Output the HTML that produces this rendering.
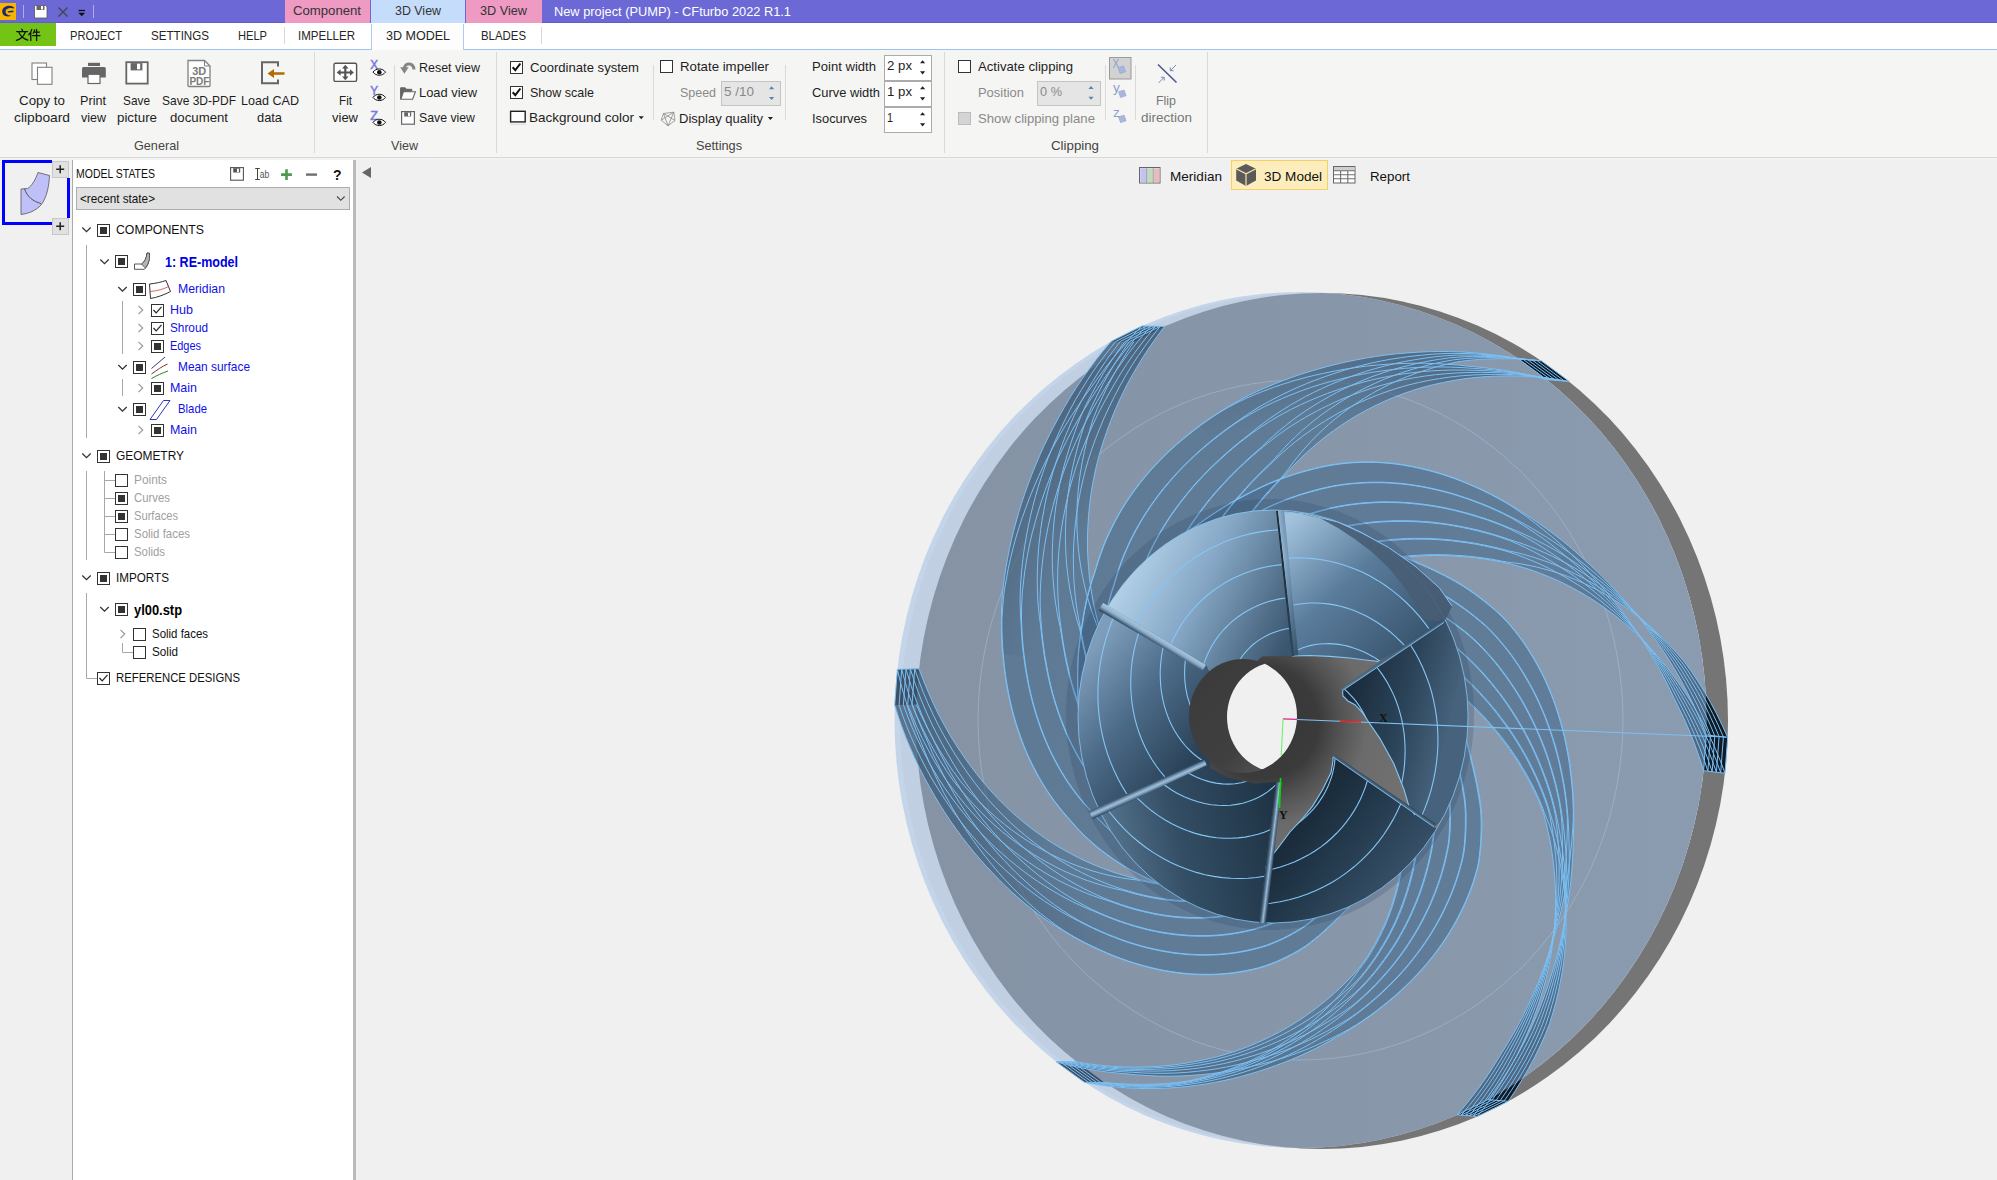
<!DOCTYPE html>
<html><head><meta charset="utf-8"><title>CFturbo</title><style>
*{box-sizing:border-box}
html,body{margin:0;padding:0}
body{width:1997px;height:1180px;overflow:hidden;background:#f0f0f0;font-family:"Liberation Sans",sans-serif;position:relative}
.a{position:absolute}
.t{position:absolute;white-space:nowrap;transform-origin:0 50%;line-height:20px;height:20px}
svg{position:absolute;overflow:visible}
.cb{position:absolute;width:13px;height:13px;border:1px solid #333;background:#fff}
.cbm::after{content:"";position:absolute;left:2px;top:2px;width:7px;height:7px;background:#333}
.sp{position:absolute;background:#fff;border:1px solid #ababab}
.spd{background:#e5e5e5;border-color:#c4c4c4}
.vs{position:absolute;width:1px;background:#dadada}
</style></head><body>
<svg width="1997" height="1180" viewBox="0 0 1997 1180" style="left:0;top:0">
<defs>
<clipPath id="cHub"><ellipse cx="1322" cy="721" rx="406" ry="428"/></clipPath>
<clipPath id="cSh"><ellipse cx="1300.5" cy="720" rx="406" ry="428"/></clipPath>
<clipPath id="cNotSh"><path clip-rule="evenodd" d="M800,200H1800V1200H800Z M894.5,720 a406,428 0 1,0 812,0 a406,428 0 1,0 -812,0Z"/></clipPath>
<linearGradient id="gFace" x1="0" x2="1" y1="0" y2="0"><stop offset="0" stop-color="#8593a5"/><stop offset="0.5" stop-color="#8796a9"/><stop offset="1" stop-color="#8c9cb0"/></linearGradient>
</defs>
<ellipse cx="1322" cy="721" rx="406" ry="428" fill="#757575"/>
<ellipse cx="1300.5" cy="720" rx="406" ry="428" fill="#c5d5e9"/>
<ellipse cx="1304" cy="720" rx="404" ry="426.5" fill="#c0cfe1" clip-path="url(#cSh)"/>
<g clip-path="url(#cSh)"><ellipse cx="1322" cy="721" rx="406" ry="428" fill="url(#gFace)"/></g>
<ellipse cx="1300.5" cy="720" rx="322.5" ry="340" fill="none" stroke="#a9c4dd" stroke-width="0.7" opacity="0.7"/>
<defs><path id="bf0" d="M1706.3,734.9 L1701.9,723.8 L1697.2,712.9 L1716.6,713.8 L1722.3,725.5 L1727.7,737.4Z M1697.2,712.9 L1692.3,702.3 L1687.1,691.9 L1704.3,691.5 L1710.6,702.5 L1716.6,713.8Z M1687.1,691.9 L1681.8,681.7 L1676.2,671.7 L1690.8,670.6 L1697.7,680.9 L1704.3,691.5Z M1676.2,671.7 L1670.4,662.1 L1664.4,652.6 L1676.6,652.8 L1683.7,661.0 L1690.8,670.6Z M1664.4,652.6 L1658.2,643.4 L1651.9,634.5 L1662.0,637.6 L1669.4,645.0 L1676.6,652.8Z M1651.9,634.5 L1645.4,625.8 L1638.8,617.3 L1647.0,623.8 L1654.5,630.5 L1662.0,637.6Z M1647.0,623.8 L1639.4,617.5 L1631.5,611.5 L1625.3,601.2 L1632.0,609.2 L1638.8,617.3Z M1631.5,611.5 L1623.6,605.9 L1615.7,600.6 L1611.4,586.0 L1618.4,593.5 L1625.3,601.2Z M1615.7,600.6 L1607.6,595.7 L1599.6,591.2 L1597.3,571.8 L1604.4,578.8 L1611.4,586.0Z M1599.6,591.2 L1591.6,587.0 L1583.6,583.2 L1583.0,558.5 L1590.1,565.0 L1597.3,571.8Z M1583.6,583.2 L1575.6,579.7 L1567.7,576.5 L1568.7,546.0 L1575.9,552.1 L1583.0,558.5Z M1567.7,576.5 L1559.7,573.7 L1551.9,571.2 L1554.2,534.4 L1561.5,540.1 L1568.7,546.0Z M1551.9,571.2 L1544.2,569.0 L1536.5,567.0 L1539.5,523.8 L1546.9,529.0 L1554.2,534.4Z M1536.5,567.0 L1529.0,565.4 L1521.6,564.0 L1525.0,514.0 L1532.2,518.7 L1539.5,523.8Z M1521.6,564.0 L1514.3,562.9 L1507.2,562.1 L1510.7,505.1 L1517.9,509.4 L1525.0,514.0Z M1507.2,562.1 L1499.1,560.6 L1490.6,559.0 L1496.4,496.9 L1503.6,500.9 L1510.7,505.1Z M1490.6,559.0 L1482.0,557.8 L1473.6,556.7 L1482.0,489.7 L1489.2,493.2 L1496.4,496.9Z M1473.6,556.7 L1465.3,555.9 L1457.0,555.4 L1467.5,483.3 L1474.7,486.4 L1482.0,489.7Z M1457.0,555.4 L1449.1,554.9 L1441.1,554.7 L1453.1,477.6 L1460.3,480.4 L1467.5,483.3Z M1441.1,554.7 L1433.4,554.7 L1425.8,554.8 L1438.6,472.9 L1445.8,475.2 L1453.1,477.6Z M1425.8,554.8 L1418.2,555.3 L1411.0,555.7 L1424.2,468.9 L1431.4,470.8 L1438.6,472.9Z M1411.0,555.7 L1403.8,556.4 L1396.8,557.3 L1409.8,465.9 L1417.0,467.3 L1424.2,468.9Z M1396.8,557.3 L1390.0,558.1 L1383.4,559.2 L1395.4,463.6 L1402.6,464.6 L1409.8,465.9Z M1383.4,559.2 L1377.0,560.3 L1370.7,561.5 L1381.2,462.3 L1388.3,462.9 L1395.4,463.6Z M1370.7,561.5 L1364.6,562.9 L1358.7,564.2 L1367.1,461.9 L1374.1,462.0 L1381.2,462.3Z M1358.7,564.2 L1353.0,565.7 L1347.4,567.2 L1353.2,462.3 L1360.1,462.0 L1367.1,461.9Z M1347.4,567.2 L1342.0,568.7 L1336.8,570.4 L1339.6,463.6 L1346.4,462.8 L1353.2,462.3Z M1336.8,570.4 L1331.7,572.1 L1326.7,573.8 L1326.3,465.7 L1332.9,464.5 L1339.6,463.6Z M1326.7,573.8 L1322.0,575.6 L1317.4,577.4 L1313.3,468.7 L1319.7,467.1 L1326.3,465.7Z M1317.4,577.4 L1312.9,579.2 L1308.6,581.0 L1299.9,472.3 L1306.7,470.4 L1313.3,468.7Z M1308.6,581.0 L1304.4,583.0 L1300.3,584.9 L1286.6,476.6 L1293.2,474.3 L1299.9,472.3Z M1300.3,584.9 L1296.3,586.7 L1292.5,588.7 L1273.8,481.4 L1280.1,478.9 L1286.6,476.6Z M1292.5,588.7 L1288.8,590.7 L1285.1,592.7 L1261.5,486.8 L1267.6,484.0 L1273.8,481.4Z M1285.1,592.7 L1281.6,594.8 L1278.2,596.9 L1249.3,492.8 L1255.4,489.8 L1261.5,486.8Z M1278.2,596.9 L1274.9,599.1 L1271.7,601.2 L1237.3,499.1 L1243.2,495.9 L1249.3,492.8Z M1271.7,601.2 L1268.6,603.4 L1265.6,605.6 L1226.0,505.6 L1231.6,502.3 L1237.3,499.1Z M1265.6,605.6 L1262.7,607.9 L1259.9,610.2 L1215.3,512.4 L1220.5,509.0 L1226.0,505.6Z M1259.9,610.2 L1257.2,612.5 L1254.5,614.8 L1205.1,519.3 L1210.1,515.8 L1215.3,512.4Z M1254.5,614.8 L1252.0,617.2 L1249.6,619.6 L1195.5,526.1 L1200.3,522.7 L1205.1,519.3Z M1249.6,619.6 L1247.2,622.0 L1245.0,624.4 L1186.4,532.6 L1190.9,529.3 L1195.5,526.1Z M1245.0,624.4 L1242.8,626.9 L1240.8,629.4 L1177.7,538.9 L1182.0,535.8 L1186.4,532.6Z M1240.8,629.4 L1238.8,631.9 L1236.9,634.4 L1169.2,544.8 L1173.4,541.9 L1177.7,538.9Z M1236.9,634.4 L1235.1,636.9 L1233.4,639.4 L1161.0,550.6 L1165.1,547.7 L1169.2,544.8Z M1233.4,639.4 L1231.8,641.9 L1230.2,644.3 L1153.1,556.8 L1157.0,553.6 L1161.0,550.6Z M1230.2,644.3 L1228.7,646.8 L1227.3,649.2 L1145.4,563.3 L1149.2,560.0 L1153.1,556.8Z M1227.3,649.2 L1225.9,651.6 L1224.7,654.0 L1138.1,570.3 L1141.7,566.8 L1145.4,563.3Z M1224.7,654.0 L1223.4,656.3 L1222.2,658.6 L1131.2,577.7 L1134.6,574.0 L1138.1,570.3Z M1222.2,658.6 L1221.1,660.8 L1219.9,662.9 L1124.6,585.4 L1127.8,581.5 L1131.2,577.7Z M1219.9,662.9 L1218.8,665.1 L1217.6,667.1 L1118.4,593.5 L1121.4,589.4 L1124.6,585.4Z M1217.6,667.1 L1216.4,669.0 L1215.3,670.9 L1112.6,601.9 L1115.4,597.7 L1118.4,593.5Z M1703.6,770.7 L1700.1,759.6 L1696.3,748.8 L1715.7,749.7 L1720.5,761.3 L1725.0,773.2Z M1696.3,748.8 L1692.3,738.1 L1688.0,727.7 L1705.3,727.3 L1710.6,738.3 L1715.7,749.7Z M1688.0,727.7 L1683.5,717.5 L1678.7,707.5 L1693.7,706.3 L1699.6,716.7 L1705.3,727.3Z M1678.7,707.5 L1673.8,697.4 L1668.5,686.4 L1681.0,686.6 L1687.5,696.3 L1693.7,706.3Z M1668.5,686.4 L1663.0,675.6 L1657.3,665.1 L1667.5,668.2 L1674.3,677.2 L1681.0,686.6Z M1657.3,665.1 L1651.3,654.8 L1645.1,644.7 L1653.3,651.2 L1660.5,659.5 L1667.5,668.2Z M1645.1,644.7 L1638.7,634.9 L1632.2,625.4 L1638.3,635.7 L1645.9,643.3 L1653.3,651.2Z M1638.3,635.7 L1630.6,628.5 L1622.7,621.7 L1618.6,607.0 L1625.4,616.1 L1632.2,625.4Z M1622.7,621.7 L1614.6,615.2 L1606.5,609.2 L1604.5,589.6 L1611.6,598.2 L1618.6,607.0Z M1606.5,609.2 L1598.4,603.4 L1590.2,598.1 L1589.9,573.2 L1597.2,581.3 L1604.5,589.6Z M1590.2,598.1 L1581.9,593.1 L1573.6,588.5 L1575.0,557.8 L1582.5,565.3 L1589.9,573.2Z M1573.6,588.5 L1565.3,584.2 L1557.0,580.2 L1559.6,543.3 L1567.4,550.4 L1575.0,557.8Z M1557.0,580.2 L1548.8,576.7 L1540.5,573.4 L1543.7,530.0 L1551.7,536.5 L1559.6,543.3Z M1540.5,573.4 L1532.4,570.4 L1524.2,567.8 L1527.8,517.6 L1535.7,523.6 L1543.7,530.0Z M1524.2,567.8 L1516.2,565.5 L1508.2,563.4 L1511.8,506.4 L1519.8,511.9 L1527.8,517.6Z M1508.2,563.4 L1500.0,561.7 L1491.5,560.1 L1497.4,498.0 L1504.5,501.9 L1511.8,506.4Z M1491.5,560.1 L1483.0,558.8 L1474.6,557.7 L1483.0,490.7 L1490.2,494.2 L1497.4,498.0Z M1474.6,557.7 L1466.3,556.9 L1458.0,556.3 L1468.6,484.2 L1475.8,487.3 L1483.0,490.7Z M1458.0,556.3 L1450.1,555.8 L1442.2,555.6 L1454.2,478.5 L1461.4,481.2 L1468.6,484.2Z M1442.2,555.6 L1434.5,555.5 L1426.9,555.7 L1439.8,473.7 L1447.0,476.0 L1454.2,478.5Z M1426.9,555.7 L1419.4,556.1 L1412.1,556.5 L1425.3,469.7 L1432.5,471.6 L1439.8,473.7Z M1412.1,556.5 L1404.9,557.2 L1398.0,558.0 L1411.0,466.5 L1418.1,468.0 L1425.3,469.7Z M1398.0,558.0 L1391.2,558.8 L1384.6,559.8 L1396.7,464.2 L1403.8,465.3 L1411.0,466.5Z M1384.6,559.8 L1378.2,560.9 L1372.0,562.1 L1382.5,462.8 L1389.6,463.4 L1396.7,464.2Z M1372.0,562.1 L1365.9,563.4 L1360.0,564.7 L1368.4,462.4 L1375.4,462.5 L1382.5,462.8Z M1360.0,564.7 L1354.3,566.2 L1348.7,567.6 L1354.6,462.7 L1361.5,462.4 L1368.4,462.4Z M1348.7,567.6 L1343.3,569.1 L1338.1,570.8 L1341.0,463.9 L1347.7,463.2 L1354.6,462.7Z M1338.1,570.8 L1333.0,572.4 L1328.1,574.1 L1327.6,466.0 L1334.3,464.8 L1341.0,463.9Z M1328.1,574.1 L1323.3,575.8 L1318.7,577.6 L1314.6,468.8 L1321.1,467.3 L1327.6,466.0Z M1318.7,577.6 L1314.2,579.4 L1309.8,581.2 L1301.2,472.4 L1308.0,470.5 L1314.6,468.8Z M1309.8,581.2 L1305.6,583.0 L1301.5,584.9 L1287.9,476.6 L1294.5,474.4 L1301.2,472.4Z M1301.5,584.9 L1297.5,586.7 L1293.7,588.7 L1275.1,481.4 L1281.5,478.9 L1287.9,476.6Z M1293.7,588.7 L1289.9,590.6 L1286.3,592.6 L1262.8,486.7 L1268.9,483.9 L1275.1,481.4Z M1286.3,592.6 L1282.7,594.7 L1279.3,596.8 L1250.6,492.6 L1256.8,489.6 L1262.8,486.7Z M1279.3,596.8 L1276.0,598.9 L1272.8,601.0 L1238.7,498.8 L1244.6,495.7 L1250.6,492.6Z M1272.8,601.0 L1269.6,603.2 L1266.6,605.4 L1227.3,505.3 L1232.9,502.0 L1238.7,498.8Z M1266.6,605.4 L1263.7,607.6 L1260.9,609.9 L1216.6,512.0 L1221.9,508.6 L1227.3,505.3Z M1260.9,609.9 L1258.1,612.2 L1255.5,614.5 L1206.4,518.8 L1211.4,515.4 L1216.6,512.0Z M1255.5,614.5 L1252.9,616.8 L1250.5,619.2 L1196.8,525.5 L1201.5,522.1 L1206.4,518.8Z M1250.5,619.2 L1248.1,621.6 L1245.8,624.0 L1187.6,532.0 L1192.2,528.7 L1196.8,525.5Z M1245.8,624.0 L1243.7,626.4 L1241.6,628.9 L1178.9,538.2 L1183.2,535.1 L1187.6,532.0Z M1241.6,628.9 L1239.6,631.4 L1237.7,633.9 L1170.4,544.0 L1174.6,541.2 L1178.9,538.2Z M1237.7,633.9 L1235.9,636.4 L1234.1,638.9 L1162.1,549.8 L1166.2,546.9 L1170.4,544.0Z M1234.1,638.9 L1232.5,641.3 L1230.9,643.8 L1154.1,555.9 L1158.1,552.8 L1162.1,549.8Z M1230.9,643.8 L1229.4,646.2 L1227.9,648.6 L1146.5,562.4 L1150.3,559.1 L1154.1,555.9Z M1227.9,648.6 L1226.6,651.0 L1225.3,653.4 L1139.1,569.3 L1142.7,565.8 L1146.5,562.4Z M1225.3,653.4 L1224.0,655.7 L1222.8,657.9 L1132.1,576.7 L1135.6,573.0 L1139.1,569.3Z M1222.8,657.9 L1221.6,660.2 L1220.4,662.3 L1125.5,584.4 L1128.7,580.5 L1132.1,576.7Z M1220.4,662.3 L1219.3,664.4 L1218.1,666.4 L1119.2,592.4 L1122.3,588.3 L1125.5,584.4Z M1218.1,666.4 L1216.9,668.3 L1215.7,670.3 L1113.4,600.8 L1116.2,596.5 L1119.2,592.4Z M1725.0,773.2 L1703.6,770.7 L1706.3,734.9 L1727.7,737.4Z"/><path id="bf1" d="M1541.3,360.8 L1528.8,359.7 L1516.4,358.9 L1495.7,355.2 L1507.2,356.9 L1518.6,359.0Z M1516.4,358.9 L1504.1,358.7 L1491.9,358.8 L1473.0,352.7 L1484.3,353.8 L1495.7,355.2Z M1491.9,358.8 L1479.9,359.4 L1468.0,360.4 L1450.6,351.6 L1461.8,352.0 L1473.0,352.7Z M1468.0,360.4 L1456.5,361.9 L1446.3,364.3 L1428.7,351.7 L1439.6,351.5 L1450.6,351.6Z M1446.3,364.3 L1436.2,366.9 L1426.4,369.9 L1407.1,352.9 L1417.9,352.2 L1428.7,351.7Z M1426.4,369.9 L1416.8,373.0 L1407.5,376.5 L1386.0,355.0 L1396.5,353.8 L1407.1,352.9Z M1407.5,376.5 L1398.4,380.2 L1389.6,384.3 L1365.6,358.1 L1375.7,356.5 L1386.0,355.0Z M1389.6,384.3 L1381.0,388.6 L1372.7,393.2 L1345.7,362.0 L1355.6,360.0 L1365.6,358.1Z M1372.7,393.2 L1364.6,398.0 L1356.8,403.0 L1326.5,366.7 L1336.0,364.3 L1345.7,362.0Z M1356.8,403.0 L1349.3,408.1 L1342.1,413.4 L1308.0,372.0 L1317.2,369.3 L1326.5,366.7Z M1342.1,413.4 L1335.2,418.9 L1328.6,424.5 L1290.3,377.9 L1299.1,374.8 L1308.0,372.0Z M1328.6,424.5 L1322.3,430.3 L1316.2,436.1 L1273.1,384.5 L1281.6,381.1 L1290.3,377.9Z M1316.2,436.1 L1310.5,442.0 L1305.0,448.0 L1256.7,391.6 L1264.8,388.0 L1273.1,384.5Z M1305.0,448.0 L1299.9,454.0 L1295.0,460.1 L1241.1,399.4 L1248.7,395.4 L1256.7,391.6Z M1295.0,460.1 L1290.4,466.1 L1286.1,472.1 L1226.5,407.7 L1233.7,403.5 L1241.1,399.4Z M1286.1,472.1 L1280.6,478.4 L1274.6,484.6 L1212.6,416.5 L1219.5,412.1 L1226.5,407.7Z M1274.6,484.6 L1268.9,490.9 L1263.4,497.1 L1199.3,425.8 L1205.9,421.1 L1212.6,416.5Z M1263.4,497.1 L1258.1,503.4 L1253.0,509.7 L1186.7,435.6 L1192.9,430.7 L1199.3,425.8Z M1253.0,509.7 L1248.2,515.9 L1243.6,522.0 L1174.7,445.8 L1180.6,440.6 L1186.7,435.6Z M1243.6,522.0 L1239.2,528.2 L1235.0,534.2 L1163.4,456.4 L1169.0,451.0 L1174.7,445.8Z M1235.0,534.2 L1231.1,540.4 L1227.4,546.3 L1152.9,467.4 L1158.1,461.9 L1163.4,456.4Z M1227.4,546.3 L1223.9,552.3 L1220.6,558.2 L1143.0,478.9 L1147.8,473.1 L1152.9,467.4Z M1220.6,558.2 L1217.5,563.9 L1214.6,569.6 L1133.9,490.7 L1138.3,484.7 L1143.0,478.9Z M1214.6,569.6 L1211.9,575.2 L1209.3,580.7 L1125.5,502.8 L1129.6,496.7 L1133.9,490.7Z M1209.3,580.7 L1206.9,586.1 L1204.7,591.4 L1118.0,515.3 L1121.7,509.1 L1125.5,502.8Z M1204.7,591.4 L1202.6,596.6 L1200.7,601.7 L1111.3,528.1 L1114.5,521.7 L1118.0,515.3Z M1200.7,601.7 L1198.9,606.6 L1197.3,611.6 L1105.3,541.0 L1108.2,534.5 L1111.3,528.1Z M1197.3,611.6 L1195.7,616.3 L1194.4,621.1 L1100.3,554.1 L1102.7,547.5 L1105.3,541.0Z M1194.4,621.1 L1193.1,625.7 L1191.9,630.1 L1096.1,567.3 L1098.1,560.7 L1100.3,554.1Z M1191.9,630.1 L1190.9,634.6 L1189.9,638.8 L1091.8,580.4 L1094.0,573.9 L1096.1,567.3Z M1189.9,638.8 L1189.1,643.1 L1188.3,647.2 L1088.1,593.5 L1089.9,587.0 L1091.8,580.4Z M1188.3,647.2 L1187.6,651.3 L1187.0,655.2 L1085.1,606.4 L1086.5,600.0 L1088.1,593.5Z M1187.0,655.2 L1186.5,659.1 L1186.1,663.0 L1082.8,619.2 L1083.9,612.8 L1085.1,606.4Z M1186.1,663.0 L1185.8,666.8 L1185.6,670.5 L1080.9,631.7 L1081.9,625.5 L1082.8,619.2Z M1185.6,670.5 L1185.5,674.1 L1185.4,677.7 L1079.2,644.0 L1080.0,637.9 L1080.9,631.7Z M1185.4,677.7 L1185.4,681.2 L1185.5,684.6 L1078.1,655.9 L1078.6,650.0 L1079.2,644.0Z M1185.5,684.6 L1185.7,688.0 L1185.9,691.3 L1077.6,667.5 L1077.8,661.7 L1078.1,655.9Z M1185.9,691.3 L1186.3,694.5 L1186.6,697.7 L1077.5,678.8 L1077.5,673.2 L1077.6,667.5Z M1186.6,697.7 L1187.1,700.8 L1187.6,703.9 L1077.7,689.8 L1077.5,684.3 L1077.5,678.8Z M1187.6,703.9 L1188.3,706.8 L1188.9,709.7 L1078.0,700.4 L1077.8,695.1 L1077.7,689.8Z M1188.9,709.7 L1189.7,712.6 L1190.5,715.3 L1078.5,710.9 L1078.2,705.7 L1078.0,700.4Z M1190.5,715.3 L1191.4,718.0 L1192.3,720.6 L1078.9,721.3 L1078.7,716.1 L1078.5,710.9Z M1192.3,720.6 L1193.3,723.2 L1194.3,725.7 L1079.4,731.7 L1079.1,726.5 L1078.9,721.3Z M1194.3,725.7 L1195.3,728.1 L1196.4,730.4 L1080.4,742.0 L1079.9,736.9 L1079.4,731.7Z M1196.4,730.4 L1197.5,732.7 L1198.6,734.9 L1081.9,752.3 L1081.1,747.2 L1080.4,742.0Z M1198.6,734.9 L1199.7,737.0 L1200.9,739.1 L1083.9,762.5 L1082.9,757.4 L1081.9,752.3Z M1200.9,739.1 L1202.0,741.2 L1203.2,743.2 L1086.4,772.6 L1085.1,767.5 L1083.9,762.5Z M1203.2,743.2 L1204.3,745.2 L1205.4,747.1 L1089.4,782.5 L1087.9,777.5 L1086.4,772.6Z M1205.4,747.1 L1206.5,749.1 L1207.5,751.1 L1092.9,792.2 L1091.1,787.4 L1089.4,782.5Z M1207.5,751.1 L1208.4,753.1 L1209.4,755.1 L1096.8,801.7 L1094.8,797.0 L1092.9,792.2Z M1546.5,379.5 L1535.5,376.7 L1524.5,374.2 L1545.2,377.9 L1557.2,379.5 L1569.2,381.4Z M1545.2,377.9 L1533.4,376.8 L1521.7,376.1 L1502.7,370.2 L1513.6,372.0 L1524.5,374.2Z M1521.7,376.1 L1510.1,375.8 L1498.6,376.0 L1481.1,367.4 L1491.9,368.6 L1502.7,370.2Z M1498.6,376.0 L1487.3,376.5 L1476.1,377.4 L1458.4,365.1 L1470.2,366.4 L1481.1,367.4Z M1476.1,377.4 L1465.0,378.7 L1454.2,380.4 L1434.8,363.6 L1446.6,364.2 L1458.4,365.1Z M1454.2,380.4 L1443.5,382.4 L1433.1,384.7 L1411.6,363.2 L1423.2,363.2 L1434.8,363.6Z M1433.1,384.7 L1422.9,387.3 L1412.8,390.4 L1388.8,364.1 L1400.1,363.6 L1411.6,363.2Z M1412.8,390.4 L1403.0,393.8 L1393.4,397.5 L1366.5,366.1 L1377.6,365.0 L1388.8,364.1Z M1393.4,397.5 L1384.1,401.5 L1375.0,405.8 L1344.8,369.2 L1355.6,367.6 L1366.5,366.1Z M1375.0,405.8 L1366.2,410.3 L1357.6,415.0 L1323.6,373.3 L1334.1,371.2 L1344.8,369.2Z M1357.6,415.0 L1349.4,420.0 L1341.4,425.2 L1303.1,378.1 L1313.2,375.6 L1323.6,373.3Z M1341.4,425.2 L1333.7,430.6 L1326.2,436.1 L1283.1,384.1 L1293.0,381.0 L1303.1,378.1Z M1326.2,436.1 L1319.1,441.8 L1312.3,447.6 L1263.9,391.0 L1273.4,387.4 L1283.1,384.1Z M1312.3,447.6 L1305.7,453.5 L1299.4,459.6 L1245.5,398.7 L1254.5,394.7 L1263.9,391.0Z M1299.4,459.6 L1293.4,465.7 L1287.7,471.9 L1228.2,407.4 L1236.7,402.9 L1245.5,398.7Z M1287.7,471.9 L1281.9,478.1 L1276.0,484.3 L1213.9,416.1 L1220.8,411.7 L1228.2,407.4Z M1276.0,484.3 L1270.2,490.6 L1264.7,496.8 L1200.6,425.4 L1207.2,420.7 L1213.9,416.1Z M1264.7,496.8 L1259.4,503.0 L1254.3,509.3 L1188.0,435.1 L1194.2,430.2 L1200.6,425.4Z M1254.3,509.3 L1249.5,515.4 L1244.8,521.5 L1176.0,445.2 L1181.9,440.1 L1188.0,435.1Z M1244.8,521.5 L1240.5,527.6 L1236.3,533.7 L1164.7,455.8 L1170.2,450.4 L1176.0,445.2Z M1236.3,533.7 L1232.4,539.8 L1228.6,545.7 L1154.0,466.7 L1159.3,461.2 L1164.7,455.8Z M1228.6,545.7 L1225.1,551.6 L1221.8,557.5 L1144.1,478.1 L1149.0,472.4 L1154.0,466.7Z M1221.8,557.5 L1218.7,563.2 L1215.7,568.8 L1135.0,489.9 L1139.5,483.9 L1144.1,478.1Z M1215.7,568.8 L1213.0,574.4 L1210.4,579.8 L1126.6,502.0 L1130.7,495.9 L1135.0,489.9Z M1210.4,579.8 L1208.0,585.2 L1205.8,590.5 L1119.0,514.4 L1122.7,508.1 L1126.6,502.0Z M1205.8,590.5 L1203.7,595.7 L1201.7,600.7 L1112.3,527.1 L1115.6,520.7 L1119.0,514.4Z M1201.7,600.7 L1199.9,605.7 L1198.2,610.6 L1106.3,539.9 L1109.2,533.5 L1112.3,527.1Z M1198.2,610.6 L1196.7,615.3 L1195.3,620.0 L1101.2,553.0 L1103.6,546.4 L1106.3,539.9Z M1195.3,620.0 L1193.9,624.6 L1192.7,629.1 L1096.9,566.1 L1098.9,559.6 L1101.2,553.0Z M1192.7,629.1 L1191.7,633.5 L1190.6,637.8 L1092.6,579.2 L1094.8,572.7 L1096.9,566.1Z M1190.6,637.8 L1189.8,642.0 L1189.0,646.1 L1088.8,592.3 L1090.6,585.8 L1092.6,579.2Z M1189.0,646.1 L1188.2,650.2 L1187.6,654.2 L1085.8,605.2 L1087.2,598.7 L1088.8,592.3Z M1187.6,654.2 L1187.1,658.1 L1186.6,661.9 L1083.4,617.9 L1084.5,611.5 L1085.8,605.2Z M1186.6,661.9 L1186.3,665.7 L1186.0,669.4 L1081.4,630.4 L1082.5,624.2 L1083.4,617.9Z M1186.0,669.4 L1185.9,673.0 L1185.8,676.6 L1079.7,642.6 L1080.5,636.5 L1081.4,630.4Z M1185.8,676.6 L1185.8,680.1 L1185.8,683.6 L1078.5,654.5 L1079.0,648.6 L1079.7,642.6Z M1185.8,683.6 L1186.0,686.9 L1186.2,690.3 L1077.9,666.1 L1078.1,660.4 L1078.5,654.5Z M1186.2,690.3 L1186.5,693.5 L1186.8,696.7 L1077.8,677.4 L1077.8,671.8 L1077.9,666.1Z M1186.8,696.7 L1187.3,699.8 L1187.8,702.8 L1077.9,688.3 L1077.8,682.9 L1077.8,677.4Z M1187.8,702.8 L1188.4,705.8 L1189.0,708.7 L1078.1,699.0 L1078.0,693.7 L1077.9,688.3Z M1189.0,708.7 L1189.7,711.6 L1190.5,714.4 L1078.5,709.5 L1078.3,704.3 L1078.1,699.0Z M1190.5,714.4 L1191.4,717.1 L1192.3,719.7 L1078.8,719.9 L1078.7,714.7 L1078.5,709.5Z M1192.3,719.7 L1193.2,722.3 L1194.2,724.8 L1079.3,730.3 L1079.1,725.1 L1078.8,719.9Z M1194.2,724.8 L1195.2,727.2 L1196.3,729.5 L1080.3,740.6 L1079.7,735.4 L1079.3,730.3Z M1196.3,729.5 L1197.3,731.8 L1198.5,734.0 L1081.7,750.9 L1080.9,745.8 L1080.3,740.6Z M1198.5,734.0 L1199.6,736.2 L1200.7,738.3 L1083.6,761.1 L1082.6,756.0 L1081.7,750.9Z M1200.7,738.3 L1201.8,740.4 L1202.9,742.4 L1086.1,771.2 L1084.8,766.1 L1083.6,761.1Z M1202.9,742.4 L1204.1,744.4 L1205.1,746.4 L1089.0,781.1 L1087.5,776.2 L1086.1,771.2Z M1205.1,746.4 L1206.2,748.3 L1207.2,750.3 L1092.4,790.9 L1090.6,786.0 L1089.0,781.1Z M1207.2,750.3 L1208.1,752.3 L1209.1,754.3 L1096.3,800.4 L1094.3,795.7 L1092.4,790.9Z M1569.2,381.4 L1546.5,379.5 L1518.6,359.0 L1541.3,360.8Z"/><path id="bf2" d="M1133.9,341.7 L1126.7,352.6 L1120.0,363.6 L1096.2,359.6 L1103.5,350.4 L1111.1,341.4Z M1120.0,363.6 L1113.7,374.7 L1107.7,385.9 L1082.6,378.3 L1089.3,368.9 L1096.2,359.6Z M1107.7,385.9 L1102.3,397.3 L1097.2,408.7 L1070.2,397.3 L1076.3,387.7 L1082.6,378.3Z M1097.2,408.7 L1092.8,419.9 L1089.6,430.5 L1059.1,416.6 L1064.5,406.9 L1070.2,397.3Z M1089.6,430.5 L1086.8,441.0 L1084.4,451.4 L1048.9,435.9 L1053.9,426.3 L1059.1,416.6Z M1084.4,451.4 L1082.3,461.7 L1080.5,472.0 L1039.8,455.2 L1044.2,445.6 L1048.9,435.9Z M1080.5,472.0 L1079.1,482.1 L1078.0,492.3 L1031.8,474.5 L1035.7,464.9 L1039.8,455.2Z M1078.0,492.3 L1077.3,502.3 L1077.0,512.2 L1024.8,493.6 L1028.2,484.1 L1031.8,474.5Z M1077.0,512.2 L1076.9,522.0 L1077.2,531.6 L1018.7,512.5 L1021.6,503.1 L1024.8,493.6Z M1077.2,531.6 L1077.7,541.0 L1078.5,550.2 L1013.6,531.2 L1016.1,521.9 L1018.7,512.5Z M1078.5,550.2 L1079.6,559.2 L1081.0,568.1 L1009.3,549.6 L1011.3,540.4 L1013.6,531.2Z M1081.0,568.1 L1082.6,576.7 L1084.4,585.1 L1005.9,567.8 L1007.5,558.7 L1009.3,549.6Z M1084.4,585.1 L1086.4,593.3 L1088.6,601.3 L1003.4,585.7 L1004.5,576.7 L1005.9,567.8Z M1088.6,601.3 L1091.0,608.9 L1093.6,616.4 L1001.8,603.3 L1002.4,594.5 L1003.4,585.7Z M1093.6,616.4 L1096.3,623.6 L1099.1,630.6 L1001.4,620.6 L1001.5,612.0 L1001.8,603.3Z M1099.1,630.6 L1101.4,638.3 L1103.2,646.1 L1001.7,637.7 L1001.5,629.2 L1001.4,620.6Z M1103.2,646.1 L1105.2,653.7 L1107.2,661.0 L1002.8,654.3 L1002.1,646.0 L1001.7,637.7Z M1107.2,661.0 L1109.3,668.1 L1111.6,674.9 L1004.5,670.6 L1003.6,662.5 L1002.8,654.3Z M1111.6,674.9 L1113.8,681.5 L1116.1,687.8 L1006.9,686.6 L1005.6,678.6 L1004.5,670.6Z M1116.1,687.8 L1118.6,694.0 L1121.1,699.9 L1010.1,702.1 L1008.4,694.4 L1006.9,686.6Z M1121.1,699.9 L1123.8,705.6 L1126.4,711.0 L1013.9,717.1 L1011.9,709.7 L1010.1,702.1Z M1126.4,711.0 L1129.2,716.3 L1132.0,721.3 L1018.4,731.7 L1016.0,724.5 L1013.9,717.1Z M1132.0,721.3 L1134.7,726.1 L1137.6,730.7 L1023.6,745.9 L1020.9,738.9 L1018.4,731.7Z M1137.6,730.7 L1140.4,735.2 L1143.3,739.4 L1029.4,759.4 L1026.4,752.7 L1023.6,745.9Z M1143.3,739.4 L1146.2,743.5 L1149.1,747.4 L1035.9,772.4 L1032.6,766.0 L1029.4,759.4Z M1149.1,747.4 L1152.0,751.1 L1154.8,754.6 L1043.1,784.8 L1039.4,778.7 L1035.9,772.4Z M1154.8,754.6 L1157.7,758.0 L1160.6,761.2 L1050.7,796.5 L1046.8,790.7 L1043.1,784.8Z M1160.6,761.2 L1163.5,764.3 L1166.4,767.3 L1059.0,807.6 L1054.8,802.1 L1050.7,796.5Z M1166.4,767.3 L1169.2,770.1 L1172.0,772.8 L1067.7,817.9 L1063.3,812.8 L1059.0,807.6Z M1172.0,772.8 L1174.9,775.3 L1177.7,777.7 L1076.1,827.4 L1072.0,822.7 L1067.7,817.9Z M1177.7,777.7 L1180.5,780.0 L1183.3,782.3 L1084.5,836.0 L1080.2,831.8 L1076.1,827.4Z M1183.3,782.3 L1186.0,784.4 L1188.7,786.4 L1093.2,844.0 L1088.8,840.1 L1084.5,836.0Z M1188.7,786.4 L1191.5,788.3 L1194.2,790.1 L1102.1,851.3 L1097.6,847.8 L1093.2,844.0Z M1194.2,790.1 L1197.0,791.7 L1199.7,793.3 L1110.8,857.7 L1106.6,854.6 L1102.1,851.3Z M1199.7,793.3 L1202.4,794.8 L1205.1,796.2 L1119.3,863.5 L1115.0,860.7 L1110.8,857.7Z M1205.1,796.2 L1207.8,797.5 L1210.5,798.7 L1127.9,868.7 L1123.6,866.1 L1119.3,863.5Z M1210.5,798.7 L1213.1,799.8 L1215.8,800.7 L1136.5,873.3 L1132.2,871.1 L1127.9,868.7Z M1215.8,800.7 L1218.4,801.7 L1221.0,802.5 L1145.2,877.6 L1140.9,875.5 L1136.5,873.3Z M1221.0,802.5 L1223.7,803.2 L1226.2,803.8 L1153.8,881.6 L1149.5,879.7 L1145.2,877.6Z M1226.2,803.8 L1228.8,804.3 L1231.4,804.8 L1162.4,885.7 L1158.1,883.7 L1153.8,881.6Z M1231.4,804.8 L1233.9,805.1 L1236.4,805.4 L1171.0,889.8 L1166.7,887.8 L1162.4,885.7Z M1236.4,805.4 L1238.9,805.6 L1241.3,805.6 L1179.6,894.3 L1175.3,892.0 L1171.0,889.8Z M1241.3,805.6 L1243.7,805.6 L1246.1,805.6 L1188.5,898.9 L1184.0,896.6 L1179.6,894.3Z M1246.1,805.6 L1248.4,805.5 L1250.7,805.3 L1197.5,903.1 L1192.9,901.1 L1188.5,898.9Z M1250.7,805.3 L1253.0,805.1 L1255.2,804.9 L1206.7,906.8 L1202.1,905.0 L1197.5,903.1Z M1255.2,804.9 L1257.4,804.6 L1259.6,804.3 L1216.1,910.0 L1211.4,908.5 L1206.7,906.8Z M1259.6,804.3 L1261.7,804.0 L1263.8,803.8 L1225.6,912.7 L1220.8,911.5 L1216.1,910.0Z M1263.8,803.8 L1265.9,803.4 L1268.0,803.3 L1235.3,914.9 L1230.4,913.9 L1225.6,912.7Z M1268.0,803.3 L1270.0,803.1 L1272.1,803.0 L1245.0,916.6 L1240.1,915.8 L1235.3,914.9Z M1272.1,803.0 L1274.2,803.1 L1276.3,803.2 L1254.8,917.7 L1249.9,917.2 L1245.0,916.6Z M1164.7,326.4 L1157.1,336.4 L1149.9,346.6 L1126.2,342.6 L1133.9,334.2 L1141.9,326.0Z M1149.9,346.6 L1143.1,356.9 L1136.8,367.3 L1111.7,359.7 L1118.8,351.1 L1126.2,342.6Z M1136.8,367.3 L1130.8,377.7 L1125.2,388.3 L1098.4,377.2 L1104.9,368.4 L1111.7,359.7Z M1125.2,388.3 L1120.0,399.0 L1115.2,409.7 L1084.8,396.0 L1091.9,386.3 L1098.4,377.2Z M1115.2,409.7 L1110.8,420.5 L1106.9,431.2 L1071.5,415.8 L1078.1,405.9 L1084.8,396.0Z M1106.9,431.2 L1103.2,441.9 L1099.9,452.6 L1059.2,435.9 L1065.2,425.8 L1071.5,415.8Z M1099.9,452.6 L1097.0,463.3 L1094.6,474.0 L1048.3,456.2 L1053.6,446.0 L1059.2,435.9Z M1094.6,474.0 L1092.5,484.7 L1090.8,495.3 L1038.5,476.6 L1043.2,466.4 L1048.3,456.2Z M1090.8,495.3 L1089.5,505.9 L1088.5,516.3 L1029.8,497.1 L1034.0,486.9 L1038.5,476.6Z M1088.5,516.3 L1087.9,526.6 L1087.5,536.8 L1022.3,517.6 L1026.0,507.4 L1029.8,497.1Z M1087.5,536.8 L1087.5,546.8 L1087.8,556.7 L1015.8,538.0 L1018.9,527.8 L1022.3,517.6Z M1087.8,556.7 L1088.5,566.4 L1089.3,575.9 L1010.5,558.4 L1013.0,548.2 L1015.8,538.0Z M1089.3,575.9 L1090.5,585.3 L1091.9,594.5 L1006.4,578.7 L1008.3,568.6 L1010.5,558.4Z M1091.9,594.5 L1093.5,603.4 L1095.4,612.1 L1003.4,598.9 L1004.6,588.8 L1006.4,578.7Z M1095.4,612.1 L1097.5,620.6 L1099.7,628.9 L1001.9,619.0 L1002.6,609.0 L1003.4,598.9Z M1099.7,628.9 L1101.8,637.0 L1103.6,644.8 L1002.1,636.3 L1001.9,627.8 L1001.9,619.0Z M1103.6,644.8 L1105.6,652.3 L1107.5,659.6 L1003.1,652.9 L1002.5,644.6 L1002.1,636.3Z M1107.5,659.6 L1109.6,666.7 L1111.9,673.5 L1004.7,669.2 L1003.8,661.1 L1003.1,652.9Z M1111.9,673.5 L1114.0,680.1 L1116.4,686.4 L1007.1,685.1 L1005.8,677.2 L1004.7,669.2Z M1116.4,686.4 L1118.8,692.5 L1121.3,698.4 L1010.1,700.6 L1008.5,692.9 L1007.1,685.1Z M1121.3,698.4 L1123.9,704.1 L1126.5,709.6 L1013.9,715.7 L1011.9,708.2 L1010.1,700.6Z M1126.5,709.6 L1129.2,714.8 L1132.0,719.9 L1018.3,730.3 L1016.0,723.1 L1013.9,715.7Z M1132.0,719.9 L1134.7,724.7 L1137.5,729.3 L1023.4,744.4 L1020.8,737.4 L1018.3,730.3Z M1137.5,729.3 L1140.3,733.7 L1143.1,738.0 L1029.2,758.0 L1026.2,751.3 L1023.4,744.4Z M1143.1,738.0 L1146.0,742.0 L1148.8,745.9 L1035.7,771.0 L1032.4,764.6 L1029.2,758.0Z M1148.8,745.9 L1151.7,749.6 L1154.6,753.2 L1042.7,783.4 L1039.1,777.3 L1035.7,771.0Z M1154.6,753.2 L1157.4,756.6 L1160.3,759.9 L1050.3,795.2 L1046.4,789.4 L1042.7,783.4Z M1160.3,759.9 L1163.1,763.0 L1166.0,765.9 L1058.5,806.2 L1054.3,800.8 L1050.3,795.2Z M1166.0,765.9 L1168.8,768.8 L1171.6,771.5 L1067.2,816.6 L1062.8,811.5 L1058.5,806.2Z M1171.6,771.5 L1174.4,774.0 L1177.2,776.5 L1075.5,826.1 L1071.4,821.4 L1067.2,816.6Z M1177.2,776.5 L1179.9,778.9 L1182.7,781.1 L1083.8,834.8 L1079.6,830.5 L1075.5,826.1Z M1182.7,781.1 L1185.4,783.3 L1188.1,785.3 L1092.5,842.8 L1088.1,838.9 L1083.8,834.8Z M1188.1,785.3 L1190.9,787.2 L1193.6,789.1 L1101.3,850.1 L1096.9,846.6 L1092.5,842.8Z M1193.6,789.1 L1196.3,790.8 L1199.0,792.4 L1110.0,856.6 L1105.8,853.5 L1101.3,850.1Z M1199.0,792.4 L1201.7,793.9 L1204.4,795.3 L1118.4,862.4 L1114.2,859.6 L1110.0,856.6Z M1204.4,795.3 L1207.1,796.6 L1209.8,797.8 L1127.0,867.6 L1122.7,865.1 L1118.4,862.4Z M1209.8,797.8 L1212.4,799.0 L1215.1,800.0 L1135.5,872.3 L1131.2,870.1 L1127.0,867.6Z M1215.1,800.0 L1217.7,800.9 L1220.3,801.8 L1144.2,876.6 L1139.9,874.6 L1135.5,872.3Z M1220.3,801.8 L1222.9,802.5 L1225.5,803.2 L1152.7,880.8 L1148.5,878.8 L1144.2,876.6Z M1225.5,803.2 L1228.0,803.7 L1230.6,804.2 L1161.3,884.9 L1157.0,882.9 L1152.7,880.8Z M1230.6,804.2 L1233.1,804.6 L1235.6,804.9 L1169.8,889.1 L1165.6,887.0 L1161.3,884.9Z M1235.6,804.9 L1238.1,805.1 L1240.5,805.2 L1178.5,893.7 L1174.1,891.3 L1169.8,889.1Z M1240.5,805.2 L1242.9,805.2 L1245.3,805.2 L1187.2,898.3 L1182.8,896.0 L1178.5,893.7Z M1245.3,805.2 L1247.6,805.1 L1249.9,805.0 L1196.2,902.6 L1191.7,900.5 L1187.2,898.3Z M1249.9,805.0 L1252.2,804.8 L1254.4,804.6 L1205.4,906.4 L1200.8,904.5 L1196.2,902.6Z M1254.4,804.6 L1256.6,804.4 L1258.8,804.1 L1214.8,909.6 L1210.1,908.1 L1205.4,906.4Z M1258.8,804.1 L1260.9,803.8 L1263.0,803.6 L1224.3,912.4 L1219.5,911.1 L1214.8,909.6Z M1263.0,803.6 L1265.1,803.3 L1267.2,803.1 L1233.9,914.6 L1229.1,913.6 L1224.3,912.4Z M1267.2,803.1 L1269.3,803.0 L1271.3,802.9 L1243.6,916.4 L1238.8,915.6 L1233.9,914.6Z M1271.3,802.9 L1273.4,803.1 L1275.6,803.1 L1253.4,917.6 L1248.5,917.0 L1243.6,916.4Z M1133.9,341.7 L1111.1,341.4 L1141.9,326.0 L1164.7,326.4Z"/><path id="bf3" d="M916.3,704.6 L921.7,716.5 L927.4,728.2 L901.9,726.8 L898.2,716.1 L894.7,705.1Z M927.4,728.2 L933.4,739.5 L939.7,750.5 L910.2,747.7 L905.9,737.4 L901.9,726.8Z M939.7,750.5 L946.3,761.1 L953.2,771.4 L919.3,767.6 L914.6,757.8 L910.2,747.7Z M953.2,771.4 L960.3,781.0 L967.4,789.2 L929.3,786.5 L924.2,777.2 L919.3,767.6Z M967.4,789.2 L974.6,797.0 L982.0,804.4 L939.7,804.4 L934.5,795.6 L929.3,786.5Z M982.0,804.4 L989.5,811.5 L997.0,818.2 L950.7,821.3 L945.1,812.9 L939.7,804.4Z M997.0,818.2 L1004.6,824.5 L1012.5,830.5 L962.1,837.2 L956.4,829.3 L950.7,821.3Z M1012.5,830.5 L1020.4,836.1 L1028.3,841.4 L973.9,852.1 L968.0,844.7 L962.1,837.2Z M1028.3,841.4 L1036.4,846.3 L1044.4,850.8 L986.1,866.1 L980.0,859.2 L973.9,852.1Z M1044.4,850.8 L1052.4,855.0 L1060.4,858.8 L998.6,879.2 L992.4,872.7 L986.1,866.1Z M1060.4,858.8 L1068.4,862.3 L1076.3,865.5 L1011.2,891.5 L1004.9,885.4 L998.6,879.2Z M1076.3,865.5 L1084.3,868.3 L1092.1,870.8 L1024.2,902.8 L1017.7,897.3 L1011.2,891.5Z M1092.1,870.8 L1099.8,873.0 L1107.5,875.0 L1037.4,913.3 L1030.8,908.2 L1024.2,902.8Z M1107.5,875.0 L1115.0,876.6 L1122.4,878.0 L1050.9,923.0 L1044.0,918.3 L1037.4,913.3Z M1122.4,878.0 L1129.7,879.1 L1136.8,879.9 L1065.0,931.9 L1057.9,927.5 L1050.9,923.0Z M1136.8,879.9 L1144.1,881.4 L1151.1,882.8 L1079.1,940.0 L1072.0,936.0 L1065.0,931.9Z M1151.1,882.8 L1157.9,884.0 L1164.5,884.9 L1093.3,947.2 L1086.2,943.7 L1079.1,940.0Z M1164.5,884.9 L1171.0,885.6 L1177.3,886.0 L1107.5,953.6 L1100.4,950.5 L1093.3,947.2Z M1177.3,886.0 L1183.4,886.4 L1189.4,886.4 L1121.8,959.2 L1114.7,956.5 L1107.5,953.6Z M1189.4,886.4 L1195.2,886.3 L1200.9,886.0 L1136.1,963.9 L1129.0,961.7 L1121.8,959.2Z M1200.9,886.0 L1206.4,885.5 L1211.8,884.9 L1150.4,967.9 L1143.2,966.0 L1136.1,963.9Z M1211.8,884.9 L1217.1,884.1 L1222.2,883.1 L1164.6,970.9 L1157.5,969.5 L1150.4,967.9Z M1222.2,883.1 L1227.1,882.1 L1231.9,881.0 L1178.7,973.1 L1171.7,972.1 L1164.6,970.9Z M1231.9,881.0 L1236.6,879.8 L1241.1,878.4 L1192.8,974.4 L1185.8,973.9 L1178.7,973.1Z M1241.1,878.4 L1245.5,876.9 L1249.8,875.5 L1206.7,974.8 L1199.8,974.7 L1192.8,974.4Z M1249.8,875.5 L1253.9,873.9 L1257.9,872.3 L1220.4,974.3 L1213.6,974.7 L1206.7,974.8Z M1257.9,872.3 L1261.8,870.6 L1265.6,868.9 L1233.8,973.1 L1227.1,973.8 L1220.4,974.3Z M1265.6,868.9 L1269.2,867.1 L1272.8,865.3 L1247.0,970.9 L1240.4,972.1 L1233.8,973.1Z M1272.8,865.3 L1276.2,863.4 L1279.5,861.6 L1259.8,968.0 L1253.4,969.5 L1247.0,970.9Z M1279.5,861.6 L1282.7,859.6 L1285.8,857.7 L1271.3,964.1 L1265.7,966.2 L1259.8,968.0Z M1285.8,857.7 L1288.9,855.7 L1291.8,853.8 L1282.2,959.5 L1276.8,961.9 L1271.3,964.1Z M1291.8,853.8 L1294.7,851.8 L1297.4,849.8 L1292.6,954.4 L1287.4,957.0 L1282.2,959.5Z M1297.4,849.8 L1300.1,847.7 L1302.7,845.6 L1302.5,948.7 L1297.6,951.6 L1292.6,954.4Z M1302.7,845.6 L1305.3,843.5 L1307.7,841.3 L1311.5,942.3 L1307.2,945.6 L1302.5,948.7Z M1307.7,841.3 L1310.0,839.1 L1312.3,836.9 L1319.7,935.6 L1315.6,939.0 L1311.5,942.3Z M1312.3,836.9 L1314.5,834.6 L1316.6,832.3 L1327.5,928.6 L1323.7,932.1 L1319.7,935.6Z M1316.6,832.3 L1318.6,830.0 L1320.6,827.7 L1335.0,921.4 L1331.3,925.0 L1327.5,928.6Z M1320.6,827.7 L1322.5,825.3 L1324.2,822.9 L1342.2,914.2 L1338.7,917.8 L1335.0,921.4Z M1324.2,822.9 L1325.9,820.5 L1327.6,818.1 L1349.4,907.1 L1345.8,910.7 L1342.2,914.2Z M1327.6,818.1 L1329.1,815.6 L1330.5,813.1 L1356.6,900.4 L1353.0,903.8 L1349.4,907.1Z M1330.5,813.1 L1331.9,810.6 L1333.2,808.0 L1364.0,893.9 L1360.2,897.1 L1356.6,900.4Z M1333.2,808.0 L1334.4,805.5 L1335.5,802.9 L1371.9,888.0 L1367.8,890.8 L1364.0,893.9Z M1335.5,802.9 L1336.5,800.4 L1337.5,797.9 L1380.0,882.1 L1375.9,885.1 L1371.9,888.0Z M1337.5,797.9 L1338.4,795.3 L1339.2,792.8 L1387.9,876.0 L1384.0,879.1 L1380.0,882.1Z M1339.2,792.8 L1340.1,790.3 L1340.8,787.8 L1395.6,869.4 L1391.8,872.7 L1387.9,876.0Z M1340.8,787.8 L1341.6,785.4 L1342.2,783.0 L1402.9,862.4 L1399.3,865.9 L1395.6,869.4Z M1342.2,783.0 L1342.9,780.7 L1343.6,778.4 L1409.8,855.0 L1406.4,858.8 L1402.9,862.4Z M1343.6,778.4 L1344.3,776.1 L1345.1,773.9 L1416.4,847.3 L1413.2,851.2 L1409.8,855.0Z M1345.1,773.9 L1345.9,771.8 L1346.9,769.8 L1422.6,839.2 L1419.6,843.3 L1416.4,847.3Z M1346.9,769.8 L1348.0,767.8 L1349.0,765.9 L1428.4,830.8 L1425.6,835.0 L1422.6,839.2Z M919.0,668.8 L923.5,680.7 L928.3,692.3 L902.8,691.0 L900.0,680.3 L897.4,669.3Z M928.3,692.3 L933.4,703.7 L938.7,714.7 L909.3,711.9 L906.0,701.5 L902.8,691.0Z M938.7,714.7 L944.4,725.3 L950.3,735.7 L916.8,731.8 L912.9,722.0 L909.3,711.9Z M950.3,735.7 L956.5,745.7 L963.0,755.4 L925.2,752.7 L920.8,741.8 L916.8,731.8Z M963.0,755.4 L969.7,764.8 L976.5,773.8 L934.4,773.8 L929.7,763.4 L925.2,752.7Z M976.5,773.8 L983.5,782.5 L990.7,790.8 L944.4,793.9 L939.3,783.9 L934.4,773.8Z M990.7,790.8 L998.1,798.7 L1005.7,806.3 L955.2,813.0 L949.8,803.5 L944.4,793.9Z M1005.7,806.3 L1013.4,813.5 L1021.3,820.3 L966.8,831.1 L960.9,822.2 L955.2,813.0Z M1021.3,820.3 L1029.4,826.8 L1037.5,832.8 L979.0,848.2 L972.8,839.8 L966.8,831.1Z M1037.5,832.8 L1045.6,838.6 L1053.8,843.9 L991.7,864.4 L985.3,856.4 L979.0,848.2Z M1053.8,843.9 L1062.1,848.9 L1070.4,853.5 L1005.0,879.7 L998.3,872.2 L991.7,864.4Z M1070.4,853.5 L1078.7,857.8 L1087.0,861.8 L1018.8,893.9 L1011.8,886.9 L1005.0,879.7Z M1087.0,861.8 L1095.2,865.3 L1103.5,868.6 L1033.2,907.1 L1025.9,900.7 L1018.8,893.9Z M1103.5,868.6 L1111.6,871.6 L1119.8,874.2 L1048.2,919.3 L1040.5,913.4 L1033.2,907.1Z M1119.8,874.2 L1127.8,876.5 L1135.8,878.6 L1063.9,930.6 L1056.0,925.1 L1048.2,919.3Z M1135.8,878.6 L1143.2,880.3 L1150.2,881.8 L1078.1,939.0 L1071.1,935.0 L1063.9,930.6Z M1150.2,881.8 L1157.0,882.9 L1163.6,883.9 L1092.3,946.2 L1085.2,942.7 L1078.1,939.0Z M1163.6,883.9 L1170.0,884.6 L1176.3,885.0 L1106.5,952.7 L1099.4,949.5 L1092.3,946.2Z M1176.3,885.0 L1182.3,885.4 L1188.3,885.5 L1120.7,958.4 L1113.6,955.6 L1106.5,952.7Z M1188.3,885.5 L1194.1,885.5 L1199.8,885.2 L1135.0,963.2 L1127.8,960.9 L1120.7,958.4Z M1199.8,885.2 L1205.3,884.7 L1210.7,884.1 L1149.2,967.1 L1142.1,965.2 L1135.0,963.2Z M1210.7,884.1 L1215.9,883.3 L1221.0,882.4 L1163.4,970.3 L1156.3,968.8 L1149.2,967.1Z M1221.0,882.4 L1225.9,881.5 L1230.7,880.3 L1177.5,972.5 L1170.5,971.5 L1163.4,970.3Z M1230.7,880.3 L1235.4,879.1 L1239.9,877.8 L1191.5,973.9 L1184.5,973.3 L1177.5,972.5Z M1239.9,877.8 L1244.3,876.4 L1248.5,875.0 L1205.4,974.3 L1198.5,974.2 L1191.5,973.9Z M1248.5,875.0 L1252.6,873.4 L1256.6,871.9 L1219.1,974.0 L1212.3,974.3 L1205.4,974.3Z M1256.6,871.9 L1260.5,870.2 L1264.3,868.5 L1232.5,972.8 L1225.8,973.5 L1219.1,974.0Z M1264.3,868.5 L1267.9,866.8 L1271.4,865.0 L1245.6,970.7 L1239.1,971.8 L1232.5,972.8Z M1271.4,865.0 L1274.9,863.2 L1278.2,861.4 L1258.4,967.8 L1252.1,969.3 L1245.6,970.7Z M1278.2,861.4 L1281.4,859.5 L1284.6,857.6 L1270.0,964.0 L1264.4,966.0 L1258.4,967.8Z M1284.6,857.6 L1287.6,855.6 L1290.6,853.7 L1280.8,959.5 L1275.4,961.9 L1270.0,964.0Z M1290.6,853.7 L1293.5,851.8 L1296.3,849.8 L1291.2,954.4 L1286.1,957.0 L1280.8,959.5Z M1296.3,849.8 L1299.0,847.8 L1301.6,845.7 L1301.1,948.8 L1296.2,951.7 L1291.2,954.4Z M1301.6,845.7 L1304.1,843.6 L1306.6,841.5 L1310.1,942.5 L1305.8,945.7 L1301.1,948.8Z M1306.6,841.5 L1308.9,839.3 L1311.2,837.1 L1318.4,935.9 L1314.3,939.2 L1310.1,942.5Z M1311.2,837.1 L1313.5,834.9 L1315.6,832.6 L1326.2,928.9 L1322.3,932.4 L1318.4,935.9Z M1315.6,832.6 L1317.6,830.3 L1319.6,828.0 L1333.7,921.8 L1330.0,925.4 L1326.2,928.9Z M1319.6,828.0 L1321.5,825.6 L1323.3,823.3 L1340.9,914.7 L1337.4,918.3 L1333.7,921.8Z M1323.3,823.3 L1325.0,820.9 L1326.7,818.5 L1348.1,907.7 L1344.6,911.2 L1340.9,914.7Z M1326.7,818.5 L1328.2,816.0 L1329.7,813.5 L1355.3,901.0 L1351.7,904.4 L1348.1,907.7Z M1329.7,813.5 L1331.1,811.0 L1332.3,808.5 L1362.8,894.6 L1359.0,897.8 L1355.3,901.0Z M1332.3,808.5 L1333.6,806.0 L1334.7,803.4 L1370.7,888.7 L1366.6,891.6 L1362.8,894.6Z M1334.7,803.4 L1335.8,800.9 L1336.8,798.4 L1378.9,883.0 L1374.8,885.8 L1370.7,888.7Z M1336.8,798.4 L1337.7,795.8 L1338.6,793.4 L1386.9,876.8 L1382.9,880.0 L1378.9,883.0Z M1338.6,793.4 L1339.4,790.9 L1340.2,788.4 L1394.5,870.3 L1390.7,873.6 L1386.9,876.8Z M1340.2,788.4 L1340.9,786.0 L1341.6,783.6 L1401.9,863.4 L1398.3,866.9 L1394.5,870.3Z M1341.6,783.6 L1342.4,781.3 L1343.1,779.0 L1408.9,856.1 L1405.4,859.8 L1401.9,863.4Z M1343.1,779.0 L1343.8,776.7 L1344.6,774.6 L1415.5,848.4 L1412.3,852.3 L1408.9,856.1Z M1344.6,774.6 L1345.4,772.4 L1346.4,770.4 L1421.8,840.3 L1418.7,844.4 L1415.5,848.4Z M1346.4,770.4 L1347.5,768.5 L1348.6,766.5 L1427.6,832.0 L1424.8,836.2 L1421.8,840.3Z M916.3,704.6 L894.7,705.1 L897.4,669.3 L919.0,668.8Z"/><path id="bf4" d="M1104.5,1082.4 L1117.0,1083.5 L1129.4,1084.1 L1105.3,1085.7 L1094.7,1084.1 L1084.2,1082.2Z M1129.4,1084.1 L1141.7,1084.3 L1153.9,1084.1 L1126.1,1087.8 L1115.7,1086.9 L1105.3,1085.7Z M1153.9,1084.1 L1165.9,1083.5 L1177.8,1082.4 L1146.7,1088.6 L1136.4,1088.3 L1126.1,1087.8Z M1177.8,1082.4 L1189.3,1080.8 L1199.5,1078.4 L1166.8,1088.1 L1156.8,1088.5 L1146.7,1088.6Z M1199.5,1078.4 L1209.5,1075.7 L1219.3,1072.7 L1186.3,1086.6 L1176.7,1087.5 L1166.8,1088.1Z M1219.3,1072.7 L1228.9,1069.5 L1238.2,1066.0 L1205.2,1084.1 L1195.9,1085.4 L1186.3,1086.6Z M1238.2,1066.0 L1247.2,1062.2 L1256.1,1058.1 L1223.6,1080.6 L1214.5,1082.4 L1205.2,1084.1Z M1256.1,1058.1 L1264.7,1053.7 L1273.0,1049.1 L1241.4,1076.4 L1232.6,1078.6 L1223.6,1080.6Z M1273.0,1049.1 L1281.0,1044.2 L1288.8,1039.2 L1258.6,1071.4 L1250.1,1073.9 L1241.4,1076.4Z M1288.8,1039.2 L1296.2,1034.0 L1303.4,1028.7 L1275.3,1065.7 L1267.0,1068.6 L1258.6,1071.4Z M1303.4,1028.7 L1310.3,1023.2 L1316.9,1017.5 L1291.4,1059.6 L1283.4,1062.7 L1275.3,1065.7Z M1316.9,1017.5 L1323.2,1011.7 L1329.2,1005.9 L1306.9,1052.7 L1299.2,1056.2 L1291.4,1059.6Z M1329.2,1005.9 L1334.9,999.9 L1340.3,993.9 L1321.8,1045.3 L1314.5,1049.1 L1306.9,1052.7Z M1340.3,993.9 L1345.4,987.9 L1350.3,981.8 L1336.4,1037.3 L1329.1,1041.3 L1321.8,1045.3Z M1350.3,981.8 L1354.8,975.8 L1359.1,969.7 L1350.7,1028.9 L1343.6,1033.2 L1336.4,1037.3Z M1359.1,969.7 L1363.8,963.4 L1368.2,957.0 L1364.4,1020.0 L1357.6,1024.5 L1350.7,1028.9Z M1368.2,957.0 L1372.2,950.6 L1375.9,944.2 L1377.4,1010.6 L1371.0,1015.3 L1364.4,1020.0Z M1375.9,944.2 L1379.2,937.7 L1382.3,931.3 L1389.8,1000.7 L1383.7,1005.7 L1377.4,1010.6Z M1382.3,931.3 L1385.3,925.0 L1387.9,918.7 L1401.5,990.4 L1395.7,995.6 L1389.8,1000.7Z M1387.9,918.7 L1390.3,912.4 L1392.5,906.2 L1412.6,979.7 L1407.1,985.1 L1401.5,990.4Z M1392.5,906.2 L1394.4,899.9 L1396.2,893.8 L1422.9,968.6 L1417.8,974.2 L1412.6,979.7Z M1396.2,893.8 L1397.8,887.7 L1399.1,881.7 L1432.5,957.1 L1427.8,962.9 L1422.9,968.6Z M1399.1,881.7 L1400.4,875.8 L1401.5,870.0 L1441.4,945.2 L1437.1,951.2 L1432.5,957.1Z M1401.5,870.0 L1402.4,864.3 L1403.2,858.7 L1449.5,933.0 L1445.6,939.1 L1441.4,945.2Z M1403.2,858.7 L1403.8,853.1 L1404.5,847.8 L1456.8,920.4 L1453.3,926.7 L1449.5,933.0Z M1404.5,847.8 L1404.9,842.4 L1405.2,837.3 L1463.3,907.6 L1460.1,914.1 L1456.8,920.4Z M1405.2,837.3 L1405.5,832.2 L1405.6,827.1 L1469.0,894.7 L1466.2,901.2 L1463.3,907.6Z M1405.6,827.1 L1405.7,822.3 L1405.6,817.4 L1473.8,881.5 L1471.5,888.1 L1469.0,894.7Z M1405.6,817.4 L1405.5,812.8 L1405.4,808.2 L1477.7,868.3 L1475.8,874.9 L1473.8,881.5Z M1405.4,808.2 L1405.1,803.7 L1404.9,799.3 L1480.0,854.9 L1479.1,861.6 L1477.7,868.3Z M1404.9,799.3 L1404.5,795.0 L1404.1,790.8 L1481.3,841.5 L1480.7,848.2 L1480.0,854.9Z M1404.1,790.8 L1403.7,786.7 L1403.2,782.6 L1481.8,828.3 L1481.6,834.9 L1481.3,841.5Z M1403.2,782.6 L1402.7,778.7 L1402.0,774.8 L1481.6,815.2 L1481.8,821.7 L1481.8,828.3Z M1402.0,774.8 L1401.3,770.9 L1400.6,767.1 L1480.3,802.3 L1481.2,808.7 L1481.6,815.2Z M1400.6,767.1 L1399.7,763.4 L1398.8,759.8 L1478.2,789.6 L1479.3,795.9 L1480.3,802.3Z M1398.8,759.8 L1397.9,756.3 L1396.9,752.8 L1475.7,777.2 L1477.0,783.4 L1478.2,789.6Z M1396.9,752.8 L1395.8,749.3 L1394.7,746.0 L1472.9,765.2 L1474.3,771.2 L1475.7,777.2Z M1394.7,746.0 L1393.5,742.7 L1392.2,739.5 L1470.0,753.6 L1471.5,759.4 L1472.9,765.2Z M1392.2,739.5 L1390.9,736.3 L1389.6,733.2 L1467.4,742.4 L1468.7,748.0 L1470.0,753.6Z M1389.6,733.2 L1388.1,730.2 L1386.6,727.2 L1465.0,731.5 L1466.2,736.9 L1467.4,742.4Z M1386.6,727.2 L1385.1,724.4 L1383.4,721.6 L1463.2,720.8 L1464.1,726.1 L1465.0,731.5Z M1383.4,721.6 L1381.8,718.8 L1380.1,716.2 L1462.2,710.4 L1462.5,715.6 L1463.2,720.8Z M1380.1,716.2 L1378.3,713.6 L1376.6,711.1 L1461.5,700.0 L1461.8,705.2 L1462.2,710.4Z M1376.6,711.1 L1374.8,708.6 L1373.0,706.2 L1460.4,689.6 L1461.0,694.8 L1461.5,700.0Z M1373.0,706.2 L1371.2,703.9 L1369.4,701.7 L1458.9,679.4 L1459.7,684.5 L1460.4,689.6Z M1369.4,701.7 L1367.7,699.5 L1365.9,697.4 L1456.8,669.2 L1457.9,674.3 L1458.9,679.4Z M1365.9,697.4 L1364.2,695.3 L1362.6,693.3 L1454.3,659.2 L1455.6,664.2 L1456.8,669.2Z M1362.6,693.3 L1360.9,691.3 L1359.5,689.3 L1451.2,649.3 L1452.8,654.2 L1454.3,659.2Z M1359.5,689.3 L1358.1,687.3 L1356.9,685.4 L1447.7,639.6 L1449.5,644.4 L1451.2,649.3Z M1356.9,685.4 L1355.8,683.3 L1354.7,681.3 L1443.7,630.0 L1445.8,634.8 L1447.7,639.6Z M1076.5,1061.9 L1088.5,1063.8 L1100.5,1065.3 L1076.3,1066.8 L1066.3,1064.5 L1056.2,1061.8Z M1100.5,1065.3 L1112.3,1066.4 L1124.0,1067.0 L1096.3,1070.5 L1086.4,1068.8 L1076.3,1066.8Z M1124.0,1067.0 L1135.6,1067.2 L1147.1,1067.0 L1116.1,1072.9 L1106.2,1071.9 L1096.3,1070.5Z M1147.1,1067.0 L1158.5,1066.4 L1169.6,1065.4 L1137.1,1074.9 L1126.1,1073.8 L1116.1,1072.9Z M1169.6,1065.4 L1180.7,1064.0 L1191.5,1062.3 L1158.6,1076.1 L1147.9,1075.6 L1137.1,1074.9Z M1191.5,1062.3 L1202.1,1060.3 L1212.6,1057.9 L1179.6,1076.0 L1169.1,1076.2 L1158.6,1076.1Z M1212.6,1057.9 L1222.8,1055.2 L1232.8,1052.1 L1200.3,1074.7 L1190.0,1075.5 L1179.6,1076.0Z M1232.8,1052.1 L1242.6,1048.7 L1252.2,1044.9 L1220.6,1072.4 L1210.5,1073.7 L1200.3,1074.7Z M1252.2,1044.9 L1261.5,1040.8 L1270.6,1036.5 L1240.4,1068.9 L1230.6,1070.8 L1220.6,1072.4Z M1270.6,1036.5 L1279.4,1032.0 L1287.9,1027.2 L1259.7,1064.5 L1250.1,1066.8 L1240.4,1068.9Z M1287.9,1027.2 L1296.1,1022.2 L1304.1,1016.9 L1278.6,1059.4 L1269.2,1062.1 L1259.7,1064.5Z M1304.1,1016.9 L1311.8,1011.5 L1319.2,1005.9 L1296.9,1053.1 L1287.8,1056.4 L1278.6,1059.4Z M1319.2,1005.9 L1326.3,1000.2 L1333.1,994.3 L1314.7,1046.0 L1305.9,1049.7 L1296.9,1053.1Z M1333.1,994.3 L1339.6,988.4 L1345.9,982.3 L1332.0,1038.0 L1323.3,1042.1 L1314.7,1046.0Z M1345.9,982.3 L1351.8,976.2 L1357.5,969.9 L1349.1,1029.2 L1340.6,1033.7 L1332.0,1038.0Z M1357.5,969.9 L1362.5,963.6 L1366.9,957.3 L1363.1,1020.4 L1356.3,1024.8 L1349.1,1029.2Z M1366.9,957.3 L1370.8,950.9 L1374.5,944.5 L1376.1,1011.0 L1369.7,1015.8 L1363.1,1020.4Z M1374.5,944.5 L1377.9,938.1 L1381.0,931.7 L1388.5,1001.2 L1382.4,1006.1 L1376.1,1011.0Z M1381.0,931.7 L1384.0,925.5 L1386.6,919.2 L1400.3,991.0 L1394.5,996.2 L1388.5,1001.2Z M1386.6,919.2 L1389.1,913.0 L1391.3,906.8 L1411.4,980.4 L1405.9,985.7 L1400.3,991.0Z M1391.3,906.8 L1393.2,900.5 L1395.0,894.5 L1421.7,969.3 L1416.6,974.9 L1411.4,980.4Z M1395.0,894.5 L1396.6,888.4 L1398.0,882.4 L1431.4,957.9 L1426.7,963.6 L1421.7,969.3Z M1398.0,882.4 L1399.3,876.6 L1400.3,870.8 L1440.3,946.0 L1436.0,952.0 L1431.4,957.9Z M1400.3,870.8 L1401.3,865.1 L1402.1,859.5 L1448.5,933.9 L1444.5,940.0 L1440.3,946.0Z M1402.1,859.5 L1402.8,854.0 L1403.4,848.7 L1455.8,921.4 L1452.2,927.7 L1448.5,933.9Z M1403.4,848.7 L1403.8,843.4 L1404.2,838.2 L1462.3,908.6 L1459.1,915.0 L1455.8,921.4Z M1404.2,838.2 L1404.5,833.2 L1404.6,828.1 L1468.0,895.7 L1465.3,902.2 L1462.3,908.6Z M1404.6,828.1 L1404.8,823.3 L1404.7,818.5 L1472.9,882.6 L1470.6,889.2 L1468.0,895.7Z M1404.7,818.5 L1404.7,813.8 L1404.6,809.3 L1476.9,869.4 L1475.0,876.0 L1472.9,882.6Z M1404.6,809.3 L1404.4,804.8 L1404.2,800.4 L1479.3,856.1 L1478.4,862.8 L1476.9,869.4Z M1404.2,800.4 L1403.8,796.1 L1403.5,791.9 L1480.6,842.8 L1480.0,849.4 L1479.3,856.1Z M1403.5,791.9 L1403.1,787.8 L1402.7,783.7 L1481.1,829.6 L1480.9,836.1 L1480.6,842.8Z M1402.7,783.7 L1402.1,779.8 L1401.5,775.8 L1481.0,816.5 L1481.2,823.0 L1481.1,829.6Z M1401.5,775.8 L1400.8,772.0 L1400.1,768.2 L1479.8,803.6 L1480.6,810.1 L1481.0,816.5Z M1400.1,768.2 L1399.3,764.5 L1398.5,760.9 L1477.7,791.0 L1478.8,797.2 L1479.8,803.6Z M1398.5,760.9 L1397.5,757.3 L1396.5,753.8 L1475.3,778.6 L1476.6,784.8 L1477.7,791.0Z M1396.5,753.8 L1395.5,750.4 L1394.4,747.0 L1472.6,766.6 L1474.0,772.6 L1475.3,778.6Z M1394.4,747.0 L1393.3,743.7 L1392.1,740.5 L1469.8,755.0 L1471.2,760.8 L1472.6,766.6Z M1392.1,740.5 L1390.8,737.3 L1389.4,734.2 L1467.2,743.8 L1468.5,749.4 L1469.8,755.0Z M1389.4,734.2 L1388.0,731.2 L1386.5,728.2 L1464.9,732.9 L1466.1,738.3 L1467.2,743.8Z M1386.5,728.2 L1385.0,725.4 L1383.4,722.5 L1463.2,722.3 L1464.0,727.6 L1464.9,732.9Z M1383.4,722.5 L1381.8,719.8 L1380.1,717.1 L1462.3,711.8 L1462.5,717.0 L1463.2,722.3Z M1380.1,717.1 L1378.4,714.5 L1376.6,712.0 L1461.6,701.4 L1461.9,706.6 L1462.3,711.8Z M1376.6,712.0 L1374.9,709.5 L1373.1,707.1 L1460.6,691.1 L1461.2,696.2 L1461.6,701.4Z M1373.1,707.1 L1371.4,704.8 L1369.6,702.5 L1459.1,680.8 L1459.9,685.9 L1460.6,691.1Z M1369.6,702.5 L1367.9,700.3 L1366.1,698.2 L1457.1,670.6 L1458.2,675.7 L1459.1,680.8Z M1366.1,698.2 L1364.4,696.1 L1362.8,694.1 L1454.7,660.5 L1456.0,665.6 L1457.1,670.6Z M1362.8,694.1 L1361.2,692.1 L1359.8,690.1 L1451.7,650.6 L1453.2,655.6 L1454.7,660.5Z M1359.8,690.1 L1358.3,688.1 L1357.2,686.1 L1448.2,640.9 L1450.0,645.7 L1451.7,650.6Z M1357.2,686.1 L1356.1,684.1 L1355.1,682.1 L1444.3,631.3 L1446.3,636.1 L1448.2,640.9Z M1104.5,1082.4 L1084.2,1082.2 L1056.2,1061.8 L1076.5,1061.9Z"/><path id="bf5" d="M1488.0,1099.6 L1494.7,1090.5 L1501.1,1081.3 L1522.2,1079.5 L1515.4,1090.5 L1508.2,1101.3Z M1501.1,1081.3 L1507.2,1071.9 L1513.0,1062.5 L1534.6,1057.2 L1528.6,1068.4 L1522.2,1079.5Z M1513.0,1062.5 L1518.5,1052.9 L1523.7,1043.3 L1545.3,1034.6 L1540.1,1046.0 L1534.6,1057.2Z M1523.7,1043.3 L1528.5,1033.6 L1533.1,1023.8 L1552.9,1012.8 L1549.7,1023.3 L1545.3,1034.6Z M1533.1,1023.8 L1537.3,1014.1 L1541.3,1004.3 L1558.3,991.9 L1555.8,1002.3 L1552.9,1012.8Z M1541.3,1004.3 L1544.9,994.5 L1548.3,984.8 L1562.3,971.4 L1560.4,981.6 L1558.3,991.9Z M1548.3,984.8 L1551.4,975.0 L1554.4,965.3 L1564.8,951.1 L1563.8,961.2 L1562.3,971.4Z M1554.4,965.3 L1557.0,955.6 L1559.5,946.0 L1566.0,931.2 L1565.6,941.1 L1564.8,951.1Z M1559.5,946.0 L1561.7,936.4 L1563.7,926.8 L1565.8,911.8 L1566.1,921.4 L1566.0,931.2Z M1565.8,911.8 L1565.4,902.4 L1564.6,893.2 L1567.1,908.0 L1565.5,917.4 L1563.7,926.8Z M1564.6,893.2 L1563.6,884.1 L1562.3,875.2 L1569.9,889.4 L1568.6,898.7 L1567.1,908.0Z M1562.3,875.2 L1560.7,866.6 L1558.9,858.2 L1571.8,871.1 L1570.9,880.2 L1569.9,889.4Z M1558.9,858.2 L1556.9,850.0 L1554.8,842.0 L1572.9,853.0 L1572.4,862.0 L1571.8,871.1Z M1554.8,842.0 L1552.4,834.3 L1549.9,826.8 L1573.5,835.2 L1573.2,844.1 L1572.9,853.0Z M1549.9,826.8 L1547.2,819.6 L1544.4,812.7 L1573.8,817.9 L1573.7,826.5 L1573.5,835.2Z M1544.4,812.7 L1541.4,804.8 L1538.1,796.9 L1573.4,800.8 L1573.7,809.3 L1573.8,817.9Z M1538.1,796.9 L1534.4,789.2 L1530.6,781.8 L1572.2,784.1 L1572.9,792.4 L1573.4,800.8Z M1530.6,781.8 L1526.7,774.6 L1522.5,767.6 L1570.3,767.8 L1571.3,775.9 L1572.2,784.1Z M1522.5,767.6 L1518.5,760.9 L1514.2,754.4 L1567.8,751.8 L1569.2,759.8 L1570.3,767.8Z M1514.2,754.4 L1509.8,748.1 L1505.4,742.1 L1564.6,736.3 L1566.3,744.0 L1567.8,751.8Z M1505.4,742.1 L1500.8,736.2 L1496.3,730.6 L1560.6,721.2 L1562.7,728.7 L1564.6,736.3Z M1496.3,730.6 L1491.6,725.2 L1487.0,720.1 L1556.0,706.5 L1558.4,713.8 L1560.6,721.2Z M1487.0,720.1 L1482.5,715.1 L1477.8,710.3 L1550.7,692.3 L1553.5,699.4 L1556.0,706.5Z M1477.8,710.3 L1473.3,705.8 L1468.6,701.4 L1544.8,678.7 L1547.8,685.5 L1550.7,692.3Z M1468.6,701.4 L1464.0,697.2 L1459.6,693.2 L1538.1,665.7 L1541.5,672.1 L1544.8,678.7Z M1459.6,693.2 L1455.0,689.4 L1450.7,685.7 L1530.9,653.2 L1534.6,659.4 L1538.1,665.7Z M1450.7,685.7 L1446.3,682.2 L1441.9,678.8 L1523.1,641.4 L1527.1,647.2 L1530.9,653.2Z M1441.9,678.8 L1437.6,675.6 L1433.3,672.6 L1514.7,630.3 L1519.0,635.8 L1523.1,641.4Z M1433.3,672.6 L1429.2,669.7 L1425.1,666.9 L1505.8,619.9 L1510.3,625.0 L1514.7,630.3Z M1425.1,666.9 L1421.0,664.2 L1417.0,661.7 L1495.7,610.2 L1501.0,615.0 L1505.8,619.9Z M1417.0,661.7 L1413.0,659.3 L1409.1,657.0 L1484.8,601.1 L1490.3,605.6 L1495.7,610.2Z M1409.1,657.0 L1405.3,654.8 L1401.5,652.7 L1473.8,592.8 L1479.3,596.9 L1484.8,601.1Z M1401.5,652.7 L1397.8,650.7 L1394.0,648.8 L1462.5,585.2 L1468.2,588.9 L1473.8,592.8Z M1394.0,648.8 L1390.3,647.1 L1386.6,645.4 L1450.6,578.3 L1456.7,581.7 L1462.5,585.2Z M1386.6,645.4 L1382.9,643.9 L1379.3,642.4 L1438.4,572.1 L1444.5,575.1 L1450.6,578.3Z M1379.3,642.4 L1375.7,641.0 L1372.1,639.8 L1426.4,566.4 L1432.4,569.2 L1438.4,572.1Z M1372.1,639.8 L1368.6,638.6 L1365.1,637.5 L1414.5,561.3 L1420.4,563.8 L1426.4,566.4Z M1365.1,637.5 L1361.6,636.5 L1358.1,635.6 L1402.9,556.7 L1408.7,558.9 L1414.5,561.3Z M1358.1,635.6 L1354.7,634.9 L1351.3,634.2 L1391.9,552.2 L1397.4,554.4 L1402.9,556.7Z M1351.3,634.2 L1347.9,633.6 L1344.6,633.1 L1381.4,547.9 L1386.6,550.0 L1391.9,552.2Z M1344.6,633.1 L1341.3,632.7 L1338.0,632.3 L1371.5,543.5 L1376.4,545.7 L1381.4,547.9Z M1338.0,632.3 L1334.7,632.1 L1331.5,631.9 L1362.3,538.9 L1366.8,541.3 L1371.5,543.5Z M1331.5,631.9 L1328.3,631.9 L1325.2,631.8 L1353.4,534.3 L1357.9,536.6 L1362.3,538.9Z M1325.2,631.8 L1322.2,631.9 L1319.2,632.0 L1344.4,530.0 L1349.0,532.1 L1353.4,534.3Z M1319.2,632.0 L1316.2,632.1 L1313.3,632.3 L1335.3,526.2 L1339.9,528.1 L1344.4,530.0Z M1313.3,632.3 L1310.5,632.5 L1307.8,632.8 L1325.9,523.0 L1330.6,524.6 L1335.3,526.2Z M1307.8,632.8 L1305.1,633.0 L1302.5,633.2 L1316.4,520.2 L1321.1,521.5 L1325.9,523.0Z M1302.5,633.2 L1299.9,633.5 L1297.5,633.6 L1306.7,518.0 L1311.6,519.1 L1316.4,520.2Z M1297.5,633.6 L1295.1,633.8 L1292.8,633.8 L1297.0,516.3 L1301.9,517.1 L1306.7,518.0Z M1292.8,633.8 L1290.6,633.7 L1288.4,633.7 L1287.2,515.1 L1292.1,515.7 L1297.0,516.3Z M1457.2,1114.8 L1464.3,1106.6 L1471.1,1098.1 L1492.2,1096.4 L1485.0,1106.5 L1477.4,1116.4Z M1471.1,1098.1 L1477.6,1089.6 L1483.8,1080.9 L1505.5,1075.8 L1499.0,1086.1 L1492.2,1096.4Z M1483.8,1080.9 L1489.8,1072.1 L1495.4,1063.2 L1517.2,1054.8 L1511.5,1065.3 L1505.5,1075.8Z M1495.4,1063.2 L1501.0,1054.1 L1507.2,1044.2 L1527.2,1033.4 L1522.4,1044.1 L1517.2,1054.8Z M1507.2,1044.2 L1513.1,1034.3 L1518.7,1024.3 L1535.7,1012.0 L1531.7,1022.7 L1527.2,1033.4Z M1518.7,1024.3 L1523.9,1014.2 L1528.8,1004.0 L1542.7,990.6 L1539.4,1001.3 L1535.7,1012.0Z M1528.8,1004.0 L1533.4,993.8 L1537.8,983.5 L1548.2,969.2 L1545.7,979.9 L1542.7,990.6Z M1537.8,983.5 L1541.9,973.2 L1545.7,962.9 L1552.1,947.9 L1550.3,958.6 L1548.2,969.2Z M1545.7,962.9 L1549.2,952.6 L1552.5,942.2 L1554.4,927.0 L1553.4,937.4 L1552.1,947.9Z M1554.4,927.0 L1555.2,916.7 L1555.6,906.5 L1558.3,921.5 L1555.5,931.9 L1552.5,942.2Z M1555.6,906.5 L1555.6,896.5 L1555.3,886.6 L1563.2,901.0 L1560.9,911.3 L1558.3,921.5Z M1555.3,886.6 L1554.8,876.9 L1553.9,867.3 L1567.0,880.4 L1565.3,890.7 L1563.2,901.0Z M1553.9,867.3 L1552.8,858.0 L1551.5,848.8 L1569.8,859.9 L1568.6,870.1 L1567.0,880.4Z M1551.5,848.8 L1549.9,839.9 L1548.0,831.1 L1571.9,839.6 L1570.9,849.7 L1569.8,859.9Z M1548.0,831.1 L1546.0,822.6 L1543.8,814.3 L1573.3,819.5 L1572.7,829.5 L1571.9,839.6Z M1543.8,814.3 L1541.0,806.2 L1537.7,798.3 L1573.0,802.2 L1573.3,810.7 L1573.3,819.5Z M1537.7,798.3 L1534.0,790.6 L1530.3,783.2 L1571.9,785.5 L1572.6,793.8 L1573.0,802.2Z M1530.3,783.2 L1526.3,776.0 L1522.2,769.0 L1570.1,769.2 L1571.1,777.3 L1571.9,785.5Z M1522.2,769.0 L1518.2,762.3 L1514.0,755.8 L1567.6,753.3 L1569.0,761.2 L1570.1,769.2Z M1514.0,755.8 L1509.7,749.5 L1505.3,743.5 L1564.5,737.7 L1566.1,745.4 L1567.6,753.3Z M1505.3,743.5 L1500.7,737.7 L1496.2,732.1 L1560.6,722.6 L1562.6,730.1 L1564.5,737.7Z M1496.2,732.1 L1491.6,726.7 L1487.0,721.5 L1556.1,707.9 L1558.4,715.2 L1560.6,722.6Z M1487.0,721.5 L1482.5,716.5 L1477.9,711.8 L1550.9,693.8 L1553.6,700.8 L1556.1,707.9Z M1477.9,711.8 L1473.4,707.2 L1468.8,702.8 L1545.0,680.1 L1548.0,686.9 L1550.9,693.8Z M1468.8,702.8 L1464.2,698.6 L1459.8,694.6 L1538.4,667.1 L1541.8,673.5 L1545.0,680.1Z M1459.8,694.6 L1455.3,690.8 L1450.9,687.1 L1531.2,654.6 L1534.9,660.8 L1538.4,667.1Z M1450.9,687.1 L1446.6,683.6 L1442.2,680.2 L1523.5,642.8 L1527.4,648.6 L1531.2,654.6Z M1442.2,680.2 L1438.0,677.0 L1433.8,673.9 L1515.2,631.7 L1519.4,637.1 L1523.5,642.8Z M1433.8,673.9 L1429.6,671.0 L1425.6,668.2 L1506.4,621.3 L1510.8,626.4 L1515.2,631.7Z M1425.6,668.2 L1421.5,665.5 L1417.5,662.9 L1496.3,611.5 L1501.5,616.3 L1506.4,621.3Z M1417.5,662.9 L1413.6,660.5 L1409.7,658.1 L1485.5,602.4 L1490.9,606.8 L1496.3,611.5Z M1409.7,658.1 L1405.9,655.9 L1402.1,653.8 L1474.5,594.0 L1480.0,598.1 L1485.5,602.4Z M1402.1,653.8 L1398.4,651.7 L1394.6,649.8 L1463.3,586.4 L1468.9,590.1 L1474.5,594.0Z M1394.6,649.8 L1390.9,648.0 L1387.3,646.3 L1451.5,579.5 L1457.5,582.9 L1463.3,586.4Z M1387.3,646.3 L1383.6,644.8 L1380.0,643.3 L1439.3,573.2 L1445.4,576.2 L1451.5,579.5Z M1380.0,643.3 L1376.4,641.9 L1372.8,640.6 L1427.3,567.5 L1433.3,570.2 L1439.3,573.2Z M1372.8,640.6 L1369.3,639.4 L1365.8,638.3 L1415.5,562.3 L1421.4,564.8 L1427.3,567.5Z M1365.8,638.3 L1362.3,637.3 L1358.9,636.3 L1403.9,557.6 L1409.7,559.9 L1415.5,562.3Z M1358.9,636.3 L1355.5,635.5 L1352.1,634.8 L1393.0,553.1 L1398.5,555.3 L1403.9,557.6Z M1352.1,634.8 L1348.7,634.2 L1345.4,633.6 L1382.5,548.7 L1387.7,550.8 L1393.0,553.1Z M1345.4,633.6 L1342.0,633.2 L1338.7,632.9 L1372.7,544.3 L1377.5,546.5 L1382.5,548.7Z M1338.7,632.9 L1335.5,632.6 L1332.3,632.4 L1363.5,539.6 L1368.0,542.0 L1372.7,544.3Z M1332.3,632.4 L1329.1,632.3 L1326.0,632.2 L1354.7,534.9 L1359.1,537.2 L1363.5,539.6Z M1326.0,632.2 L1322.9,632.3 L1320.0,632.3 L1345.7,530.6 L1350.2,532.7 L1354.7,534.9Z M1320.0,632.3 L1317.0,632.5 L1314.1,632.6 L1336.5,526.7 L1341.1,528.6 L1345.7,530.6Z M1314.1,632.6 L1311.3,632.8 L1308.5,633.0 L1327.2,523.4 L1331.9,525.0 L1336.5,526.7Z M1308.5,633.0 L1305.9,633.2 L1303.3,633.5 L1317.7,520.6 L1322.5,521.9 L1327.2,523.4Z M1303.3,633.5 L1300.7,633.7 L1298.3,633.8 L1308.1,518.3 L1312.9,519.4 L1317.7,520.6Z M1298.3,633.8 L1295.9,633.9 L1293.6,633.9 L1298.3,516.5 L1303.2,517.3 L1308.1,518.3Z M1293.6,633.9 L1291.4,633.8 L1289.2,633.7 L1288.6,515.3 L1293.5,515.8 L1298.3,516.5Z M1477.4,1116.4 L1457.2,1114.8 L1488.0,1099.6 L1508.2,1101.3Z"/></defs>
<g clip-path="url(#cSh)" fill="#476a8b" fill-opacity="0.62"><use href="#bf0"/><use href="#bf1"/><use href="#bf2"/><use href="#bf3"/><use href="#bf4"/><use href="#bf5"/></g>
<defs><radialGradient id="gDark" gradientUnits="userSpaceOnUse" cx="1311" cy="721" r="428" gradientTransform="translate(1311 0) scale(0.9486 1) translate(-1311 0)"><stop offset="0.70" stop-color="#2c3e52" stop-opacity="0"/><stop offset="0.86" stop-color="#2c3e52" stop-opacity="0.22"/><stop offset="1" stop-color="#2c3e52" stop-opacity="0.36"/></radialGradient></defs>
<path d="M1706.3,734.9 L1701.9,723.8 L1697.2,712.9 L1716.6,713.8 L1722.3,725.5 L1727.7,737.4Z M1697.2,712.9 L1692.3,702.3 L1687.1,691.9 L1704.3,691.5 L1710.6,702.5 L1716.6,713.8Z M1687.1,691.9 L1681.8,681.7 L1676.2,671.7 L1690.8,670.6 L1697.7,680.9 L1704.3,691.5Z M1676.2,671.7 L1670.4,662.1 L1664.4,652.6 L1676.6,652.8 L1683.7,661.0 L1690.8,670.6Z M1664.4,652.6 L1658.2,643.4 L1651.9,634.5 L1662.0,637.6 L1669.4,645.0 L1676.6,652.8Z M1651.9,634.5 L1645.4,625.8 L1638.8,617.3 L1647.0,623.8 L1654.5,630.5 L1662.0,637.6Z M1647.0,623.8 L1639.4,617.5 L1631.5,611.5 L1625.3,601.2 L1632.0,609.2 L1638.8,617.3Z M1631.5,611.5 L1623.6,605.9 L1615.7,600.6 L1611.4,586.0 L1618.4,593.5 L1625.3,601.2Z M1615.7,600.6 L1607.6,595.7 L1599.6,591.2 L1597.3,571.8 L1604.4,578.8 L1611.4,586.0Z M1599.6,591.2 L1591.6,587.0 L1583.6,583.2 L1583.0,558.5 L1590.1,565.0 L1597.3,571.8Z M1583.6,583.2 L1575.6,579.7 L1567.7,576.5 L1568.7,546.0 L1575.9,552.1 L1583.0,558.5Z M1567.7,576.5 L1559.7,573.7 L1551.9,571.2 L1554.2,534.4 L1561.5,540.1 L1568.7,546.0Z M1551.9,571.2 L1544.2,569.0 L1536.5,567.0 L1539.5,523.8 L1546.9,529.0 L1554.2,534.4Z M1536.5,567.0 L1529.0,565.4 L1521.6,564.0 L1525.0,514.0 L1532.2,518.7 L1539.5,523.8Z M1521.6,564.0 L1514.3,562.9 L1507.2,562.1 L1510.7,505.1 L1517.9,509.4 L1525.0,514.0Z M1507.2,562.1 L1499.1,560.6 L1490.6,559.0 L1496.4,496.9 L1503.6,500.9 L1510.7,505.1Z M1490.6,559.0 L1482.0,557.8 L1473.6,556.7 L1482.0,489.7 L1489.2,493.2 L1496.4,496.9Z M1703.6,770.7 L1700.1,759.6 L1696.3,748.8 L1715.7,749.7 L1720.5,761.3 L1725.0,773.2Z M1696.3,748.8 L1692.3,738.1 L1688.0,727.7 L1705.3,727.3 L1710.6,738.3 L1715.7,749.7Z M1688.0,727.7 L1683.5,717.5 L1678.7,707.5 L1693.7,706.3 L1699.6,716.7 L1705.3,727.3Z M1678.7,707.5 L1673.8,697.4 L1668.5,686.4 L1681.0,686.6 L1687.5,696.3 L1693.7,706.3Z M1668.5,686.4 L1663.0,675.6 L1657.3,665.1 L1667.5,668.2 L1674.3,677.2 L1681.0,686.6Z M1657.3,665.1 L1651.3,654.8 L1645.1,644.7 L1653.3,651.2 L1660.5,659.5 L1667.5,668.2Z M1645.1,644.7 L1638.7,634.9 L1632.2,625.4 L1638.3,635.7 L1645.9,643.3 L1653.3,651.2Z M1638.3,635.7 L1630.6,628.5 L1622.7,621.7 L1618.6,607.0 L1625.4,616.1 L1632.2,625.4Z M1622.7,621.7 L1614.6,615.2 L1606.5,609.2 L1604.5,589.6 L1611.6,598.2 L1618.6,607.0Z M1606.5,609.2 L1598.4,603.4 L1590.2,598.1 L1589.9,573.2 L1597.2,581.3 L1604.5,589.6Z M1590.2,598.1 L1581.9,593.1 L1573.6,588.5 L1575.0,557.8 L1582.5,565.3 L1589.9,573.2Z M1573.6,588.5 L1565.3,584.2 L1557.0,580.2 L1559.6,543.3 L1567.4,550.4 L1575.0,557.8Z M1557.0,580.2 L1548.8,576.7 L1540.5,573.4 L1543.7,530.0 L1551.7,536.5 L1559.6,543.3Z M1540.5,573.4 L1532.4,570.4 L1524.2,567.8 L1527.8,517.6 L1535.7,523.6 L1543.7,530.0Z M1524.2,567.8 L1516.2,565.5 L1508.2,563.4 L1511.8,506.4 L1519.8,511.9 L1527.8,517.6Z M1508.2,563.4 L1500.0,561.7 L1491.5,560.1 L1497.4,498.0 L1504.5,501.9 L1511.8,506.4Z M1491.5,560.1 L1483.0,558.8 L1474.6,557.7 L1483.0,490.7 L1490.2,494.2 L1497.4,498.0Z M1725.0,773.2 L1703.6,770.7 L1706.3,734.9 L1727.7,737.4Z M1541.3,360.8 L1528.8,359.7 L1516.4,358.9 L1495.7,355.2 L1507.2,356.9 L1518.6,359.0Z M1516.4,358.9 L1504.1,358.7 L1491.9,358.8 L1473.0,352.7 L1484.3,353.8 L1495.7,355.2Z M1491.9,358.8 L1479.9,359.4 L1468.0,360.4 L1450.6,351.6 L1461.8,352.0 L1473.0,352.7Z M1468.0,360.4 L1456.5,361.9 L1446.3,364.3 L1428.7,351.7 L1439.6,351.5 L1450.6,351.6Z M1446.3,364.3 L1436.2,366.9 L1426.4,369.9 L1407.1,352.9 L1417.9,352.2 L1428.7,351.7Z M1426.4,369.9 L1416.8,373.0 L1407.5,376.5 L1386.0,355.0 L1396.5,353.8 L1407.1,352.9Z M1407.5,376.5 L1398.4,380.2 L1389.6,384.3 L1365.6,358.1 L1375.7,356.5 L1386.0,355.0Z M1389.6,384.3 L1381.0,388.6 L1372.7,393.2 L1345.7,362.0 L1355.6,360.0 L1365.6,358.1Z M1372.7,393.2 L1364.6,398.0 L1356.8,403.0 L1326.5,366.7 L1336.0,364.3 L1345.7,362.0Z M1356.8,403.0 L1349.3,408.1 L1342.1,413.4 L1308.0,372.0 L1317.2,369.3 L1326.5,366.7Z M1342.1,413.4 L1335.2,418.9 L1328.6,424.5 L1290.3,377.9 L1299.1,374.8 L1308.0,372.0Z M1328.6,424.5 L1322.3,430.3 L1316.2,436.1 L1273.1,384.5 L1281.6,381.1 L1290.3,377.9Z M1316.2,436.1 L1310.5,442.0 L1305.0,448.0 L1256.7,391.6 L1264.8,388.0 L1273.1,384.5Z M1305.0,448.0 L1299.9,454.0 L1295.0,460.1 L1241.1,399.4 L1248.7,395.4 L1256.7,391.6Z M1295.0,460.1 L1290.4,466.1 L1286.1,472.1 L1226.5,407.7 L1233.7,403.5 L1241.1,399.4Z M1286.1,472.1 L1280.6,478.4 L1274.6,484.6 L1212.6,416.5 L1219.5,412.1 L1226.5,407.7Z M1274.6,484.6 L1268.9,490.9 L1263.4,497.1 L1199.3,425.8 L1205.9,421.1 L1212.6,416.5Z M1546.5,379.5 L1535.5,376.7 L1524.5,374.2 L1545.2,377.9 L1557.2,379.5 L1569.2,381.4Z M1545.2,377.9 L1533.4,376.8 L1521.7,376.1 L1502.7,370.2 L1513.6,372.0 L1524.5,374.2Z M1521.7,376.1 L1510.1,375.8 L1498.6,376.0 L1481.1,367.4 L1491.9,368.6 L1502.7,370.2Z M1498.6,376.0 L1487.3,376.5 L1476.1,377.4 L1458.4,365.1 L1470.2,366.4 L1481.1,367.4Z M1476.1,377.4 L1465.0,378.7 L1454.2,380.4 L1434.8,363.6 L1446.6,364.2 L1458.4,365.1Z M1454.2,380.4 L1443.5,382.4 L1433.1,384.7 L1411.6,363.2 L1423.2,363.2 L1434.8,363.6Z M1433.1,384.7 L1422.9,387.3 L1412.8,390.4 L1388.8,364.1 L1400.1,363.6 L1411.6,363.2Z M1412.8,390.4 L1403.0,393.8 L1393.4,397.5 L1366.5,366.1 L1377.6,365.0 L1388.8,364.1Z M1393.4,397.5 L1384.1,401.5 L1375.0,405.8 L1344.8,369.2 L1355.6,367.6 L1366.5,366.1Z M1375.0,405.8 L1366.2,410.3 L1357.6,415.0 L1323.6,373.3 L1334.1,371.2 L1344.8,369.2Z M1357.6,415.0 L1349.4,420.0 L1341.4,425.2 L1303.1,378.1 L1313.2,375.6 L1323.6,373.3Z M1341.4,425.2 L1333.7,430.6 L1326.2,436.1 L1283.1,384.1 L1293.0,381.0 L1303.1,378.1Z M1326.2,436.1 L1319.1,441.8 L1312.3,447.6 L1263.9,391.0 L1273.4,387.4 L1283.1,384.1Z M1312.3,447.6 L1305.7,453.5 L1299.4,459.6 L1245.5,398.7 L1254.5,394.7 L1263.9,391.0Z M1299.4,459.6 L1293.4,465.7 L1287.7,471.9 L1228.2,407.4 L1236.7,402.9 L1245.5,398.7Z M1287.7,471.9 L1281.9,478.1 L1276.0,484.3 L1213.9,416.1 L1220.8,411.7 L1228.2,407.4Z M1276.0,484.3 L1270.2,490.6 L1264.7,496.8 L1200.6,425.4 L1207.2,420.7 L1213.9,416.1Z M1569.2,381.4 L1546.5,379.5 L1518.6,359.0 L1541.3,360.8Z M1133.9,341.7 L1126.7,352.6 L1120.0,363.6 L1096.2,359.6 L1103.5,350.4 L1111.1,341.4Z M1120.0,363.6 L1113.7,374.7 L1107.7,385.9 L1082.6,378.3 L1089.3,368.9 L1096.2,359.6Z M1107.7,385.9 L1102.3,397.3 L1097.2,408.7 L1070.2,397.3 L1076.3,387.7 L1082.6,378.3Z M1097.2,408.7 L1092.8,419.9 L1089.6,430.5 L1059.1,416.6 L1064.5,406.9 L1070.2,397.3Z M1089.6,430.5 L1086.8,441.0 L1084.4,451.4 L1048.9,435.9 L1053.9,426.3 L1059.1,416.6Z M1084.4,451.4 L1082.3,461.7 L1080.5,472.0 L1039.8,455.2 L1044.2,445.6 L1048.9,435.9Z M1080.5,472.0 L1079.1,482.1 L1078.0,492.3 L1031.8,474.5 L1035.7,464.9 L1039.8,455.2Z M1078.0,492.3 L1077.3,502.3 L1077.0,512.2 L1024.8,493.6 L1028.2,484.1 L1031.8,474.5Z M1077.0,512.2 L1076.9,522.0 L1077.2,531.6 L1018.7,512.5 L1021.6,503.1 L1024.8,493.6Z M1077.2,531.6 L1077.7,541.0 L1078.5,550.2 L1013.6,531.2 L1016.1,521.9 L1018.7,512.5Z M1078.5,550.2 L1079.6,559.2 L1081.0,568.1 L1009.3,549.6 L1011.3,540.4 L1013.6,531.2Z M1081.0,568.1 L1082.6,576.7 L1084.4,585.1 L1005.9,567.8 L1007.5,558.7 L1009.3,549.6Z M1084.4,585.1 L1086.4,593.3 L1088.6,601.3 L1003.4,585.7 L1004.5,576.7 L1005.9,567.8Z M1088.6,601.3 L1091.0,608.9 L1093.6,616.4 L1001.8,603.3 L1002.4,594.5 L1003.4,585.7Z M1093.6,616.4 L1096.3,623.6 L1099.1,630.6 L1001.4,620.6 L1001.5,612.0 L1001.8,603.3Z M1099.1,630.6 L1101.4,638.3 L1103.2,646.1 L1001.7,637.7 L1001.5,629.2 L1001.4,620.6Z M1103.2,646.1 L1105.2,653.7 L1107.2,661.0 L1002.8,654.3 L1002.1,646.0 L1001.7,637.7Z M1164.7,326.4 L1157.1,336.4 L1149.9,346.6 L1126.2,342.6 L1133.9,334.2 L1141.9,326.0Z M1149.9,346.6 L1143.1,356.9 L1136.8,367.3 L1111.7,359.7 L1118.8,351.1 L1126.2,342.6Z M1136.8,367.3 L1130.8,377.7 L1125.2,388.3 L1098.4,377.2 L1104.9,368.4 L1111.7,359.7Z M1125.2,388.3 L1120.0,399.0 L1115.2,409.7 L1084.8,396.0 L1091.9,386.3 L1098.4,377.2Z M1115.2,409.7 L1110.8,420.5 L1106.9,431.2 L1071.5,415.8 L1078.1,405.9 L1084.8,396.0Z M1106.9,431.2 L1103.2,441.9 L1099.9,452.6 L1059.2,435.9 L1065.2,425.8 L1071.5,415.8Z M1099.9,452.6 L1097.0,463.3 L1094.6,474.0 L1048.3,456.2 L1053.6,446.0 L1059.2,435.9Z M1094.6,474.0 L1092.5,484.7 L1090.8,495.3 L1038.5,476.6 L1043.2,466.4 L1048.3,456.2Z M1090.8,495.3 L1089.5,505.9 L1088.5,516.3 L1029.8,497.1 L1034.0,486.9 L1038.5,476.6Z M1088.5,516.3 L1087.9,526.6 L1087.5,536.8 L1022.3,517.6 L1026.0,507.4 L1029.8,497.1Z M1087.5,536.8 L1087.5,546.8 L1087.8,556.7 L1015.8,538.0 L1018.9,527.8 L1022.3,517.6Z M1087.8,556.7 L1088.5,566.4 L1089.3,575.9 L1010.5,558.4 L1013.0,548.2 L1015.8,538.0Z M1089.3,575.9 L1090.5,585.3 L1091.9,594.5 L1006.4,578.7 L1008.3,568.6 L1010.5,558.4Z M1091.9,594.5 L1093.5,603.4 L1095.4,612.1 L1003.4,598.9 L1004.6,588.8 L1006.4,578.7Z M1095.4,612.1 L1097.5,620.6 L1099.7,628.9 L1001.9,619.0 L1002.6,609.0 L1003.4,598.9Z M1099.7,628.9 L1101.8,637.0 L1103.6,644.8 L1002.1,636.3 L1001.9,627.8 L1001.9,619.0Z M1103.6,644.8 L1105.6,652.3 L1107.5,659.6 L1003.1,652.9 L1002.5,644.6 L1002.1,636.3Z M1133.9,341.7 L1111.1,341.4 L1141.9,326.0 L1164.7,326.4Z M916.3,704.6 L921.7,716.5 L927.4,728.2 L901.9,726.8 L898.2,716.1 L894.7,705.1Z M927.4,728.2 L933.4,739.5 L939.7,750.5 L910.2,747.7 L905.9,737.4 L901.9,726.8Z M939.7,750.5 L946.3,761.1 L953.2,771.4 L919.3,767.6 L914.6,757.8 L910.2,747.7Z M953.2,771.4 L960.3,781.0 L967.4,789.2 L929.3,786.5 L924.2,777.2 L919.3,767.6Z M967.4,789.2 L974.6,797.0 L982.0,804.4 L939.7,804.4 L934.5,795.6 L929.3,786.5Z M982.0,804.4 L989.5,811.5 L997.0,818.2 L950.7,821.3 L945.1,812.9 L939.7,804.4Z M997.0,818.2 L1004.6,824.5 L1012.5,830.5 L962.1,837.2 L956.4,829.3 L950.7,821.3Z M1012.5,830.5 L1020.4,836.1 L1028.3,841.4 L973.9,852.1 L968.0,844.7 L962.1,837.2Z M1028.3,841.4 L1036.4,846.3 L1044.4,850.8 L986.1,866.1 L980.0,859.2 L973.9,852.1Z M1044.4,850.8 L1052.4,855.0 L1060.4,858.8 L998.6,879.2 L992.4,872.7 L986.1,866.1Z M1060.4,858.8 L1068.4,862.3 L1076.3,865.5 L1011.2,891.5 L1004.9,885.4 L998.6,879.2Z M1076.3,865.5 L1084.3,868.3 L1092.1,870.8 L1024.2,902.8 L1017.7,897.3 L1011.2,891.5Z M1092.1,870.8 L1099.8,873.0 L1107.5,875.0 L1037.4,913.3 L1030.8,908.2 L1024.2,902.8Z M1107.5,875.0 L1115.0,876.6 L1122.4,878.0 L1050.9,923.0 L1044.0,918.3 L1037.4,913.3Z M1122.4,878.0 L1129.7,879.1 L1136.8,879.9 L1065.0,931.9 L1057.9,927.5 L1050.9,923.0Z M1136.8,879.9 L1144.1,881.4 L1151.1,882.8 L1079.1,940.0 L1072.0,936.0 L1065.0,931.9Z M1151.1,882.8 L1157.9,884.0 L1164.5,884.9 L1093.3,947.2 L1086.2,943.7 L1079.1,940.0Z M919.0,668.8 L923.5,680.7 L928.3,692.3 L902.8,691.0 L900.0,680.3 L897.4,669.3Z M928.3,692.3 L933.4,703.7 L938.7,714.7 L909.3,711.9 L906.0,701.5 L902.8,691.0Z M938.7,714.7 L944.4,725.3 L950.3,735.7 L916.8,731.8 L912.9,722.0 L909.3,711.9Z M950.3,735.7 L956.5,745.7 L963.0,755.4 L925.2,752.7 L920.8,741.8 L916.8,731.8Z M963.0,755.4 L969.7,764.8 L976.5,773.8 L934.4,773.8 L929.7,763.4 L925.2,752.7Z M976.5,773.8 L983.5,782.5 L990.7,790.8 L944.4,793.9 L939.3,783.9 L934.4,773.8Z M990.7,790.8 L998.1,798.7 L1005.7,806.3 L955.2,813.0 L949.8,803.5 L944.4,793.9Z M1005.7,806.3 L1013.4,813.5 L1021.3,820.3 L966.8,831.1 L960.9,822.2 L955.2,813.0Z M1021.3,820.3 L1029.4,826.8 L1037.5,832.8 L979.0,848.2 L972.8,839.8 L966.8,831.1Z M1037.5,832.8 L1045.6,838.6 L1053.8,843.9 L991.7,864.4 L985.3,856.4 L979.0,848.2Z M1053.8,843.9 L1062.1,848.9 L1070.4,853.5 L1005.0,879.7 L998.3,872.2 L991.7,864.4Z M1070.4,853.5 L1078.7,857.8 L1087.0,861.8 L1018.8,893.9 L1011.8,886.9 L1005.0,879.7Z M1087.0,861.8 L1095.2,865.3 L1103.5,868.6 L1033.2,907.1 L1025.9,900.7 L1018.8,893.9Z M1103.5,868.6 L1111.6,871.6 L1119.8,874.2 L1048.2,919.3 L1040.5,913.4 L1033.2,907.1Z M1119.8,874.2 L1127.8,876.5 L1135.8,878.6 L1063.9,930.6 L1056.0,925.1 L1048.2,919.3Z M1135.8,878.6 L1143.2,880.3 L1150.2,881.8 L1078.1,939.0 L1071.1,935.0 L1063.9,930.6Z M1150.2,881.8 L1157.0,882.9 L1163.6,883.9 L1092.3,946.2 L1085.2,942.7 L1078.1,939.0Z M916.3,704.6 L894.7,705.1 L897.4,669.3 L919.0,668.8Z M1104.5,1082.4 L1117.0,1083.5 L1129.4,1084.1 L1105.3,1085.7 L1094.7,1084.1 L1084.2,1082.2Z M1129.4,1084.1 L1141.7,1084.3 L1153.9,1084.1 L1126.1,1087.8 L1115.7,1086.9 L1105.3,1085.7Z M1153.9,1084.1 L1165.9,1083.5 L1177.8,1082.4 L1146.7,1088.6 L1136.4,1088.3 L1126.1,1087.8Z M1177.8,1082.4 L1189.3,1080.8 L1199.5,1078.4 L1166.8,1088.1 L1156.8,1088.5 L1146.7,1088.6Z M1199.5,1078.4 L1209.5,1075.7 L1219.3,1072.7 L1186.3,1086.6 L1176.7,1087.5 L1166.8,1088.1Z M1219.3,1072.7 L1228.9,1069.5 L1238.2,1066.0 L1205.2,1084.1 L1195.9,1085.4 L1186.3,1086.6Z M1238.2,1066.0 L1247.2,1062.2 L1256.1,1058.1 L1223.6,1080.6 L1214.5,1082.4 L1205.2,1084.1Z M1256.1,1058.1 L1264.7,1053.7 L1273.0,1049.1 L1241.4,1076.4 L1232.6,1078.6 L1223.6,1080.6Z M1273.0,1049.1 L1281.0,1044.2 L1288.8,1039.2 L1258.6,1071.4 L1250.1,1073.9 L1241.4,1076.4Z M1288.8,1039.2 L1296.2,1034.0 L1303.4,1028.7 L1275.3,1065.7 L1267.0,1068.6 L1258.6,1071.4Z M1303.4,1028.7 L1310.3,1023.2 L1316.9,1017.5 L1291.4,1059.6 L1283.4,1062.7 L1275.3,1065.7Z M1316.9,1017.5 L1323.2,1011.7 L1329.2,1005.9 L1306.9,1052.7 L1299.2,1056.2 L1291.4,1059.6Z M1329.2,1005.9 L1334.9,999.9 L1340.3,993.9 L1321.8,1045.3 L1314.5,1049.1 L1306.9,1052.7Z M1340.3,993.9 L1345.4,987.9 L1350.3,981.8 L1336.4,1037.3 L1329.1,1041.3 L1321.8,1045.3Z M1350.3,981.8 L1354.8,975.8 L1359.1,969.7 L1350.7,1028.9 L1343.6,1033.2 L1336.4,1037.3Z M1359.1,969.7 L1363.8,963.4 L1368.2,957.0 L1364.4,1020.0 L1357.6,1024.5 L1350.7,1028.9Z M1368.2,957.0 L1372.2,950.6 L1375.9,944.2 L1377.4,1010.6 L1371.0,1015.3 L1364.4,1020.0Z M1076.5,1061.9 L1088.5,1063.8 L1100.5,1065.3 L1076.3,1066.8 L1066.3,1064.5 L1056.2,1061.8Z M1100.5,1065.3 L1112.3,1066.4 L1124.0,1067.0 L1096.3,1070.5 L1086.4,1068.8 L1076.3,1066.8Z M1124.0,1067.0 L1135.6,1067.2 L1147.1,1067.0 L1116.1,1072.9 L1106.2,1071.9 L1096.3,1070.5Z M1147.1,1067.0 L1158.5,1066.4 L1169.6,1065.4 L1137.1,1074.9 L1126.1,1073.8 L1116.1,1072.9Z M1169.6,1065.4 L1180.7,1064.0 L1191.5,1062.3 L1158.6,1076.1 L1147.9,1075.6 L1137.1,1074.9Z M1191.5,1062.3 L1202.1,1060.3 L1212.6,1057.9 L1179.6,1076.0 L1169.1,1076.2 L1158.6,1076.1Z M1212.6,1057.9 L1222.8,1055.2 L1232.8,1052.1 L1200.3,1074.7 L1190.0,1075.5 L1179.6,1076.0Z M1232.8,1052.1 L1242.6,1048.7 L1252.2,1044.9 L1220.6,1072.4 L1210.5,1073.7 L1200.3,1074.7Z M1252.2,1044.9 L1261.5,1040.8 L1270.6,1036.5 L1240.4,1068.9 L1230.6,1070.8 L1220.6,1072.4Z M1270.6,1036.5 L1279.4,1032.0 L1287.9,1027.2 L1259.7,1064.5 L1250.1,1066.8 L1240.4,1068.9Z M1287.9,1027.2 L1296.1,1022.2 L1304.1,1016.9 L1278.6,1059.4 L1269.2,1062.1 L1259.7,1064.5Z M1304.1,1016.9 L1311.8,1011.5 L1319.2,1005.9 L1296.9,1053.1 L1287.8,1056.4 L1278.6,1059.4Z M1319.2,1005.9 L1326.3,1000.2 L1333.1,994.3 L1314.7,1046.0 L1305.9,1049.7 L1296.9,1053.1Z M1333.1,994.3 L1339.6,988.4 L1345.9,982.3 L1332.0,1038.0 L1323.3,1042.1 L1314.7,1046.0Z M1345.9,982.3 L1351.8,976.2 L1357.5,969.9 L1349.1,1029.2 L1340.6,1033.7 L1332.0,1038.0Z M1357.5,969.9 L1362.5,963.6 L1366.9,957.3 L1363.1,1020.4 L1356.3,1024.8 L1349.1,1029.2Z M1366.9,957.3 L1370.8,950.9 L1374.5,944.5 L1376.1,1011.0 L1369.7,1015.8 L1363.1,1020.4Z M1104.5,1082.4 L1084.2,1082.2 L1056.2,1061.8 L1076.5,1061.9Z M1488.0,1099.6 L1494.7,1090.5 L1501.1,1081.3 L1522.2,1079.5 L1515.4,1090.5 L1508.2,1101.3Z M1501.1,1081.3 L1507.2,1071.9 L1513.0,1062.5 L1534.6,1057.2 L1528.6,1068.4 L1522.2,1079.5Z M1513.0,1062.5 L1518.5,1052.9 L1523.7,1043.3 L1545.3,1034.6 L1540.1,1046.0 L1534.6,1057.2Z M1523.7,1043.3 L1528.5,1033.6 L1533.1,1023.8 L1552.9,1012.8 L1549.7,1023.3 L1545.3,1034.6Z M1533.1,1023.8 L1537.3,1014.1 L1541.3,1004.3 L1558.3,991.9 L1555.8,1002.3 L1552.9,1012.8Z M1541.3,1004.3 L1544.9,994.5 L1548.3,984.8 L1562.3,971.4 L1560.4,981.6 L1558.3,991.9Z M1548.3,984.8 L1551.4,975.0 L1554.4,965.3 L1564.8,951.1 L1563.8,961.2 L1562.3,971.4Z M1554.4,965.3 L1557.0,955.6 L1559.5,946.0 L1566.0,931.2 L1565.6,941.1 L1564.8,951.1Z M1559.5,946.0 L1561.7,936.4 L1563.7,926.8 L1565.8,911.8 L1566.1,921.4 L1566.0,931.2Z M1565.8,911.8 L1565.4,902.4 L1564.6,893.2 L1567.1,908.0 L1565.5,917.4 L1563.7,926.8Z M1564.6,893.2 L1563.6,884.1 L1562.3,875.2 L1569.9,889.4 L1568.6,898.7 L1567.1,908.0Z M1562.3,875.2 L1560.7,866.6 L1558.9,858.2 L1571.8,871.1 L1570.9,880.2 L1569.9,889.4Z M1558.9,858.2 L1556.9,850.0 L1554.8,842.0 L1572.9,853.0 L1572.4,862.0 L1571.8,871.1Z M1554.8,842.0 L1552.4,834.3 L1549.9,826.8 L1573.5,835.2 L1573.2,844.1 L1572.9,853.0Z M1549.9,826.8 L1547.2,819.6 L1544.4,812.7 L1573.8,817.9 L1573.7,826.5 L1573.5,835.2Z M1544.4,812.7 L1541.4,804.8 L1538.1,796.9 L1573.4,800.8 L1573.7,809.3 L1573.8,817.9Z M1538.1,796.9 L1534.4,789.2 L1530.6,781.8 L1572.2,784.1 L1572.9,792.4 L1573.4,800.8Z M1457.2,1114.8 L1464.3,1106.6 L1471.1,1098.1 L1492.2,1096.4 L1485.0,1106.5 L1477.4,1116.4Z M1471.1,1098.1 L1477.6,1089.6 L1483.8,1080.9 L1505.5,1075.8 L1499.0,1086.1 L1492.2,1096.4Z M1483.8,1080.9 L1489.8,1072.1 L1495.4,1063.2 L1517.2,1054.8 L1511.5,1065.3 L1505.5,1075.8Z M1495.4,1063.2 L1501.0,1054.1 L1507.2,1044.2 L1527.2,1033.4 L1522.4,1044.1 L1517.2,1054.8Z M1507.2,1044.2 L1513.1,1034.3 L1518.7,1024.3 L1535.7,1012.0 L1531.7,1022.7 L1527.2,1033.4Z M1518.7,1024.3 L1523.9,1014.2 L1528.8,1004.0 L1542.7,990.6 L1539.4,1001.3 L1535.7,1012.0Z M1528.8,1004.0 L1533.4,993.8 L1537.8,983.5 L1548.2,969.2 L1545.7,979.9 L1542.7,990.6Z M1537.8,983.5 L1541.9,973.2 L1545.7,962.9 L1552.1,947.9 L1550.3,958.6 L1548.2,969.2Z M1545.7,962.9 L1549.2,952.6 L1552.5,942.2 L1554.4,927.0 L1553.4,937.4 L1552.1,947.9Z M1554.4,927.0 L1555.2,916.7 L1555.6,906.5 L1558.3,921.5 L1555.5,931.9 L1552.5,942.2Z M1555.6,906.5 L1555.6,896.5 L1555.3,886.6 L1563.2,901.0 L1560.9,911.3 L1558.3,921.5Z M1555.3,886.6 L1554.8,876.9 L1553.9,867.3 L1567.0,880.4 L1565.3,890.7 L1563.2,901.0Z M1553.9,867.3 L1552.8,858.0 L1551.5,848.8 L1569.8,859.9 L1568.6,870.1 L1567.0,880.4Z M1551.5,848.8 L1549.9,839.9 L1548.0,831.1 L1571.9,839.6 L1570.9,849.7 L1569.8,859.9Z M1548.0,831.1 L1546.0,822.6 L1543.8,814.3 L1573.3,819.5 L1572.7,829.5 L1571.9,839.6Z M1543.8,814.3 L1541.0,806.2 L1537.7,798.3 L1573.0,802.2 L1573.3,810.7 L1573.3,819.5Z M1537.7,798.3 L1534.0,790.6 L1530.3,783.2 L1571.9,785.5 L1572.6,793.8 L1573.0,802.2Z M1477.4,1116.4 L1457.2,1114.8 L1488.0,1099.6 L1508.2,1101.3Z" fill="url(#gDark)" clip-path="url(#cSh)"/>
<path d="M1727.7,737.4 L1706.3,734.9 L1703.6,770.7 L1725.0,773.2Z M1541.3,360.8 L1518.6,359.0 L1546.5,379.5 L1569.2,381.4Z M1133.9,341.7 L1111.1,341.4 L1141.9,326.0 L1164.7,326.4Z M916.3,704.6 L894.7,705.1 L897.4,669.3 L919.0,668.8Z M1104.5,1082.4 L1084.2,1082.2 L1056.2,1061.8 L1076.5,1061.9Z M1508.2,1101.3 L1488.0,1099.6 L1457.2,1114.8 L1477.4,1116.4Z" fill="#2f4053" fill-opacity="0.7" clip-path="url(#cSh)"/>
<g clip-path="url(#cNotSh)"><g clip-path="url(#cHub)" fill="#101b26"><use href="#bf0"/><use href="#bf1"/><use href="#bf2"/><use href="#bf3"/><use href="#bf4"/><use href="#bf5"/></g></g>
<path d="M1727.7,737.4 L1722.3,725.5 L1716.6,713.8 L1710.6,702.5 L1704.3,691.5 L1697.7,680.9 L1690.8,670.6 L1683.7,661.0 L1676.6,652.8 L1669.4,645.0 L1662.0,637.6 L1654.5,630.5 L1647.0,623.8 L1639.4,617.5 L1631.5,611.5 L1623.6,605.9 L1615.7,600.6 L1607.6,595.7 L1599.6,591.2 L1591.6,587.0 L1583.6,583.2 L1575.6,579.7 L1567.7,576.5 L1559.7,573.7 L1551.9,571.2 L1544.2,569.0 L1536.5,567.0 L1529.0,565.4 L1521.6,564.0 L1514.3,562.9 L1507.2,562.1 L1499.1,560.6 L1490.6,559.0 L1482.0,557.8 L1473.6,556.7 L1465.3,555.9 L1457.0,555.4 L1449.1,554.9 L1441.1,554.7 L1433.4,554.7 L1425.8,554.8 L1418.2,555.3 L1411.0,555.7 L1403.8,556.4 L1396.8,557.3 L1390.0,558.1 L1383.4,559.2 L1377.0,560.3 L1370.7,561.5 L1364.6,562.9 L1358.7,564.2 L1353.0,565.7 L1347.4,567.2 L1342.0,568.7 L1336.8,570.4 L1331.7,572.1 L1326.7,573.8 L1322.0,575.6 L1317.4,577.4 L1312.9,579.2 L1308.6,581.0 L1304.4,583.0 L1300.3,584.9 L1296.3,586.7 L1292.5,588.7 L1288.8,590.7 L1285.1,592.7 L1281.6,594.8 L1278.2,596.9 L1274.9,599.1 L1271.7,601.2 L1268.6,603.4 L1265.6,605.6 L1262.7,607.9 L1259.9,610.2 L1257.2,612.5 L1254.5,614.8 L1252.0,617.2 L1249.6,619.6 L1247.2,622.0 L1245.0,624.4 L1242.8,626.9 L1240.8,629.4 L1238.8,631.9 L1236.9,634.4 L1235.1,636.9 L1233.4,639.4 L1231.8,641.9 L1230.2,644.3 L1228.7,646.8 L1227.3,649.2 L1225.9,651.6 L1224.7,654.0 L1223.4,656.3 L1222.2,658.6 L1221.1,660.8 L1219.9,662.9 L1218.8,665.1 L1217.6,667.1 L1216.4,669.0 L1215.3,670.9 M1723.4,736.9 L1718.2,725.1 L1712.7,713.6 L1706.9,702.5 L1700.9,691.6 L1694.5,681.0 L1687.9,670.8 L1681.1,661.2 L1674.2,652.8 L1667.2,644.7 L1660.0,637.0 L1652.7,629.6 L1645.4,622.5 L1637.9,615.8 L1630.3,609.4 L1622.6,603.4 L1614.8,597.7 L1607.0,592.4 L1599.1,587.3 L1591.3,582.6 L1583.5,578.2 L1575.7,574.2 L1567.9,570.4 L1560.1,567.0 L1552.4,563.8 L1544.7,561.0 L1537.1,558.4 L1529.7,556.1 L1522.3,554.0 L1515.0,552.2 L1507.9,550.7 L1500.0,548.6 L1491.7,546.6 L1483.5,544.9 L1475.3,543.3 L1467.2,542.0 L1459.1,541.0 L1451.3,540.0 L1443.5,539.3 L1435.9,538.8 L1428.3,538.4 L1420.9,538.4 L1413.6,538.4 L1406.4,538.6 L1399.4,539.0 L1392.6,539.4 L1385.8,540.1 L1379.3,540.8 L1372.8,541.7 L1366.5,542.7 L1360.4,543.7 L1354.4,545.0 L1348.6,546.2 L1342.9,547.6 L1337.3,549.1 L1331.9,550.6 L1326.7,552.2 L1321.5,553.9 L1316.6,555.6 L1311.7,557.5 L1306.8,559.3 L1302.1,561.2 L1297.5,563.2 L1293.1,565.2 L1288.7,567.2 L1284.5,569.3 L1280.4,571.5 L1276.4,573.8 L1272.4,576.1 L1268.6,578.4 L1264.8,580.8 L1261.2,583.2 L1257.7,585.6 L1254.3,588.1 L1250.9,590.6 L1247.8,593.1 L1244.7,595.7 L1241.7,598.3 L1238.8,600.9 L1236.0,603.5 L1233.3,606.1 L1230.7,608.7 L1228.1,611.3 L1225.7,613.9 L1223.4,616.5 L1221.1,619.0 L1218.9,621.6 L1216.8,624.2 L1214.8,626.8 L1212.8,629.4 L1210.9,632.0 L1209.1,634.6 L1207.4,637.2 L1205.7,639.8 L1204.0,642.4 L1202.4,645.0 L1200.8,647.4 L1199.3,649.9 L1197.8,652.4 L1196.2,654.7 L1194.7,657.1 M1719.1,736.4 L1714.1,724.8 L1708.8,713.5 L1703.3,702.4 L1697.4,691.7 L1691.3,681.2 L1685.0,671.0 L1678.4,661.4 L1671.7,652.7 L1664.9,644.4 L1658.0,636.4 L1650.9,628.6 L1643.7,621.2 L1636.4,614.1 L1629.0,607.4 L1621.5,600.9 L1614.0,594.8 L1606.3,589.0 L1598.7,583.5 L1591.0,578.2 L1583.4,573.3 L1575.7,568.6 L1568.1,564.3 L1560.4,560.3 L1552.8,556.5 L1545.3,553.0 L1537.7,549.7 L1530.3,546.7 L1522.9,544.0 L1515.7,541.5 L1508.6,539.3 L1500.9,536.7 L1492.9,534.2 L1484.9,531.9 L1477.0,529.9 L1469.1,528.1 L1461.2,526.5 L1453.6,525.1 L1445.9,523.9 L1438.4,522.9 L1430.9,522.0 L1423.5,521.5 L1416.2,521.0 L1409.0,520.8 L1402.0,520.7 L1395.1,520.7 L1388.2,521.0 L1381.5,521.3 L1374.9,521.8 L1368.4,522.5 L1362.1,523.3 L1355.8,524.2 L1349.8,525.2 L1343.8,526.4 L1337.9,527.7 L1332.2,529.1 L1326.6,530.6 L1321.1,532.2 L1315.8,533.9 L1310.4,535.7 L1305.1,537.5 L1299.9,539.5 L1294.8,541.5 L1289.8,543.6 L1285.0,545.8 L1280.3,548.0 L1275.7,550.4 L1271.1,552.8 L1266.6,555.2 L1262.2,557.8 L1258.0,560.4 L1253.8,563.0 L1249.8,565.6 L1245.8,568.3 L1242.0,571.1 L1238.3,573.8 L1234.8,576.6 L1231.3,579.4 L1228.0,582.2 L1224.7,584.9 L1221.6,587.7 L1218.5,590.4 L1215.5,593.2 L1212.6,595.9 L1209.8,598.5 L1207.1,601.2 L1204.4,603.9 L1201.9,606.6 L1199.3,609.3 L1196.9,612.1 L1194.6,614.9 L1192.3,617.7 L1190.0,620.5 L1187.9,623.4 L1185.8,626.2 L1183.8,629.1 L1181.8,631.9 L1179.8,634.8 L1177.9,637.7 L1176.0,640.5 L1174.2,643.3 M1714.8,735.9 L1710.0,724.5 L1705.0,713.3 L1699.6,702.4 L1694.0,691.7 L1688.1,681.4 L1682.0,671.3 L1675.7,661.6 L1669.3,652.7 L1662.7,644.1 L1655.9,635.7 L1649.1,627.7 L1642.1,619.9 L1635.0,612.5 L1627.8,605.3 L1620.5,598.4 L1613.1,591.9 L1605.7,585.6 L1598.2,579.6 L1590.7,573.8 L1583.2,568.4 L1575.8,563.1 L1568.3,558.2 L1560.8,553.5 L1553.3,549.1 L1545.8,545.0 L1538.3,541.1 L1530.9,537.4 L1523.6,534.0 L1516.5,530.8 L1509.3,527.9 L1501.8,524.8 L1494.1,521.8 L1486.3,519.0 L1478.6,516.5 L1471.0,514.2 L1463.3,512.1 L1455.8,510.2 L1448.3,508.5 L1440.9,507.0 L1433.5,505.7 L1426.1,504.6 L1418.9,503.7 L1411.7,502.9 L1404.6,502.4 L1397.6,502.0 L1390.6,501.9 L1383.8,501.8 L1377.0,502.0 L1370.3,502.4 L1363.8,502.8 L1357.3,503.5 L1350.9,504.3 L1344.7,505.2 L1338.5,506.3 L1332.4,507.5 L1326.5,509.0 L1320.6,510.5 L1314.9,512.1 L1309.2,513.9 L1303.3,515.8 L1297.6,517.8 L1292.1,519.9 L1286.6,522.1 L1281.3,524.3 L1276.0,526.7 L1270.9,529.2 L1265.9,531.8 L1260.8,534.4 L1255.9,537.2 L1251.1,539.9 L1246.4,542.8 L1241.8,545.6 L1237.4,548.5 L1233.1,551.5 L1228.9,554.5 L1224.9,557.5 L1221.0,560.5 L1217.2,563.5 L1213.4,566.4 L1209.8,569.3 L1206.3,572.2 L1202.9,575.1 L1199.6,577.9 L1196.3,580.6 L1193.1,583.4 L1190.0,586.1 L1186.9,588.9 L1183.9,591.8 L1181.0,594.7 L1178.2,597.7 L1175.4,600.7 L1172.7,603.8 L1170.1,606.9 L1167.6,610.0 L1165.1,613.2 L1162.7,616.4 L1160.4,619.7 L1158.1,622.9 L1155.8,626.2 L1153.7,629.5 M1710.5,735.4 L1706.0,724.2 L1701.1,713.1 L1696.0,702.3 L1690.6,691.8 L1685.0,681.5 L1679.1,671.5 L1673.1,661.8 L1666.8,652.7 L1660.5,643.8 L1653.9,635.1 L1647.2,626.7 L1640.5,618.6 L1633.5,610.8 L1626.5,603.3 L1619.4,596.0 L1612.3,588.9 L1605.0,582.2 L1597.7,575.7 L1590.4,569.4 L1583.1,563.4 L1575.8,557.6 L1568.5,552.1 L1561.1,546.8 L1553.7,541.8 L1546.3,537.0 L1538.9,532.4 L1531.5,528.1 L1524.3,524.0 L1517.2,520.1 L1510.0,516.5 L1502.7,512.8 L1495.2,509.4 L1487.8,506.1 L1480.3,503.1 L1472.9,500.3 L1465.4,497.7 L1458.1,495.3 L1450.7,493.0 L1443.4,491.1 L1436.0,489.3 L1428.7,487.7 L1421.5,486.3 L1414.3,485.1 L1407.2,484.1 L1400.1,483.3 L1393.0,482.8 L1386.0,482.3 L1379.1,482.2 L1372.2,482.2 L1365.4,482.4 L1358.7,482.8 L1352.1,483.3 L1345.5,484.0 L1339.1,484.9 L1332.7,486.0 L1326.4,487.3 L1320.2,488.8 L1314.1,490.4 L1307.9,492.1 L1301.6,494.0 L1295.4,496.1 L1289.3,498.2 L1283.3,500.5 L1277.5,502.9 L1271.8,505.4 L1266.2,508.0 L1260.7,510.8 L1255.0,513.6 L1249.6,516.5 L1244.2,519.5 L1239.0,522.5 L1233.9,525.6 L1229.0,528.8 L1224.2,532.0 L1219.5,535.2 L1215.0,538.4 L1210.6,541.6 L1206.3,544.8 L1202.2,547.9 L1198.1,551.0 L1194.2,554.0 L1190.3,557.0 L1186.5,559.9 L1182.8,562.7 L1179.1,565.5 L1175.5,568.3 L1171.9,571.3 L1168.5,574.3 L1165.1,577.3 L1161.8,580.5 L1158.6,583.7 L1155.4,587.1 L1152.4,590.4 L1149.4,593.9 L1146.5,597.4 L1143.6,600.9 L1140.9,604.6 L1138.2,608.2 L1135.6,612.0 L1133.1,615.7 M1706.3,734.9 L1701.9,723.8 L1697.2,712.9 L1692.3,702.3 L1687.1,691.9 L1681.8,681.7 L1676.2,671.7 L1670.4,662.1 L1664.4,652.6 L1658.2,643.4 L1651.9,634.5 L1645.4,625.8 L1638.8,617.3 L1632.0,609.2 L1625.3,601.2 L1618.4,593.5 L1611.4,586.0 L1604.4,578.8 L1597.3,571.8 L1590.1,565.0 L1583.0,558.5 L1575.9,552.1 L1568.7,546.0 L1561.5,540.1 L1554.2,534.4 L1546.9,529.0 L1539.5,523.8 L1532.2,518.7 L1525.0,514.0 L1517.9,509.4 L1510.7,505.1 L1503.6,500.9 L1496.4,496.9 L1489.2,493.2 L1482.0,489.7 L1474.7,486.4 L1467.5,483.3 L1460.3,480.4 L1453.1,477.6 L1445.8,475.2 L1438.6,472.9 L1431.4,470.8 L1424.2,468.9 L1417.0,467.3 L1409.8,465.9 L1402.6,464.6 L1395.4,463.6 L1388.3,462.9 L1381.2,462.3 L1374.1,462.0 L1367.1,461.9 L1360.1,462.0 L1353.2,462.3 L1346.4,462.8 L1339.6,463.6 L1332.9,464.5 L1326.3,465.7 L1319.7,467.1 L1313.3,468.7 L1306.7,470.4 L1299.9,472.3 L1293.2,474.3 L1286.6,476.6 L1280.1,478.9 L1273.8,481.4 L1267.6,484.0 L1261.5,486.8 L1255.4,489.8 L1249.3,492.8 L1243.2,495.9 L1237.3,499.1 L1231.6,502.3 L1226.0,505.6 L1220.5,509.0 L1215.3,512.4 L1210.1,515.8 L1205.1,519.3 L1200.3,522.7 L1195.5,526.1 L1190.9,529.3 L1186.4,532.6 L1182.0,535.8 L1177.7,538.9 L1173.4,541.9 L1169.2,544.8 L1165.1,547.7 L1161.0,550.6 L1157.0,553.6 L1153.1,556.8 L1149.2,560.0 L1145.4,563.3 L1141.7,566.8 L1138.1,570.3 L1134.6,574.0 L1131.2,577.7 L1127.8,581.5 L1124.6,585.4 L1121.4,589.4 L1118.4,593.5 L1115.4,597.7 L1112.6,601.9 M1725.0,773.2 L1720.5,761.3 L1715.7,749.7 L1710.6,738.3 L1705.3,727.3 L1699.6,716.7 L1693.7,706.3 L1687.5,696.3 L1681.0,686.6 L1674.3,677.2 L1667.5,668.2 L1660.5,659.5 L1653.3,651.2 L1645.9,643.3 L1638.3,635.7 L1630.6,628.5 L1622.7,621.7 L1614.6,615.2 L1606.5,609.2 L1598.4,603.4 L1590.2,598.1 L1581.9,593.1 L1573.6,588.5 L1565.3,584.2 L1557.0,580.2 L1548.8,576.7 L1540.5,573.4 L1532.4,570.4 L1524.2,567.8 L1516.2,565.5 L1508.2,563.4 L1500.0,561.7 L1491.5,560.1 L1483.0,558.8 L1474.6,557.7 L1466.3,556.9 L1458.0,556.3 L1450.1,555.8 L1442.2,555.6 L1434.5,555.5 L1426.9,555.7 L1419.4,556.1 L1412.1,556.5 L1404.9,557.2 L1398.0,558.0 L1391.2,558.8 L1384.6,559.8 L1378.2,560.9 L1372.0,562.1 L1365.9,563.4 L1360.0,564.7 L1354.3,566.2 L1348.7,567.6 L1343.3,569.1 L1338.1,570.8 L1333.0,572.4 L1328.1,574.1 L1323.3,575.8 L1318.7,577.6 L1314.2,579.4 L1309.8,581.2 L1305.6,583.0 L1301.5,584.9 L1297.5,586.7 L1293.7,588.7 L1289.9,590.6 L1286.3,592.6 L1282.7,594.7 L1279.3,596.8 L1276.0,598.9 L1272.8,601.0 L1269.6,603.2 L1266.6,605.4 L1263.7,607.6 L1260.9,609.9 L1258.1,612.2 L1255.5,614.5 L1252.9,616.8 L1250.5,619.2 L1248.1,621.6 L1245.8,624.0 L1243.7,626.4 L1241.6,628.9 L1239.6,631.4 L1237.7,633.9 L1235.9,636.4 L1234.1,638.9 L1232.5,641.3 L1230.9,643.8 L1229.4,646.2 L1227.9,648.6 L1226.6,651.0 L1225.3,653.4 L1224.0,655.7 L1222.8,657.9 L1221.6,660.2 L1220.4,662.3 L1219.3,664.4 L1218.1,666.4 L1216.9,668.3 L1215.7,670.3 M1720.7,772.7 L1716.4,760.9 L1711.8,749.5 L1707.0,738.3 L1701.8,727.4 L1696.4,716.8 L1690.7,706.5 L1684.7,696.5 L1678.5,686.5 L1672.1,676.9 L1665.4,667.6 L1658.6,658.6 L1651.6,649.9 L1644.5,641.6 L1637.1,633.6 L1629.5,626.0 L1621.8,618.7 L1614.0,611.8 L1606.1,605.3 L1598.2,599.0 L1590.1,593.1 L1582.1,587.5 L1573.9,582.3 L1565.7,577.4 L1557.5,572.9 L1549.4,568.6 L1541.2,564.7 L1533.0,561.1 L1524.9,557.8 L1516.9,554.7 L1509.0,552.0 L1500.9,549.7 L1492.7,547.7 L1484.4,545.9 L1476.3,544.3 L1468.2,543.0 L1460.1,541.9 L1452.4,540.9 L1444.6,540.2 L1437.0,539.6 L1429.4,539.3 L1422.0,539.2 L1414.7,539.1 L1407.6,539.3 L1400.6,539.7 L1393.8,540.1 L1387.0,540.7 L1380.5,541.4 L1374.1,542.2 L1367.8,543.2 L1361.7,544.2 L1355.7,545.4 L1349.9,546.6 L1344.2,548.0 L1338.7,549.4 L1333.3,550.9 L1328.0,552.5 L1322.9,554.1 L1317.9,555.8 L1312.9,557.6 L1308.1,559.4 L1303.4,561.3 L1298.8,563.2 L1294.3,565.2 L1290.0,567.2 L1285.7,569.3 L1281.6,571.4 L1277.6,573.7 L1273.6,575.9 L1269.7,578.2 L1265.9,580.6 L1262.3,582.9 L1258.8,585.4 L1255.3,587.8 L1252.0,590.3 L1248.8,592.8 L1245.7,595.3 L1242.7,597.9 L1239.7,600.4 L1236.9,603.0 L1234.2,605.6 L1231.6,608.2 L1229.0,610.8 L1226.6,613.4 L1224.2,615.9 L1221.9,618.5 L1219.7,621.0 L1217.6,623.6 L1215.5,626.2 L1213.5,628.8 L1211.6,631.4 L1209.8,634.0 L1208.0,636.6 L1206.3,639.1 L1204.6,641.7 L1203.0,644.2 L1201.4,646.7 L1199.9,649.2 L1198.3,651.6 L1196.7,654.0 L1195.2,656.4 M1716.4,772.2 L1712.3,760.6 L1708.0,749.3 L1703.3,738.3 L1698.3,727.5 L1693.1,717.0 L1687.7,706.8 L1682.0,696.7 L1676.0,686.5 L1669.8,676.6 L1663.4,667.0 L1656.8,657.6 L1650.0,648.6 L1643.0,639.9 L1635.9,631.6 L1628.5,623.5 L1621.0,615.8 L1613.4,608.4 L1605.7,601.3 L1597.9,594.6 L1590.1,588.1 L1582.2,582.0 L1574.2,576.2 L1566.1,570.7 L1558.0,565.5 L1549.9,560.6 L1541.8,556.0 L1533.7,551.7 L1525.6,547.7 L1517.7,544.0 L1509.7,540.6 L1501.8,537.8 L1493.8,535.2 L1485.9,533.0 L1477.9,530.9 L1470.1,529.1 L1462.3,527.5 L1454.6,526.0 L1447.0,524.7 L1439.5,523.7 L1432.0,522.9 L1424.6,522.3 L1417.4,521.8 L1410.2,521.5 L1403.2,521.4 L1396.3,521.4 L1389.4,521.6 L1382.8,521.9 L1376.2,522.4 L1369.7,523.0 L1363.4,523.8 L1357.1,524.7 L1351.1,525.7 L1345.1,526.8 L1339.2,528.0 L1333.5,529.4 L1327.9,530.9 L1322.4,532.4 L1317.1,534.1 L1311.7,535.8 L1306.4,537.6 L1301.2,539.6 L1296.1,541.6 L1291.1,543.6 L1286.3,545.8 L1281.5,548.0 L1276.9,550.3 L1272.4,552.7 L1267.8,555.1 L1263.4,557.6 L1259.1,560.1 L1255.0,562.7 L1250.9,565.4 L1247.0,568.0 L1243.1,570.7 L1239.4,573.4 L1235.9,576.2 L1232.4,578.9 L1229.0,581.7 L1225.7,584.4 L1222.6,587.2 L1219.5,589.9 L1216.5,592.6 L1213.6,595.3 L1210.8,597.9 L1208.0,600.6 L1205.3,603.2 L1202.7,605.9 L1200.2,608.6 L1197.7,611.4 L1195.3,614.1 L1193.0,616.9 L1190.8,619.8 L1188.6,622.6 L1186.5,625.4 L1184.5,628.3 L1182.4,631.1 L1180.5,634.0 L1178.5,636.8 L1176.6,639.6 L1174.8,642.5 M1712.2,771.7 L1708.3,760.3 L1704.1,749.1 L1699.6,738.2 L1694.9,727.6 L1689.9,717.1 L1684.7,707.0 L1679.2,696.9 L1673.5,686.5 L1667.5,676.3 L1661.3,666.3 L1654.9,656.7 L1648.4,647.3 L1641.6,638.3 L1634.6,629.5 L1627.5,621.0 L1620.2,612.9 L1612.8,605.0 L1605.3,597.4 L1597.7,590.2 L1590.0,583.2 L1582.3,576.4 L1574.4,570.0 L1566.5,563.9 L1558.5,558.1 L1550.5,552.6 L1542.4,547.3 L1534.4,542.4 L1526.3,537.7 L1518.4,533.3 L1510.4,529.2 L1502.7,525.8 L1495.0,522.8 L1487.3,520.0 L1479.6,517.5 L1472.0,515.2 L1464.4,513.0 L1456.9,511.1 L1449.4,509.3 L1442.0,507.8 L1434.6,506.5 L1427.3,505.4 L1420.0,504.4 L1412.9,503.7 L1405.8,503.1 L1398.8,502.7 L1391.8,502.5 L1385.0,502.4 L1378.3,502.5 L1371.6,502.9 L1365.0,503.3 L1358.6,503.9 L1352.2,504.7 L1346.0,505.6 L1339.8,506.6 L1333.8,507.8 L1327.8,509.2 L1322.0,510.7 L1316.3,512.3 L1310.5,514.1 L1304.7,515.9 L1298.9,517.8 L1293.4,519.9 L1287.9,522.1 L1282.5,524.3 L1277.3,526.6 L1272.2,529.1 L1267.2,531.6 L1262.1,534.2 L1257.1,536.9 L1252.3,539.7 L1247.6,542.5 L1243.0,545.3 L1238.6,548.2 L1234.3,551.2 L1230.1,554.1 L1226.0,557.1 L1222.1,560.0 L1218.3,563.0 L1214.5,565.9 L1210.9,568.8 L1207.4,571.6 L1204.0,574.5 L1200.6,577.3 L1197.3,580.0 L1194.1,582.7 L1190.9,585.4 L1187.8,588.2 L1184.8,591.0 L1181.9,593.9 L1179.0,596.9 L1176.3,599.9 L1173.6,603.0 L1170.9,606.0 L1168.4,609.2 L1165.9,612.4 L1163.4,615.5 L1161.1,618.8 L1158.8,622.0 L1156.5,625.3 L1154.3,628.6 M1707.9,771.2 L1704.2,760.0 L1700.2,748.9 L1695.9,738.2 L1691.4,727.6 L1686.7,717.3 L1681.7,707.2 L1676.5,697.2 L1671.0,686.4 L1665.3,676.0 L1659.3,665.7 L1653.1,655.7 L1646.7,646.0 L1640.1,636.6 L1633.4,627.4 L1626.5,618.6 L1619.4,609.9 L1612.2,601.6 L1604.9,593.5 L1597.4,585.7 L1589.9,578.2 L1582.4,570.9 L1574.7,563.9 L1566.9,557.2 L1559.1,550.7 L1551.1,544.5 L1543.1,538.6 L1535.0,533.0 L1527.0,527.7 L1519.1,522.6 L1511.1,517.8 L1503.6,513.9 L1496.2,510.4 L1488.7,507.1 L1481.3,504.1 L1473.9,501.3 L1466.5,498.6 L1459.1,496.1 L1451.8,493.9 L1444.5,491.9 L1437.2,490.1 L1429.9,488.5 L1422.7,487.0 L1415.5,485.8 L1408.4,484.8 L1401.3,484.0 L1394.3,483.4 L1387.3,482.9 L1380.4,482.7 L1373.5,482.7 L1366.7,482.8 L1360.0,483.2 L1353.4,483.7 L1346.8,484.4 L1340.4,485.3 L1334.0,486.3 L1327.7,487.6 L1321.5,489.0 L1315.5,490.6 L1309.3,492.3 L1302.9,494.1 L1296.7,496.1 L1290.6,498.2 L1284.7,500.5 L1278.8,502.8 L1273.1,505.3 L1267.5,507.9 L1262.0,510.6 L1256.3,513.4 L1250.8,516.3 L1245.5,519.3 L1240.3,522.2 L1235.2,525.3 L1230.2,528.4 L1225.4,531.6 L1220.8,534.7 L1216.2,538.0 L1211.8,541.1 L1207.5,544.2 L1203.4,547.3 L1199.3,550.4 L1195.3,553.4 L1191.4,556.4 L1187.6,559.2 L1183.8,562.0 L1180.2,564.8 L1176.5,567.6 L1173.0,570.5 L1169.5,573.5 L1166.1,576.5 L1162.8,579.7 L1159.5,582.9 L1156.3,586.1 L1153.2,589.5 L1150.2,592.9 L1147.3,596.4 L1144.4,599.9 L1141.7,603.6 L1139.0,607.2 L1136.4,610.9 L1133.8,614.7 M1703.6,770.7 L1700.1,759.6 L1696.3,748.8 L1692.3,738.1 L1688.0,727.7 L1683.5,717.5 L1678.7,707.5 L1673.8,697.4 L1668.5,686.4 L1663.0,675.6 L1657.3,665.1 L1651.3,654.8 L1645.1,644.7 L1638.7,634.9 L1632.2,625.4 L1625.4,616.1 L1618.6,607.0 L1611.6,598.2 L1604.5,589.6 L1597.2,581.3 L1589.9,573.2 L1582.5,565.3 L1575.0,557.8 L1567.4,550.4 L1559.6,543.3 L1551.7,536.5 L1543.7,530.0 L1535.7,523.6 L1527.8,517.6 L1519.8,511.9 L1511.8,506.4 L1504.5,501.9 L1497.4,498.0 L1490.2,494.2 L1483.0,490.7 L1475.8,487.3 L1468.6,484.2 L1461.4,481.2 L1454.2,478.5 L1447.0,476.0 L1439.8,473.7 L1432.5,471.6 L1425.3,469.7 L1418.1,468.0 L1411.0,466.5 L1403.8,465.3 L1396.7,464.2 L1389.6,463.4 L1382.5,462.8 L1375.4,462.5 L1368.4,462.4 L1361.5,462.4 L1354.6,462.7 L1347.7,463.2 L1341.0,463.9 L1334.3,464.8 L1327.6,466.0 L1321.1,467.3 L1314.6,468.8 L1308.0,470.5 L1301.2,472.4 L1294.5,474.4 L1287.9,476.6 L1281.5,478.9 L1275.1,481.4 L1268.9,483.9 L1262.8,486.7 L1256.8,489.6 L1250.6,492.6 L1244.6,495.7 L1238.7,498.8 L1232.9,502.0 L1227.3,505.3 L1221.9,508.6 L1216.6,512.0 L1211.4,515.4 L1206.4,518.8 L1201.5,522.1 L1196.8,525.5 L1192.2,528.7 L1187.6,532.0 L1183.2,535.1 L1178.9,538.2 L1174.6,541.2 L1170.4,544.0 L1166.2,546.9 L1162.1,549.8 L1158.1,552.8 L1154.1,555.9 L1150.3,559.1 L1146.5,562.4 L1142.7,565.8 L1139.1,569.3 L1135.6,573.0 L1132.1,576.7 L1128.7,580.5 L1125.5,584.4 L1122.3,588.3 L1119.2,592.4 L1116.2,596.5 L1113.4,600.8 M1723.4,736.9 L1720.7,772.7 M1719.1,736.4 L1716.4,772.2 M1714.8,735.9 L1712.2,771.7 M1710.5,735.4 L1707.9,771.2 M1727.7,737.4 L1706.3,734.9 L1703.6,770.7 L1725.0,773.2Z" fill="none" stroke="#7cc0f4" stroke-width="1" stroke-linejoin="round"/>
<path d="M1541.3,360.8 L1528.8,359.7 L1516.4,358.9 L1504.1,358.7 L1491.9,358.8 L1479.9,359.4 L1468.0,360.4 L1456.5,361.9 L1446.3,364.3 L1436.2,366.9 L1426.4,369.9 L1416.8,373.0 L1407.5,376.5 L1398.4,380.2 L1389.6,384.3 L1381.0,388.6 L1372.7,393.2 L1364.6,398.0 L1356.8,403.0 L1349.3,408.1 L1342.1,413.4 L1335.2,418.9 L1328.6,424.5 L1322.3,430.3 L1316.2,436.1 L1310.5,442.0 L1305.0,448.0 L1299.9,454.0 L1295.0,460.1 L1290.4,466.1 L1286.1,472.1 L1280.6,478.4 L1274.6,484.6 L1268.9,490.9 L1263.4,497.1 L1258.1,503.4 L1253.0,509.7 L1248.2,515.9 L1243.6,522.0 L1239.2,528.2 L1235.0,534.2 L1231.1,540.4 L1227.4,546.3 L1223.9,552.3 L1220.6,558.2 L1217.5,563.9 L1214.6,569.6 L1211.9,575.2 L1209.3,580.7 L1206.9,586.1 L1204.7,591.4 L1202.6,596.6 L1200.7,601.7 L1198.9,606.6 L1197.3,611.6 L1195.7,616.3 L1194.4,621.1 L1193.1,625.7 L1191.9,630.1 L1190.9,634.6 L1189.9,638.8 L1189.1,643.1 L1188.3,647.2 L1187.6,651.3 L1187.0,655.2 L1186.5,659.1 L1186.1,663.0 L1185.8,666.8 L1185.6,670.5 L1185.5,674.1 L1185.4,677.7 L1185.4,681.2 L1185.5,684.6 L1185.7,688.0 L1185.9,691.3 L1186.3,694.5 L1186.6,697.7 L1187.1,700.8 L1187.6,703.9 L1188.3,706.8 L1188.9,709.7 L1189.7,712.6 L1190.5,715.3 L1191.4,718.0 L1192.3,720.6 L1193.3,723.2 L1194.3,725.7 L1195.3,728.1 L1196.4,730.4 L1197.5,732.7 L1198.6,734.9 L1199.7,737.0 L1200.9,739.1 L1202.0,741.2 L1203.2,743.2 L1204.3,745.2 L1205.4,747.1 L1206.5,749.1 L1207.5,751.1 L1208.4,753.1 L1209.4,755.1 M1536.8,360.5 L1524.5,359.1 L1512.3,358.2 L1500.1,357.7 L1488.1,357.6 L1476.3,357.9 L1464.5,358.6 L1453.1,359.9 L1442.7,361.8 L1432.6,364.0 L1422.6,366.5 L1412.8,369.2 L1403.2,372.2 L1393.9,375.5 L1384.8,379.0 L1375.9,382.9 L1367.3,386.9 L1358.9,391.2 L1350.8,395.7 L1342.9,400.4 L1335.3,405.2 L1328.0,410.1 L1320.9,415.2 L1314.1,420.5 L1307.6,425.8 L1301.4,431.2 L1295.4,436.7 L1289.6,442.3 L1284.2,447.9 L1279.1,453.6 L1274.2,459.2 L1268.4,465.1 L1262.2,471.0 L1256.3,476.9 L1250.6,482.9 L1245.1,488.9 L1239.8,494.9 L1234.7,500.8 L1229.8,506.8 L1225.2,512.7 L1220.7,518.7 L1216.5,524.7 L1212.5,530.6 L1208.7,536.5 L1205.1,542.3 L1201.7,548.1 L1198.5,553.8 L1195.4,559.5 L1192.6,565.1 L1189.9,570.7 L1187.4,576.2 L1185.0,581.6 L1182.8,586.9 L1180.8,592.2 L1178.9,597.5 L1177.1,602.6 L1175.5,607.7 L1174.1,612.7 L1172.7,617.6 L1171.5,622.4 L1170.3,627.2 L1169.2,631.9 L1168.3,636.5 L1167.4,641.0 L1166.6,645.5 L1166.0,649.9 L1165.5,654.2 L1165.0,658.5 L1164.6,662.7 L1164.4,666.9 L1164.2,670.9 L1164.0,674.9 L1164.0,678.9 L1164.1,682.7 L1164.3,686.5 L1164.5,690.3 L1164.8,693.9 L1165.2,697.5 L1165.7,701.0 L1166.2,704.5 L1166.8,707.9 L1167.4,711.2 L1168.1,714.5 L1168.8,717.6 L1169.6,720.8 L1170.4,723.9 L1171.3,726.9 L1172.2,729.8 L1173.2,732.7 L1174.2,735.6 L1175.3,738.4 L1176.4,741.1 L1177.5,743.8 L1178.6,746.5 L1179.8,749.1 L1181.0,751.6 L1182.2,754.2 L1183.4,756.7 L1184.6,759.3 L1185.7,761.9 L1186.9,764.4 M1532.3,360.1 L1520.2,358.6 L1508.1,357.4 L1496.2,356.7 L1484.4,356.4 L1472.6,356.4 L1461.0,356.9 L1449.8,357.8 L1439.2,359.3 L1428.9,361.0 L1418.7,363.1 L1408.7,365.4 L1398.9,367.9 L1389.3,370.7 L1380.0,373.8 L1370.8,377.1 L1361.9,380.7 L1353.2,384.5 L1344.7,388.5 L1336.5,392.6 L1328.5,396.9 L1320.8,401.3 L1313.3,405.9 L1306.0,410.6 L1299.0,415.4 L1292.2,420.4 L1285.7,425.5 L1279.4,430.6 L1273.4,435.8 L1267.7,441.0 L1262.3,446.4 L1256.1,451.8 L1249.8,457.3 L1243.7,463.0 L1237.8,468.6 L1232.0,474.3 L1226.5,480.1 L1221.2,485.8 L1216.0,491.5 L1211.1,497.3 L1206.4,503.1 L1201.9,509.0 L1197.6,514.8 L1193.5,520.6 L1189.6,526.5 L1185.8,532.2 L1182.3,538.0 L1179.0,543.8 L1175.8,549.5 L1172.8,555.3 L1170.0,561.0 L1167.4,566.6 L1164.9,572.2 L1162.6,577.8 L1160.5,583.3 L1158.5,588.8 L1156.7,594.3 L1155.1,599.7 L1153.6,605.0 L1152.1,610.3 L1150.7,615.5 L1149.4,620.6 L1148.2,625.7 L1147.2,630.7 L1146.3,635.7 L1145.5,640.6 L1144.8,645.5 L1144.3,650.3 L1143.7,655.0 L1143.3,659.6 L1142.9,664.2 L1142.7,668.7 L1142.6,673.1 L1142.5,677.5 L1142.6,681.8 L1142.7,686.0 L1143.0,690.1 L1143.3,694.2 L1143.7,698.2 L1144.1,702.1 L1144.6,706.0 L1145.1,709.8 L1145.7,713.6 L1146.3,717.3 L1146.9,720.9 L1147.6,724.5 L1148.3,728.1 L1149.1,731.6 L1150.0,735.1 L1150.9,738.5 L1151.9,741.9 L1153.0,745.2 L1154.1,748.5 L1155.3,751.7 L1156.5,754.9 L1157.7,758.1 L1159.0,761.3 L1160.3,764.4 L1161.6,767.5 L1163.0,770.6 L1164.4,773.7 M1527.7,359.8 L1515.8,358.0 L1504.0,356.7 L1492.2,355.7 L1480.6,355.2 L1469.0,355.0 L1457.6,355.1 L1446.4,355.7 L1435.7,356.7 L1425.2,358.1 L1414.8,359.7 L1404.6,361.5 L1394.6,363.6 L1384.8,366.0 L1375.2,368.6 L1365.7,371.4 L1356.5,374.5 L1347.5,377.8 L1338.6,381.2 L1330.1,384.8 L1321.7,388.6 L1313.5,392.5 L1305.6,396.5 L1297.9,400.8 L1290.4,405.1 L1283.1,409.6 L1276.0,414.2 L1269.2,418.8 L1262.7,423.7 L1256.4,428.5 L1250.4,433.5 L1243.9,438.6 L1237.4,443.7 L1231.1,449.0 L1224.9,454.4 L1219.0,459.8 L1213.2,465.2 L1207.6,470.7 L1202.3,476.3 L1197.1,481.9 L1192.1,487.5 L1187.3,493.3 L1182.7,499.0 L1178.3,504.8 L1174.0,510.6 L1170.0,516.4 L1166.2,522.3 L1162.5,528.1 L1159.0,534.0 L1155.8,539.9 L1152.7,545.7 L1149.8,551.6 L1147.0,557.5 L1144.5,563.4 L1142.1,569.2 L1139.9,575.0 L1137.9,580.9 L1136.1,586.7 L1134.4,592.4 L1132.7,598.1 L1131.1,603.8 L1129.5,609.4 L1128.2,615.0 L1127.0,620.5 L1125.9,625.9 L1124.9,631.3 L1124.1,636.7 L1123.5,642.0 L1122.7,647.2 L1122.2,652.4 L1121.7,657.5 L1121.3,662.5 L1121.1,667.4 L1120.9,672.2 L1120.9,677.0 L1121.0,681.7 L1121.2,686.4 L1121.4,690.9 L1121.7,695.4 L1122.0,699.8 L1122.4,704.2 L1122.8,708.4 L1123.3,712.7 L1123.8,716.9 L1124.2,721.0 L1124.8,725.2 L1125.4,729.3 L1126.0,733.3 L1126.8,737.4 L1127.7,741.4 L1128.6,745.3 L1129.6,749.3 L1130.7,753.1 L1131.9,757.0 L1133.1,760.8 L1134.5,764.6 L1135.8,768.3 L1137.3,772.0 L1138.7,775.7 L1140.3,779.4 L1141.9,783.1 M1523.2,359.4 L1511.5,357.5 L1499.9,355.9 L1488.3,354.8 L1476.8,354.0 L1465.4,353.5 L1454.1,353.4 L1443.0,353.6 L1432.2,354.2 L1421.5,355.2 L1411.0,356.3 L1400.6,357.7 L1390.3,359.3 L1380.2,361.2 L1370.4,363.3 L1360.6,365.7 L1351.1,368.2 L1341.8,371.0 L1332.6,374.0 L1323.6,377.1 L1314.9,380.3 L1306.3,383.7 L1297.9,387.2 L1289.8,390.9 L1281.8,394.8 L1274.0,398.8 L1266.4,402.9 L1258.9,407.1 L1251.9,411.5 L1245.1,416.0 L1238.4,420.6 L1231.7,425.3 L1225.0,430.1 L1218.5,435.1 L1212.1,440.1 L1206.0,445.2 L1200.0,450.4 L1194.1,455.7 L1188.5,461.0 L1183.0,466.5 L1177.8,472.0 L1172.7,477.6 L1167.8,483.2 L1163.0,488.9 L1158.5,494.7 L1154.2,500.6 L1150.0,506.5 L1146.1,512.4 L1142.3,518.4 L1138.7,524.5 L1135.3,530.5 L1132.2,536.7 L1129.2,542.8 L1126.4,548.9 L1123.7,555.1 L1121.3,561.3 L1119.1,567.5 L1117.1,573.7 L1115.2,579.8 L1113.4,586.0 L1111.4,592.1 L1109.7,598.2 L1108.1,604.2 L1106.7,610.2 L1105.5,616.2 L1104.4,622.1 L1103.5,627.9 L1102.7,633.8 L1101.8,639.5 L1101.1,645.1 L1100.5,650.7 L1100.0,656.2 L1099.6,661.6 L1099.4,667.0 L1099.3,672.3 L1099.2,677.5 L1099.3,682.6 L1099.5,687.6 L1099.7,692.6 L1099.9,697.5 L1100.2,702.3 L1100.5,707.1 L1100.9,711.8 L1101.2,716.5 L1101.5,721.2 L1101.9,725.8 L1102.4,730.5 L1103.0,735.1 L1103.6,739.7 L1104.4,744.3 L1105.3,748.8 L1106.2,753.3 L1107.3,757.8 L1108.5,762.3 L1109.8,766.7 L1111.2,771.1 L1112.6,775.4 L1114.2,779.7 L1115.8,784.0 L1117.5,788.2 L1119.4,792.4 M1518.6,359.0 L1507.2,356.9 L1495.7,355.2 L1484.3,353.8 L1473.0,352.7 L1461.8,352.0 L1450.6,351.6 L1439.6,351.5 L1428.7,351.7 L1417.9,352.2 L1407.1,352.9 L1396.5,353.8 L1386.0,355.0 L1375.7,356.5 L1365.6,358.1 L1355.6,360.0 L1345.7,362.0 L1336.0,364.3 L1326.5,366.7 L1317.2,369.3 L1308.0,372.0 L1299.1,374.8 L1290.3,377.9 L1281.6,381.1 L1273.1,384.5 L1264.8,388.0 L1256.7,391.6 L1248.7,395.4 L1241.1,399.4 L1233.7,403.5 L1226.5,407.7 L1219.5,412.1 L1212.6,416.5 L1205.9,421.1 L1199.3,425.8 L1192.9,430.7 L1186.7,435.6 L1180.6,440.6 L1174.7,445.8 L1169.0,451.0 L1163.4,456.4 L1158.1,461.9 L1152.9,467.4 L1147.8,473.1 L1143.0,478.9 L1138.3,484.7 L1133.9,490.7 L1129.6,496.7 L1125.5,502.8 L1121.7,509.1 L1118.0,515.3 L1114.5,521.7 L1111.3,528.1 L1108.2,534.5 L1105.3,541.0 L1102.7,547.5 L1100.3,554.1 L1098.1,560.7 L1096.1,567.3 L1094.0,573.9 L1091.8,580.4 L1089.9,587.0 L1088.1,593.5 L1086.5,600.0 L1085.1,606.4 L1083.9,612.8 L1082.8,619.2 L1081.9,625.5 L1080.9,631.7 L1080.0,637.9 L1079.2,644.0 L1078.6,650.0 L1078.1,655.9 L1077.8,661.7 L1077.6,667.5 L1077.5,673.2 L1077.5,678.8 L1077.5,684.3 L1077.7,689.8 L1077.8,695.1 L1078.0,700.4 L1078.2,705.7 L1078.5,710.9 L1078.7,716.1 L1078.9,721.3 L1079.1,726.5 L1079.4,731.7 L1079.9,736.9 L1080.4,742.0 L1081.1,747.2 L1081.9,752.3 L1082.9,757.4 L1083.9,762.5 L1085.1,767.5 L1086.4,772.6 L1087.9,777.5 L1089.4,782.5 L1091.1,787.4 L1092.9,792.2 L1094.8,797.0 L1096.8,801.7 M1569.2,381.4 L1557.2,379.5 L1545.2,377.9 L1533.4,376.8 L1521.7,376.1 L1510.1,375.8 L1498.6,376.0 L1487.3,376.5 L1476.1,377.4 L1465.0,378.7 L1454.2,380.4 L1443.5,382.4 L1433.1,384.7 L1422.9,387.3 L1412.8,390.4 L1403.0,393.8 L1393.4,397.5 L1384.1,401.5 L1375.0,405.8 L1366.2,410.3 L1357.6,415.0 L1349.4,420.0 L1341.4,425.2 L1333.7,430.6 L1326.2,436.1 L1319.1,441.8 L1312.3,447.6 L1305.7,453.5 L1299.4,459.6 L1293.4,465.7 L1287.7,471.9 L1281.9,478.1 L1276.0,484.3 L1270.2,490.6 L1264.7,496.8 L1259.4,503.0 L1254.3,509.3 L1249.5,515.4 L1244.8,521.5 L1240.5,527.6 L1236.3,533.7 L1232.4,539.8 L1228.6,545.7 L1225.1,551.6 L1221.8,557.5 L1218.7,563.2 L1215.7,568.8 L1213.0,574.4 L1210.4,579.8 L1208.0,585.2 L1205.8,590.5 L1203.7,595.7 L1201.7,600.7 L1199.9,605.7 L1198.2,610.6 L1196.7,615.3 L1195.3,620.0 L1193.9,624.6 L1192.7,629.1 L1191.7,633.5 L1190.6,637.8 L1189.8,642.0 L1189.0,646.1 L1188.2,650.2 L1187.6,654.2 L1187.1,658.1 L1186.6,661.9 L1186.3,665.7 L1186.0,669.4 L1185.9,673.0 L1185.8,676.6 L1185.8,680.1 L1185.8,683.6 L1186.0,686.9 L1186.2,690.3 L1186.5,693.5 L1186.8,696.7 L1187.3,699.8 L1187.8,702.8 L1188.4,705.8 L1189.0,708.7 L1189.7,711.6 L1190.5,714.4 L1191.4,717.1 L1192.3,719.7 L1193.2,722.3 L1194.2,724.8 L1195.2,727.2 L1196.3,729.5 L1197.3,731.8 L1198.5,734.0 L1199.6,736.2 L1200.7,738.3 L1201.8,740.4 L1202.9,742.4 L1204.1,744.4 L1205.1,746.4 L1206.2,748.3 L1207.2,750.3 L1208.1,752.3 L1209.1,754.3 M1564.6,381.1 L1552.8,378.9 L1541.1,377.2 L1529.5,375.8 L1517.9,374.9 L1506.5,374.4 L1495.1,374.3 L1483.8,374.5 L1472.5,375.0 L1461.3,375.8 L1450.3,377.0 L1439.5,378.6 L1428.8,380.4 L1418.3,382.6 L1408.0,385.1 L1397.9,388.0 L1388.0,391.2 L1378.4,394.7 L1368.9,398.5 L1359.8,402.4 L1350.8,406.7 L1342.1,411.1 L1333.7,415.8 L1325.5,420.7 L1317.6,425.7 L1310.0,430.9 L1302.6,436.3 L1295.5,441.7 L1288.6,447.4 L1282.1,453.1 L1275.8,459.0 L1269.7,464.8 L1263.6,470.7 L1257.6,476.6 L1251.9,482.5 L1246.4,488.5 L1241.1,494.5 L1235.9,500.3 L1231.1,506.3 L1226.4,512.2 L1222.0,518.1 L1217.7,524.1 L1213.7,529.9 L1209.9,535.8 L1206.3,541.6 L1202.8,547.3 L1199.6,553.0 L1196.5,558.7 L1193.7,564.3 L1191.0,569.8 L1188.4,575.2 L1186.0,580.7 L1183.8,586.0 L1181.7,591.2 L1179.8,596.4 L1178.1,601.5 L1176.4,606.6 L1174.9,611.6 L1173.6,616.5 L1172.3,621.3 L1171.0,626.1 L1169.9,630.8 L1168.9,635.4 L1168.0,639.9 L1167.2,644.4 L1166.5,648.8 L1166.0,653.1 L1165.5,657.4 L1165.1,661.6 L1164.8,665.7 L1164.6,669.8 L1164.4,673.8 L1164.4,677.8 L1164.4,681.6 L1164.5,685.4 L1164.7,689.2 L1165.0,692.8 L1165.4,696.4 L1165.8,699.9 L1166.3,703.4 L1166.8,706.8 L1167.5,710.1 L1168.1,713.4 L1168.8,716.6 L1169.6,719.7 L1170.4,722.8 L1171.2,725.9 L1172.1,728.8 L1173.1,731.7 L1174.1,734.6 L1175.1,737.4 L1176.2,740.2 L1177.3,742.9 L1178.4,745.5 L1179.6,748.1 L1180.8,750.7 L1181.9,753.3 L1183.1,755.8 L1184.2,758.4 L1185.3,761.0 L1186.5,763.5 M1560.1,380.7 L1548.5,378.4 L1537.0,376.4 L1525.5,374.9 L1514.1,373.7 L1502.8,372.9 L1491.6,372.5 L1480.4,372.4 L1469.0,372.5 L1457.7,372.9 L1446.4,373.7 L1435.4,374.7 L1424.5,376.1 L1413.8,377.8 L1403.2,379.9 L1392.8,382.3 L1382.7,385.0 L1372.7,387.9 L1362.9,391.2 L1353.3,394.6 L1344.0,398.3 L1334.9,402.2 L1326.1,406.4 L1317.4,410.7 L1309.0,415.3 L1300.8,420.0 L1292.9,424.9 L1285.2,430.0 L1277.9,435.2 L1270.8,440.6 L1263.9,446.1 L1257.5,451.6 L1251.2,457.0 L1245.0,462.6 L1239.1,468.2 L1233.3,473.9 L1227.8,479.6 L1222.4,485.3 L1217.3,491.0 L1212.4,496.7 L1207.6,502.5 L1203.1,508.3 L1198.8,514.1 L1194.7,519.9 L1190.7,525.7 L1187.0,531.5 L1183.4,537.2 L1180.1,543.0 L1176.9,548.7 L1173.9,554.4 L1171.1,560.0 L1168.4,565.7 L1165.9,571.2 L1163.6,576.8 L1161.4,582.3 L1159.4,587.8 L1157.6,593.2 L1155.9,598.6 L1154.4,603.9 L1152.9,609.2 L1151.4,614.3 L1150.1,619.5 L1148.9,624.6 L1147.8,629.6 L1146.9,634.6 L1146.0,639.4 L1145.3,644.3 L1144.8,649.1 L1144.2,653.8 L1143.7,658.4 L1143.3,663.0 L1143.1,667.5 L1142.9,671.9 L1142.8,676.3 L1142.9,680.6 L1143.0,684.8 L1143.2,689.0 L1143.5,693.0 L1143.8,697.0 L1144.2,701.0 L1144.7,704.8 L1145.2,708.7 L1145.7,712.4 L1146.3,716.1 L1146.9,719.8 L1147.6,723.4 L1148.3,727.0 L1149.0,730.5 L1149.9,734.0 L1150.8,737.4 L1151.8,740.8 L1152.8,744.1 L1153.9,747.4 L1155.0,750.7 L1156.2,753.9 L1157.4,757.1 L1158.7,760.3 L1160.0,763.4 L1161.3,766.5 L1162.6,769.7 L1164.0,772.8 M1555.6,380.3 L1544.2,377.8 L1532.8,375.7 L1521.5,373.9 L1510.3,372.5 L1499.2,371.5 L1488.1,370.8 L1477.0,370.4 L1465.4,370.1 L1454.0,370.0 L1442.6,370.3 L1431.3,370.9 L1420.2,371.8 L1409.2,373.1 L1398.4,374.6 L1387.8,376.5 L1377.3,378.7 L1367.0,381.1 L1356.9,383.9 L1346.9,386.8 L1337.2,390.0 L1327.7,393.3 L1318.4,397.0 L1309.3,400.8 L1300.4,404.9 L1291.7,409.1 L1283.2,413.6 L1275.0,418.2 L1267.1,423.1 L1259.4,428.0 L1252.0,433.2 L1245.3,438.3 L1238.7,443.4 L1232.4,448.6 L1226.3,453.9 L1220.3,459.3 L1214.5,464.8 L1208.9,470.2 L1203.5,475.7 L1198.3,481.3 L1193.3,486.9 L1188.5,492.6 L1183.9,498.3 L1179.4,504.1 L1175.2,509.9 L1171.1,515.6 L1167.3,521.4 L1163.6,527.3 L1160.1,533.1 L1156.8,539.0 L1153.7,544.8 L1150.8,550.7 L1148.0,556.5 L1145.5,562.3 L1143.1,568.2 L1140.8,574.0 L1138.8,579.8 L1136.9,585.6 L1135.2,591.3 L1133.5,597.0 L1131.8,602.6 L1130.3,608.3 L1128.9,613.8 L1127.6,619.3 L1126.5,624.8 L1125.5,630.1 L1124.7,635.5 L1124.0,640.8 L1123.2,646.0 L1122.6,651.1 L1122.1,656.2 L1121.7,661.2 L1121.5,666.1 L1121.3,671.0 L1121.2,675.8 L1121.3,680.5 L1121.4,685.1 L1121.6,689.7 L1121.8,694.1 L1122.1,698.5 L1122.5,702.9 L1122.9,707.2 L1123.3,711.4 L1123.8,715.6 L1124.2,719.8 L1124.7,723.9 L1125.3,728.1 L1125.9,732.1 L1126.7,736.2 L1127.5,740.2 L1128.4,744.1 L1129.4,748.1 L1130.5,752.0 L1131.6,755.8 L1132.8,759.7 L1134.1,763.4 L1135.4,767.2 L1136.9,770.9 L1138.3,774.6 L1139.8,778.3 L1141.4,782.0 M1551.1,379.9 L1539.9,377.2 L1528.7,374.9 L1517.6,373.0 L1506.5,371.4 L1495.5,370.1 L1484.6,369.1 L1473.6,368.4 L1461.9,367.6 L1450.3,367.1 L1438.7,366.9 L1427.2,367.1 L1415.9,367.5 L1404.7,368.3 L1393.6,369.4 L1382.7,370.8 L1371.9,372.4 L1361.3,374.4 L1350.8,376.5 L1340.5,379.0 L1330.4,381.6 L1320.5,384.4 L1310.7,387.5 L1301.2,390.9 L1291.8,394.5 L1282.6,398.3 L1273.6,402.3 L1264.7,406.5 L1256.3,410.9 L1248.1,415.5 L1240.1,420.3 L1233.0,425.0 L1226.3,429.8 L1219.8,434.7 L1213.4,439.7 L1207.3,444.8 L1201.2,449.9 L1195.4,455.1 L1189.7,460.5 L1184.3,465.9 L1179.0,471.3 L1173.9,476.9 L1169.0,482.5 L1164.2,488.2 L1159.7,494.0 L1155.3,499.8 L1151.1,505.7 L1147.2,511.6 L1143.4,517.5 L1139.8,523.6 L1136.4,529.6 L1133.2,535.7 L1130.1,541.8 L1127.3,547.9 L1124.7,554.0 L1122.2,560.2 L1120.0,566.4 L1117.9,572.6 L1116.1,578.7 L1114.2,584.9 L1112.2,590.9 L1110.4,597.0 L1108.8,603.0 L1107.4,609.0 L1106.1,615.0 L1105.0,620.8 L1104.1,626.7 L1103.2,632.5 L1102.3,638.2 L1101.5,643.8 L1100.9,649.4 L1100.4,654.9 L1100.0,660.3 L1099.7,665.7 L1099.6,670.9 L1099.5,676.1 L1099.6,681.2 L1099.7,686.3 L1099.8,691.2 L1100.0,696.1 L1100.3,701.0 L1100.6,705.7 L1100.9,710.5 L1101.2,715.2 L1101.5,719.8 L1101.9,724.5 L1102.3,729.2 L1102.8,733.8 L1103.5,738.4 L1104.2,743.0 L1105.1,747.5 L1106.0,752.0 L1107.1,756.5 L1108.2,761.0 L1109.4,765.4 L1110.8,769.8 L1112.2,774.2 L1113.7,778.5 L1115.4,782.8 L1117.0,787.0 L1118.8,791.2 M1546.5,379.5 L1535.5,376.7 L1524.5,374.2 L1513.6,372.0 L1502.7,370.2 L1491.9,368.6 L1481.1,367.4 L1470.2,366.4 L1458.4,365.1 L1446.6,364.2 L1434.8,363.6 L1423.2,363.2 L1411.6,363.2 L1400.1,363.6 L1388.8,364.1 L1377.6,365.0 L1366.5,366.1 L1355.6,367.6 L1344.8,369.2 L1334.1,371.2 L1323.6,373.3 L1313.2,375.6 L1303.1,378.1 L1293.0,381.0 L1283.1,384.1 L1273.4,387.4 L1263.9,391.0 L1254.5,394.7 L1245.5,398.7 L1236.7,402.9 L1228.2,407.4 L1220.8,411.7 L1213.9,416.1 L1207.2,420.7 L1200.6,425.4 L1194.2,430.2 L1188.0,435.1 L1181.9,440.1 L1176.0,445.2 L1170.2,450.4 L1164.7,455.8 L1159.3,461.2 L1154.0,466.7 L1149.0,472.4 L1144.1,478.1 L1139.5,483.9 L1135.0,489.9 L1130.7,495.9 L1126.6,502.0 L1122.7,508.1 L1119.0,514.4 L1115.6,520.7 L1112.3,527.1 L1109.2,533.5 L1106.3,539.9 L1103.6,546.4 L1101.2,553.0 L1098.9,559.6 L1096.9,566.1 L1094.8,572.7 L1092.6,579.2 L1090.6,585.8 L1088.8,592.3 L1087.2,598.7 L1085.8,605.2 L1084.5,611.5 L1083.4,617.9 L1082.5,624.2 L1081.4,630.4 L1080.5,636.5 L1079.7,642.6 L1079.0,648.6 L1078.5,654.5 L1078.1,660.4 L1077.9,666.1 L1077.8,671.8 L1077.8,677.4 L1077.8,682.9 L1077.9,688.3 L1078.0,693.7 L1078.1,699.0 L1078.3,704.3 L1078.5,709.5 L1078.7,714.7 L1078.8,719.9 L1079.1,725.1 L1079.3,730.3 L1079.7,735.4 L1080.3,740.6 L1080.9,745.8 L1081.7,750.9 L1082.6,756.0 L1083.6,761.1 L1084.8,766.1 L1086.1,771.2 L1087.5,776.2 L1089.0,781.1 L1090.6,786.0 L1092.4,790.9 L1094.3,795.7 L1096.3,800.4 M1536.8,360.5 L1564.6,381.1 M1532.3,360.1 L1560.1,380.7 M1527.7,359.8 L1555.6,380.3 M1523.2,359.4 L1551.1,379.9 M1541.3,360.8 L1518.6,359.0 L1546.5,379.5 L1569.2,381.4Z" fill="none" stroke="#7cc0f4" stroke-width="1" stroke-linejoin="round"/>
<path d="M1133.9,341.7 L1126.7,352.6 L1120.0,363.6 L1113.7,374.7 L1107.7,385.9 L1102.3,397.3 L1097.2,408.7 L1092.8,419.9 L1089.6,430.5 L1086.8,441.0 L1084.4,451.4 L1082.3,461.7 L1080.5,472.0 L1079.1,482.1 L1078.0,492.3 L1077.3,502.3 L1077.0,512.2 L1076.9,522.0 L1077.2,531.6 L1077.7,541.0 L1078.5,550.2 L1079.6,559.2 L1081.0,568.1 L1082.6,576.7 L1084.4,585.1 L1086.4,593.3 L1088.6,601.3 L1091.0,608.9 L1093.6,616.4 L1096.3,623.6 L1099.1,630.6 L1101.4,638.3 L1103.2,646.1 L1105.2,653.7 L1107.2,661.0 L1109.3,668.1 L1111.6,674.9 L1113.8,681.5 L1116.1,687.8 L1118.6,694.0 L1121.1,699.9 L1123.8,705.6 L1126.4,711.0 L1129.2,716.3 L1132.0,721.3 L1134.7,726.1 L1137.6,730.7 L1140.4,735.2 L1143.3,739.4 L1146.2,743.5 L1149.1,747.4 L1152.0,751.1 L1154.8,754.6 L1157.7,758.0 L1160.6,761.2 L1163.5,764.3 L1166.4,767.3 L1169.2,770.1 L1172.0,772.8 L1174.9,775.3 L1177.7,777.7 L1180.5,780.0 L1183.3,782.3 L1186.0,784.4 L1188.7,786.4 L1191.5,788.3 L1194.2,790.1 L1197.0,791.7 L1199.7,793.3 L1202.4,794.8 L1205.1,796.2 L1207.8,797.5 L1210.5,798.7 L1213.1,799.8 L1215.8,800.7 L1218.4,801.7 L1221.0,802.5 L1223.7,803.2 L1226.2,803.8 L1228.8,804.3 L1231.4,804.8 L1233.9,805.1 L1236.4,805.4 L1238.9,805.6 L1241.3,805.6 L1243.7,805.6 L1246.1,805.6 L1248.4,805.5 L1250.7,805.3 L1253.0,805.1 L1255.2,804.9 L1257.4,804.6 L1259.6,804.3 L1261.7,804.0 L1263.8,803.8 L1265.9,803.4 L1268.0,803.3 L1270.0,803.1 L1272.1,803.0 L1274.2,803.1 L1276.3,803.2 M1129.4,341.6 L1122.1,352.2 L1115.2,362.8 L1108.8,373.6 L1102.7,384.4 L1097.1,395.4 L1091.8,406.4 L1087.1,417.3 L1083.5,427.7 L1080.2,438.0 L1077.3,448.3 L1074.7,458.5 L1072.4,468.6 L1070.4,478.7 L1068.8,488.7 L1067.5,498.6 L1066.5,508.5 L1065.9,518.2 L1065.5,527.8 L1065.4,537.2 L1065.6,546.4 L1066.0,555.5 L1066.6,564.4 L1067.6,573.1 L1068.7,581.7 L1070.0,590.0 L1071.6,598.1 L1073.3,606.1 L1075.3,613.8 L1077.3,621.3 L1079.6,628.6 L1081.4,636.5 L1082.9,644.4 L1084.6,652.1 L1086.3,659.7 L1088.2,667.0 L1090.2,674.0 L1092.2,680.9 L1094.3,687.6 L1096.6,694.0 L1098.9,700.3 L1101.4,706.4 L1103.9,712.2 L1106.6,717.9 L1109.3,723.4 L1112.0,728.7 L1114.8,733.8 L1117.6,738.7 L1120.5,743.4 L1123.5,748.0 L1126.4,752.4 L1129.5,756.6 L1132.5,760.6 L1135.5,764.6 L1138.7,768.3 L1141.8,771.9 L1144.9,775.3 L1148.0,778.6 L1151.2,781.8 L1154.3,784.8 L1157.4,787.7 L1160.4,790.4 L1163.5,793.0 L1166.6,795.5 L1169.6,797.9 L1172.7,800.2 L1175.8,802.3 L1178.9,804.3 L1181.9,806.2 L1184.9,808.0 L1187.9,809.6 L1191.0,811.2 L1194.0,812.7 L1197.0,814.0 L1199.9,815.3 L1202.9,816.4 L1205.9,817.5 L1208.8,818.5 L1211.8,819.4 L1214.7,820.2 L1217.6,821.0 L1220.4,821.7 L1223.3,822.3 L1226.1,822.8 L1229.0,823.4 L1231.8,823.8 L1234.5,824.3 L1237.3,824.6 L1240.1,824.9 L1242.8,825.1 L1245.5,825.3 L1248.2,825.4 L1250.9,825.5 L1253.5,825.5 L1256.2,825.6 L1258.8,825.5 L1261.4,825.6 L1264.0,825.6 L1266.7,825.8 L1269.3,826.0 L1272.0,826.1 M1124.8,341.6 L1117.5,351.7 L1110.5,362.0 L1103.9,372.4 L1097.7,382.9 L1091.9,393.5 L1086.4,404.1 L1081.5,414.7 L1077.4,424.9 L1073.7,435.1 L1070.2,445.2 L1067.1,455.3 L1064.2,465.3 L1061.7,475.2 L1059.5,485.2 L1057.7,495.0 L1056.1,504.7 L1054.8,514.4 L1053.8,524.0 L1053.1,533.3 L1052.6,542.6 L1052.3,551.7 L1052.3,560.7 L1052.5,569.5 L1053.0,578.2 L1053.7,586.7 L1054.5,595.0 L1055.6,603.2 L1056.9,611.2 L1058.4,619.0 L1060.1,626.6 L1061.4,634.7 L1062.6,642.7 L1064.0,650.6 L1065.4,658.3 L1067.0,665.8 L1068.7,673.2 L1070.5,680.3 L1072.5,687.3 L1074.5,694.1 L1076.7,700.7 L1079.0,707.2 L1081.4,713.5 L1083.9,719.6 L1086.5,725.5 L1089.2,731.2 L1092.0,736.8 L1094.8,742.2 L1097.7,747.4 L1100.8,752.5 L1103.8,757.4 L1107.0,762.1 L1110.1,766.7 L1113.4,771.1 L1116.7,775.4 L1120.0,779.5 L1123.4,783.4 L1126.9,787.2 L1130.3,790.8 L1133.7,794.3 L1137.0,797.6 L1140.4,800.7 L1143.8,803.8 L1147.1,806.7 L1150.5,809.4 L1153.9,812.1 L1157.4,814.6 L1160.8,816.9 L1164.1,819.1 L1167.5,821.1 L1170.8,823.1 L1174.1,824.9 L1177.4,826.7 L1180.8,828.3 L1184.1,829.8 L1187.4,831.2 L1190.7,832.5 L1194.0,833.8 L1197.3,835.0 L1200.5,836.1 L1203.8,837.1 L1207.0,838.2 L1210.2,839.2 L1213.4,840.1 L1216.6,841.1 L1219.8,842.0 L1223.0,842.9 L1226.2,843.7 L1229.4,844.5 L1232.6,845.1 L1235.8,845.7 L1239.0,846.2 L1242.2,846.6 L1245.3,847.0 L1248.5,847.4 L1251.7,847.6 L1254.9,847.9 L1258.1,848.2 L1261.3,848.5 L1264.5,848.8 L1267.7,849.0 M1120.2,341.5 L1112.8,351.3 L1105.7,361.2 L1099.0,371.2 L1092.7,381.3 L1086.7,391.6 L1081.0,401.8 L1075.8,412.1 L1071.3,422.1 L1067.1,432.1 L1063.1,442.1 L1059.5,452.0 L1056.1,461.9 L1053.0,471.8 L1050.3,481.6 L1047.8,491.4 L1045.6,501.0 L1043.8,510.6 L1042.1,520.1 L1040.7,529.5 L1039.6,538.8 L1038.6,547.9 L1038.0,557.0 L1037.5,565.9 L1037.3,574.7 L1037.3,583.4 L1037.5,591.9 L1037.8,600.3 L1038.5,608.5 L1039.4,616.7 L1040.5,624.6 L1041.4,632.9 L1042.3,641.0 L1043.4,649.1 L1044.5,657.0 L1045.9,664.7 L1047.3,672.3 L1048.9,679.8 L1050.6,687.1 L1052.5,694.2 L1054.5,701.2 L1056.7,708.0 L1058.9,714.7 L1061.3,721.2 L1063.8,727.6 L1066.4,733.8 L1069.2,739.8 L1072.0,745.7 L1075.0,751.4 L1078.0,757.0 L1081.2,762.4 L1084.5,767.6 L1087.8,772.7 L1091.2,777.7 L1094.7,782.4 L1098.3,787.0 L1101.9,791.4 L1105.7,795.7 L1109.4,799.8 L1113.1,803.8 L1116.7,807.5 L1120.3,811.1 L1124.0,814.5 L1127.7,817.8 L1131.4,821.0 L1135.2,824.0 L1138.9,826.8 L1142.7,829.5 L1146.3,832.0 L1150.0,834.3 L1153.6,836.6 L1157.3,838.7 L1160.9,840.7 L1164.6,842.5 L1168.2,844.3 L1171.9,846.0 L1175.5,847.5 L1179.2,849.1 L1182.8,850.5 L1186.4,852.0 L1190.0,853.3 L1193.6,854.7 L1197.2,856.0 L1200.7,857.4 L1204.3,858.9 L1207.9,860.2 L1211.5,861.6 L1215.1,862.8 L1218.8,864.0 L1222.4,865.1 L1226.1,866.1 L1229.8,867.0 L1233.5,867.8 L1237.2,868.5 L1240.9,869.1 L1244.6,869.7 L1248.3,870.3 L1252.1,870.7 L1255.8,871.2 L1259.6,871.6 L1263.4,871.9 M1115.7,341.5 L1108.2,350.9 L1101.0,360.4 L1094.1,370.0 L1087.6,379.8 L1081.5,389.6 L1075.6,399.6 L1070.2,409.5 L1065.2,419.4 L1060.5,429.2 L1056.0,439.0 L1051.8,448.8 L1047.9,458.6 L1044.4,468.3 L1041.0,478.0 L1038.0,487.7 L1035.2,497.3 L1032.7,506.9 L1030.4,516.3 L1028.4,525.7 L1026.6,535.0 L1025.0,544.2 L1023.6,553.3 L1022.5,562.3 L1021.6,571.2 L1020.9,580.1 L1020.4,588.8 L1020.1,597.4 L1020.2,605.9 L1020.5,614.3 L1021.0,622.6 L1021.5,631.0 L1022.0,639.3 L1022.7,647.6 L1023.7,655.7 L1024.7,663.6 L1025.9,671.5 L1027.3,679.2 L1028.8,686.8 L1030.5,694.3 L1032.3,701.6 L1034.3,708.8 L1036.4,715.9 L1038.7,722.9 L1041.1,729.7 L1043.7,736.3 L1046.4,742.8 L1049.2,749.2 L1052.2,755.4 L1055.3,761.5 L1058.6,767.4 L1061.9,773.2 L1065.4,778.8 L1069.0,784.2 L1072.7,789.5 L1076.5,794.6 L1080.5,799.5 L1084.5,804.3 L1088.6,808.9 L1092.6,813.2 L1096.4,817.4 L1100.3,821.4 L1104.2,825.3 L1108.3,829.0 L1112.3,832.5 L1116.4,835.9 L1120.5,839.0 L1124.6,842.0 L1128.6,844.8 L1132.5,847.5 L1136.5,850.0 L1140.4,852.4 L1144.4,854.7 L1148.4,856.8 L1152.4,858.8 L1156.4,860.7 L1160.4,862.5 L1164.3,864.4 L1168.3,866.1 L1172.3,867.8 L1176.2,869.5 L1180.1,871.2 L1184.1,872.9 L1188.0,874.7 L1192.0,876.6 L1196.0,878.4 L1200.0,880.3 L1204.0,882.0 L1208.1,883.6 L1212.2,885.1 L1216.4,886.4 L1220.6,887.7 L1224.8,888.9 L1229.0,890.0 L1233.2,890.9 L1237.5,891.8 L1241.8,892.6 L1246.1,893.3 L1250.4,893.9 L1254.8,894.4 L1259.1,894.8 M1111.1,341.4 L1103.5,350.4 L1096.2,359.6 L1089.3,368.9 L1082.6,378.3 L1076.3,387.7 L1070.2,397.3 L1064.5,406.9 L1059.1,416.6 L1053.9,426.3 L1048.9,435.9 L1044.2,445.6 L1039.8,455.2 L1035.7,464.9 L1031.8,474.5 L1028.2,484.1 L1024.8,493.6 L1021.6,503.1 L1018.7,512.5 L1016.1,521.9 L1013.6,531.2 L1011.3,540.4 L1009.3,549.6 L1007.5,558.7 L1005.9,567.8 L1004.5,576.7 L1003.4,585.7 L1002.4,594.5 L1001.8,603.3 L1001.5,612.0 L1001.4,620.6 L1001.5,629.2 L1001.7,637.7 L1002.1,646.0 L1002.8,654.3 L1003.6,662.5 L1004.5,670.6 L1005.6,678.6 L1006.9,686.6 L1008.4,694.4 L1010.1,702.1 L1011.9,709.7 L1013.9,717.1 L1016.0,724.5 L1018.4,731.7 L1020.9,738.9 L1023.6,745.9 L1026.4,752.7 L1029.4,759.4 L1032.6,766.0 L1035.9,772.4 L1039.4,778.7 L1043.1,784.8 L1046.8,790.7 L1050.7,796.5 L1054.8,802.1 L1059.0,807.6 L1063.3,812.8 L1067.7,817.9 L1072.0,822.7 L1076.1,827.4 L1080.2,831.8 L1084.5,836.0 L1088.8,840.1 L1093.2,844.0 L1097.6,847.8 L1102.1,851.3 L1106.6,854.6 L1110.8,857.7 L1115.0,860.7 L1119.3,863.5 L1123.6,866.1 L1127.9,868.7 L1132.2,871.1 L1136.5,873.3 L1140.9,875.5 L1145.2,877.6 L1149.5,879.7 L1153.8,881.6 L1158.1,883.7 L1162.4,885.7 L1166.7,887.8 L1171.0,889.8 L1175.3,892.0 L1179.6,894.3 L1184.0,896.6 L1188.5,898.9 L1192.9,901.1 L1197.5,903.1 L1202.1,905.0 L1206.7,906.8 L1211.4,908.5 L1216.1,910.0 L1220.8,911.5 L1225.6,912.7 L1230.4,913.9 L1235.3,914.9 L1240.1,915.8 L1245.0,916.6 L1249.9,917.2 L1254.8,917.7 M1164.7,326.4 L1157.1,336.4 L1149.9,346.6 L1143.1,356.9 L1136.8,367.3 L1130.8,377.7 L1125.2,388.3 L1120.0,399.0 L1115.2,409.7 L1110.8,420.5 L1106.9,431.2 L1103.2,441.9 L1099.9,452.6 L1097.0,463.3 L1094.6,474.0 L1092.5,484.7 L1090.8,495.3 L1089.5,505.9 L1088.5,516.3 L1087.9,526.6 L1087.5,536.8 L1087.5,546.8 L1087.8,556.7 L1088.5,566.4 L1089.3,575.9 L1090.5,585.3 L1091.9,594.5 L1093.5,603.4 L1095.4,612.1 L1097.5,620.6 L1099.7,628.9 L1101.8,637.0 L1103.6,644.8 L1105.6,652.3 L1107.5,659.6 L1109.6,666.7 L1111.9,673.5 L1114.0,680.1 L1116.4,686.4 L1118.8,692.5 L1121.3,698.4 L1123.9,704.1 L1126.5,709.6 L1129.2,714.8 L1132.0,719.9 L1134.7,724.7 L1137.5,729.3 L1140.3,733.7 L1143.1,738.0 L1146.0,742.0 L1148.8,745.9 L1151.7,749.6 L1154.6,753.2 L1157.4,756.6 L1160.3,759.9 L1163.1,763.0 L1166.0,765.9 L1168.8,768.8 L1171.6,771.5 L1174.4,774.0 L1177.2,776.5 L1179.9,778.9 L1182.7,781.1 L1185.4,783.3 L1188.1,785.3 L1190.9,787.2 L1193.6,789.1 L1196.3,790.8 L1199.0,792.4 L1201.7,793.9 L1204.4,795.3 L1207.1,796.6 L1209.8,797.8 L1212.4,799.0 L1215.1,800.0 L1217.7,800.9 L1220.3,801.8 L1222.9,802.5 L1225.5,803.2 L1228.0,803.7 L1230.6,804.2 L1233.1,804.6 L1235.6,804.9 L1238.1,805.1 L1240.5,805.2 L1242.9,805.2 L1245.3,805.2 L1247.6,805.1 L1249.9,805.0 L1252.2,804.8 L1254.4,804.6 L1256.6,804.4 L1258.8,804.1 L1260.9,803.8 L1263.0,803.6 L1265.1,803.3 L1267.2,803.1 L1269.3,803.0 L1271.3,802.9 L1273.4,803.1 L1275.6,803.1 M1160.1,326.4 L1152.5,336.0 L1145.2,345.8 L1138.3,355.7 L1131.7,365.7 L1125.6,375.9 L1119.8,386.1 L1114.4,396.4 L1109.2,407.0 L1104.3,417.5 L1099.8,428.1 L1095.6,438.7 L1091.8,449.3 L1088.3,459.9 L1085.3,470.5 L1082.7,481.0 L1080.4,491.6 L1078.4,502.1 L1076.8,512.5 L1075.5,522.7 L1074.5,532.9 L1073.8,543.0 L1073.4,552.9 L1073.4,562.8 L1073.6,572.4 L1074.0,582.0 L1074.8,591.3 L1075.7,600.5 L1077.0,609.5 L1078.5,618.3 L1080.2,627.0 L1081.8,635.2 L1083.3,643.1 L1084.9,650.8 L1086.6,658.3 L1088.5,665.6 L1090.4,672.6 L1092.4,679.5 L1094.5,686.2 L1096.7,692.6 L1099.0,698.9 L1101.5,704.9 L1104.0,710.8 L1106.6,716.5 L1109.2,721.9 L1111.9,727.2 L1114.7,732.3 L1117.5,737.3 L1120.4,742.0 L1123.3,746.5 L1126.2,751.0 L1129.2,755.2 L1132.2,759.3 L1135.2,763.2 L1138.3,766.9 L1141.3,770.5 L1144.5,774.0 L1147.6,777.3 L1150.7,780.5 L1153.8,783.5 L1156.8,786.4 L1159.9,789.2 L1162.9,791.8 L1166.0,794.4 L1169.0,796.8 L1172.1,799.1 L1175.1,801.3 L1178.2,803.3 L1181.2,805.2 L1184.2,807.0 L1187.2,808.7 L1190.2,810.3 L1193.2,811.8 L1196.2,813.2 L1199.2,814.5 L1202.1,815.7 L1205.1,816.8 L1208.0,817.8 L1210.9,818.7 L1213.8,819.6 L1216.7,820.3 L1219.6,821.1 L1222.4,821.7 L1225.3,822.3 L1228.1,822.9 L1230.9,823.4 L1233.7,823.8 L1236.4,824.2 L1239.2,824.5 L1241.9,824.8 L1244.6,824.9 L1247.3,825.1 L1250.0,825.2 L1252.6,825.3 L1255.3,825.3 L1257.9,825.3 L1260.5,825.4 L1263.2,825.5 L1265.8,825.6 L1268.5,825.9 L1271.1,826.0 M1155.5,326.3 L1147.8,335.6 L1140.4,345.0 L1133.4,354.6 L1126.7,364.2 L1120.4,374.0 L1114.5,383.9 L1108.8,393.9 L1103.1,404.2 L1097.7,414.6 L1092.7,425.1 L1088.0,435.5 L1083.7,445.9 L1079.7,456.4 L1076.1,466.9 L1072.8,477.4 L1069.9,487.8 L1067.3,498.3 L1065.1,508.6 L1063.1,518.9 L1061.4,529.1 L1060.1,539.2 L1059.0,549.2 L1058.3,559.1 L1057.8,568.9 L1057.6,578.6 L1057.7,588.2 L1058.0,597.6 L1058.6,606.9 L1059.5,616.0 L1060.6,625.0 L1061.8,633.3 L1063.0,641.4 L1064.3,649.2 L1065.7,656.9 L1067.3,664.4 L1069.0,671.8 L1070.7,678.9 L1072.6,685.9 L1074.7,692.7 L1076.8,699.3 L1079.1,705.8 L1081.5,712.0 L1083.9,718.1 L1086.5,724.0 L1089.1,729.8 L1091.9,735.4 L1094.7,740.8 L1097.6,746.0 L1100.6,751.1 L1103.6,756.0 L1106.7,760.7 L1109.8,765.3 L1113.0,769.7 L1116.3,774.0 L1119.6,778.1 L1123.0,782.0 L1126.4,785.8 L1129.8,789.5 L1133.2,793.0 L1136.5,796.3 L1139.8,799.5 L1143.1,802.6 L1146.5,805.5 L1149.9,808.3 L1153.3,811.0 L1156.7,813.5 L1160.1,815.8 L1163.4,818.1 L1166.7,820.2 L1170.0,822.1 L1173.3,824.0 L1176.6,825.7 L1179.9,827.4 L1183.3,828.9 L1186.6,830.4 L1189.8,831.7 L1193.1,833.0 L1196.4,834.2 L1199.6,835.4 L1202.9,836.5 L1206.1,837.5 L1209.3,838.5 L1212.5,839.5 L1215.7,840.6 L1218.9,841.5 L1222.1,842.4 L1225.3,843.3 L1228.4,844.0 L1231.6,844.7 L1234.8,845.3 L1238.0,845.8 L1241.2,846.3 L1244.4,846.7 L1247.5,847.1 L1250.7,847.4 L1253.9,847.7 L1257.1,848.0 L1260.3,848.3 L1263.5,848.6 L1266.7,848.9 M1151.0,326.2 L1143.2,335.1 L1135.7,344.2 L1128.5,353.4 L1121.7,362.7 L1115.2,372.1 L1109.1,381.7 L1103.1,391.3 L1097.0,401.5 L1091.2,411.7 L1085.6,422.0 L1080.4,432.3 L1075.5,442.6 L1071.0,452.9 L1066.8,463.3 L1062.9,473.7 L1059.4,484.1 L1056.2,494.5 L1053.3,504.8 L1050.7,515.1 L1048.4,525.3 L1046.4,535.4 L1044.6,545.5 L1043.2,555.5 L1042.1,565.4 L1041.2,575.3 L1040.6,585.0 L1040.2,594.7 L1040.2,604.2 L1040.5,613.7 L1041.1,623.0 L1041.8,631.5 L1042.7,639.7 L1043.7,647.7 L1044.8,655.6 L1046.2,663.3 L1047.6,670.9 L1049.1,678.4 L1050.8,685.6 L1052.6,692.8 L1054.6,699.8 L1056.7,706.6 L1058.9,713.3 L1061.3,719.8 L1063.8,726.1 L1066.3,732.3 L1069.1,738.4 L1071.9,744.3 L1074.8,750.0 L1077.8,755.6 L1080.9,761.0 L1084.2,766.2 L1087.5,771.3 L1090.8,776.3 L1094.3,781.0 L1097.8,785.7 L1101.5,790.1 L1105.2,794.4 L1108.9,798.5 L1112.6,802.5 L1116.1,806.3 L1119.7,809.9 L1123.4,813.3 L1127.0,816.6 L1130.7,819.8 L1134.5,822.8 L1138.2,825.7 L1142.0,828.4 L1145.6,830.9 L1149.2,833.3 L1152.8,835.6 L1156.4,837.7 L1160.1,839.7 L1163.7,841.6 L1167.4,843.4 L1171.0,845.1 L1174.6,846.7 L1178.2,848.3 L1181.8,849.7 L1185.4,851.2 L1189.0,852.6 L1192.6,854.0 L1196.1,855.4 L1199.7,856.8 L1203.3,858.3 L1206.9,859.7 L1210.5,861.1 L1214.1,862.3 L1217.7,863.5 L1221.4,864.6 L1225.0,865.6 L1228.7,866.6 L1232.4,867.4 L1236.1,868.2 L1239.8,868.9 L1243.5,869.5 L1247.2,870.0 L1251.0,870.5 L1254.7,871.0 L1258.5,871.4 L1262.3,871.8 M1146.4,326.1 L1138.5,334.7 L1130.9,343.4 L1123.7,352.2 L1116.7,361.2 L1110.1,370.3 L1103.7,379.4 L1097.5,388.8 L1090.9,398.8 L1084.6,408.8 L1078.5,418.9 L1072.8,429.0 L1067.4,439.2 L1062.3,449.5 L1057.5,459.7 L1053.1,470.0 L1048.9,480.3 L1045.1,490.7 L1041.6,500.9 L1038.3,511.2 L1035.4,521.4 L1032.6,531.6 L1030.2,541.7 L1028.1,551.9 L1026.3,561.9 L1024.7,571.9 L1023.5,581.9 L1022.4,591.7 L1021.8,601.6 L1021.5,611.3 L1021.5,621.0 L1021.9,629.7 L1022.4,638.0 L1023.1,646.2 L1024.0,654.3 L1025.0,662.2 L1026.2,670.1 L1027.5,677.8 L1028.9,685.4 L1030.6,692.9 L1032.4,700.2 L1034.3,707.4 L1036.4,714.5 L1038.7,721.4 L1041.0,728.2 L1043.6,734.9 L1046.2,741.4 L1049.0,747.8 L1052.0,754.0 L1055.1,760.1 L1058.3,766.0 L1061.6,771.8 L1065.1,777.4 L1068.6,782.8 L1072.3,788.1 L1076.1,793.2 L1080.0,798.2 L1084.0,802.9 L1088.1,807.5 L1092.0,812.0 L1095.8,816.2 L1099.7,820.2 L1103.6,824.1 L1107.6,827.8 L1111.6,831.3 L1115.7,834.7 L1119.8,837.9 L1123.9,840.9 L1127.8,843.8 L1131.7,846.4 L1135.6,849.0 L1139.6,851.4 L1143.5,853.7 L1147.5,855.8 L1151.4,857.9 L1155.4,859.8 L1159.4,861.7 L1163.3,863.5 L1167.3,865.3 L1171.2,867.0 L1175.1,868.7 L1179.1,870.5 L1183.0,872.2 L1186.9,874.0 L1190.9,876.0 L1194.8,877.8 L1198.8,879.7 L1202.9,881.4 L1207.0,883.1 L1211.1,884.6 L1215.2,886.0 L1219.4,887.3 L1223.6,888.5 L1227.8,889.6 L1232.0,890.6 L1236.3,891.5 L1240.6,892.3 L1244.9,893.1 L1249.2,893.7 L1253.5,894.2 L1257.9,894.7 M1141.9,326.0 L1133.9,334.2 L1126.2,342.6 L1118.8,351.1 L1111.7,359.7 L1104.9,368.4 L1098.4,377.2 L1091.9,386.3 L1084.8,396.0 L1078.1,405.9 L1071.5,415.8 L1065.2,425.8 L1059.2,435.9 L1053.6,446.0 L1048.3,456.2 L1043.2,466.4 L1038.5,476.6 L1034.0,486.9 L1029.8,497.1 L1026.0,507.4 L1022.3,517.6 L1018.9,527.8 L1015.8,538.0 L1013.0,548.2 L1010.5,558.4 L1008.3,568.6 L1006.4,578.7 L1004.6,588.8 L1003.4,598.9 L1002.6,609.0 L1001.9,619.0 L1001.9,627.8 L1002.1,636.3 L1002.5,644.6 L1003.1,652.9 L1003.8,661.1 L1004.7,669.2 L1005.8,677.2 L1007.1,685.1 L1008.5,692.9 L1010.1,700.6 L1011.9,708.2 L1013.9,715.7 L1016.0,723.1 L1018.3,730.3 L1020.8,737.4 L1023.4,744.4 L1026.2,751.3 L1029.2,758.0 L1032.4,764.6 L1035.7,771.0 L1039.1,777.3 L1042.7,783.4 L1046.4,789.4 L1050.3,795.2 L1054.3,800.8 L1058.5,806.2 L1062.8,811.5 L1067.2,816.6 L1071.4,821.4 L1075.5,826.1 L1079.6,830.5 L1083.8,834.8 L1088.1,838.9 L1092.5,842.8 L1096.9,846.6 L1101.3,850.1 L1105.8,853.5 L1110.0,856.6 L1114.2,859.6 L1118.4,862.4 L1122.7,865.1 L1127.0,867.6 L1131.2,870.1 L1135.5,872.3 L1139.9,874.6 L1144.2,876.6 L1148.5,878.8 L1152.7,880.8 L1157.0,882.9 L1161.3,884.9 L1165.6,887.0 L1169.8,889.1 L1174.1,891.3 L1178.5,893.7 L1182.8,896.0 L1187.2,898.3 L1191.7,900.5 L1196.2,902.6 L1200.8,904.5 L1205.4,906.4 L1210.1,908.1 L1214.8,909.6 L1219.5,911.1 L1224.3,912.4 L1229.1,913.6 L1233.9,914.6 L1238.8,915.6 L1243.6,916.4 L1248.5,917.0 L1253.4,917.6 M1129.4,341.6 L1160.1,326.4 M1124.8,341.6 L1155.5,326.3 M1120.2,341.5 L1151.0,326.2 M1115.7,341.5 L1146.4,326.1 M1111.1,341.4 L1141.9,326.0 L1164.7,326.4" fill="none" stroke="#7cc0f4" stroke-width="1" stroke-linejoin="round"/>
<path d="M916.3,704.6 L921.7,716.5 L927.4,728.2 L933.4,739.5 L939.7,750.5 L946.3,761.1 L953.2,771.4 L960.3,781.0 L967.4,789.2 L974.6,797.0 L982.0,804.4 L989.5,811.5 L997.0,818.2 L1004.6,824.5 L1012.5,830.5 L1020.4,836.1 L1028.3,841.4 L1036.4,846.3 L1044.4,850.8 L1052.4,855.0 L1060.4,858.8 L1068.4,862.3 L1076.3,865.5 L1084.3,868.3 L1092.1,870.8 L1099.8,873.0 L1107.5,875.0 L1115.0,876.6 L1122.4,878.0 L1129.7,879.1 L1136.8,879.9 L1144.1,881.4 L1151.1,882.8 L1157.9,884.0 L1164.5,884.9 L1171.0,885.6 L1177.3,886.0 L1183.4,886.4 L1189.4,886.4 L1195.2,886.3 L1200.9,886.0 L1206.4,885.5 L1211.8,884.9 L1217.1,884.1 L1222.2,883.1 L1227.1,882.1 L1231.9,881.0 L1236.6,879.8 L1241.1,878.4 L1245.5,876.9 L1249.8,875.5 L1253.9,873.9 L1257.9,872.3 L1261.8,870.6 L1265.6,868.9 L1269.2,867.1 L1272.8,865.3 L1276.2,863.4 L1279.5,861.6 L1282.7,859.6 L1285.8,857.7 L1288.9,855.7 L1291.8,853.8 L1294.7,851.8 L1297.4,849.8 L1300.1,847.7 L1302.7,845.6 L1305.3,843.5 L1307.7,841.3 L1310.0,839.1 L1312.3,836.9 L1314.5,834.6 L1316.6,832.3 L1318.6,830.0 L1320.6,827.7 L1322.5,825.3 L1324.2,822.9 L1325.9,820.5 L1327.6,818.1 L1329.1,815.6 L1330.5,813.1 L1331.9,810.6 L1333.2,808.0 L1334.4,805.5 L1335.5,802.9 L1336.5,800.4 L1337.5,797.9 L1338.4,795.3 L1339.2,792.8 L1340.1,790.3 L1340.8,787.8 L1341.6,785.4 L1342.2,783.0 L1342.9,780.7 L1343.6,778.4 L1344.3,776.1 L1345.1,773.9 L1345.9,771.8 L1346.9,769.8 L1348.0,767.8 L1349.0,765.9 M912.0,704.7 L917.0,716.4 L922.3,727.9 L927.9,739.1 L933.8,749.9 L940.0,760.5 L946.4,770.7 L953.0,780.3 L959.7,788.6 L966.6,796.7 L973.6,804.4 L980.6,811.8 L987.7,818.8 L995.0,825.5 L1002.4,831.8 L1009.9,837.8 L1017.5,843.5 L1025.1,848.8 L1032.8,853.8 L1040.4,858.5 L1048.0,862.9 L1055.7,866.9 L1063.3,870.7 L1071.0,874.1 L1078.5,877.2 L1086.0,880.1 L1093.4,882.6 L1100.8,884.9 L1108.1,887.0 L1115.3,888.8 L1122.4,890.3 L1129.7,892.3 L1136.7,894.3 L1143.6,895.9 L1150.3,897.4 L1156.9,898.6 L1163.3,899.5 L1169.6,900.4 L1175.8,901.0 L1181.9,901.4 L1187.9,901.6 L1193.8,901.6 L1199.5,901.5 L1205.2,901.1 L1210.7,900.7 L1216.0,900.1 L1221.3,899.4 L1226.4,898.6 L1231.5,897.6 L1236.4,896.5 L1241.2,895.3 L1245.8,894.0 L1250.4,892.7 L1254.9,891.3 L1259.2,889.7 L1263.5,888.1 L1267.6,886.4 L1271.6,884.6 L1275.5,882.8 L1279.3,880.9 L1282.9,879.0 L1286.4,877.0 L1289.9,874.9 L1293.2,872.8 L1296.5,870.7 L1299.6,868.5 L1302.7,866.2 L1305.6,863.9 L1308.5,861.5 L1311.2,859.1 L1313.8,856.6 L1316.3,854.1 L1318.8,851.6 L1321.2,849.0 L1323.5,846.4 L1325.7,843.8 L1327.8,841.2 L1329.9,838.6 L1331.9,835.9 L1333.9,833.2 L1335.7,830.6 L1337.6,827.9 L1339.3,825.2 L1341.0,822.6 L1342.7,820.0 L1344.4,817.3 L1346.0,814.7 L1347.5,812.1 L1349.0,809.4 L1350.4,806.8 L1351.8,804.1 L1353.1,801.5 L1354.4,798.9 L1355.6,796.3 L1356.9,793.7 L1358.1,791.1 L1359.4,788.6 L1360.6,786.1 L1362.0,783.6 L1363.5,781.3 L1364.9,778.9 M907.7,704.8 L912.3,716.3 L917.2,727.6 L922.4,738.7 L927.9,749.4 L933.6,759.8 L939.6,769.9 L945.8,779.5 L952.1,788.1 L958.6,796.4 L965.1,804.4 L971.7,812.0 L978.5,819.4 L985.3,826.4 L992.3,833.2 L999.4,839.6 L1006.6,845.7 L1013.8,851.4 L1021.1,856.9 L1028.4,862.1 L1035.7,867.0 L1043.0,871.6 L1050.3,875.9 L1057.6,879.9 L1064.9,883.6 L1072.2,887.1 L1079.4,890.3 L1086.6,893.3 L1093.8,896.0 L1101.0,898.5 L1108.1,900.7 L1115.3,903.2 L1122.3,905.7 L1129.2,907.9 L1136.0,909.8 L1142.8,911.5 L1149.4,913.0 L1155.9,914.4 L1162.3,915.5 L1168.7,916.5 L1175.0,917.2 L1181.2,917.7 L1187.2,918.1 L1193.2,918.2 L1199.1,918.2 L1204.9,918.1 L1210.7,917.8 L1216.3,917.4 L1221.8,916.8 L1227.2,916.0 L1232.5,915.2 L1237.8,914.2 L1242.9,913.1 L1247.9,911.9 L1252.9,910.6 L1257.7,909.1 L1262.4,907.5 L1267.1,905.9 L1271.6,904.1 L1275.9,902.2 L1280.0,900.3 L1284.0,898.2 L1288.0,896.1 L1291.8,893.9 L1295.5,891.6 L1299.1,889.3 L1302.6,886.8 L1306.0,884.3 L1309.2,881.7 L1312.3,879.1 L1315.3,876.4 L1318.2,873.6 L1321.0,870.8 L1323.7,868.0 L1326.3,865.2 L1328.9,862.3 L1331.4,859.4 L1333.9,856.6 L1336.3,853.7 L1338.6,850.9 L1340.9,848.0 L1343.2,845.2 L1345.5,842.4 L1347.7,839.6 L1350.0,837.0 L1352.3,834.3 L1354.5,831.6 L1356.6,828.8 L1358.7,826.1 L1360.8,823.3 L1362.7,820.5 L1364.6,817.6 L1366.5,814.8 L1368.3,811.9 L1370.1,809.0 L1371.9,806.1 L1373.7,803.3 L1375.4,800.4 L1377.2,797.5 L1379.0,794.7 L1380.8,791.8 M903.4,704.9 L907.6,716.2 L912.1,727.4 L916.9,738.2 L922.0,748.8 L927.3,759.1 L932.9,769.1 L938.6,778.7 L944.5,787.6 L950.5,796.1 L956.6,804.4 L962.9,812.3 L969.2,820.0 L975.7,827.4 L982.2,834.5 L988.9,841.3 L995.7,847.8 L1002.6,854.0 L1009.5,860.0 L1016.4,865.6 L1023.3,871.0 L1030.3,876.2 L1037.3,881.1 L1044.3,885.7 L1051.4,890.0 L1058.4,894.1 L1065.4,898.0 L1072.4,901.6 L1079.5,905.0 L1086.6,908.2 L1093.7,911.1 L1100.9,914.2 L1107.9,917.1 L1114.9,919.8 L1121.8,922.3 L1128.7,924.5 L1135.4,926.6 L1142.2,928.4 L1148.8,930.1 L1155.5,931.5 L1162.0,932.8 L1168.5,933.8 L1174.9,934.7 L1181.3,935.3 L1187.6,935.8 L1193.9,936.1 L1200.0,936.2 L1206.1,936.2 L1212.1,936.0 L1218.1,935.6 L1223.9,935.1 L1229.7,934.4 L1235.4,933.5 L1241.0,932.5 L1246.5,931.4 L1251.9,930.1 L1257.3,928.7 L1262.5,927.1 L1267.6,925.4 L1272.5,923.5 L1277.1,921.6 L1281.6,919.4 L1286.0,917.2 L1290.3,914.9 L1294.5,912.5 L1298.6,910.1 L1302.6,907.5 L1306.4,904.7 L1310.0,901.9 L1313.4,899.0 L1316.7,896.1 L1320.0,893.1 L1323.2,890.1 L1326.2,887.0 L1329.2,883.9 L1332.2,880.8 L1335.0,877.7 L1337.9,874.6 L1340.6,871.5 L1343.4,868.5 L1346.2,865.5 L1348.9,862.5 L1351.6,859.6 L1354.4,856.7 L1357.3,854.0 L1360.1,851.2 L1363.0,848.4 L1365.8,845.6 L1368.5,842.7 L1371.1,839.8 L1373.7,836.8 L1376.2,833.7 L1378.6,830.6 L1381.0,827.5 L1383.4,824.4 L1385.6,821.1 L1387.9,817.9 L1390.1,814.7 L1392.3,811.4 L1394.5,808.1 L1396.7,804.8 M899.1,705.0 L902.9,716.2 L907.0,727.1 L911.4,737.8 L916.1,748.3 L921.0,758.4 L926.1,768.4 L931.4,777.9 L936.9,787.0 L942.5,795.8 L948.2,804.4 L954.0,812.6 L959.9,820.6 L966.0,828.4 L972.2,835.8 L978.5,843.0 L984.8,849.9 L991.3,856.6 L997.8,863.0 L1004.4,869.2 L1011.0,875.1 L1017.6,880.8 L1024.3,886.3 L1031.0,891.5 L1037.8,896.4 L1044.6,901.2 L1051.4,905.6 L1058.2,909.9 L1065.2,914.0 L1072.3,917.8 L1079.3,921.5 L1086.4,925.1 L1093.5,928.5 L1100.5,931.7 L1107.5,934.7 L1114.5,937.5 L1121.5,940.1 L1128.4,942.5 L1135.3,944.6 L1142.2,946.6 L1149.1,948.4 L1155.9,949.9 L1162.7,951.3 L1169.4,952.4 L1176.1,953.4 L1182.8,954.1 L1189.4,954.7 L1195.9,955.0 L1202.5,955.2 L1208.9,955.1 L1215.3,954.9 L1221.6,954.5 L1227.9,953.9 L1234.1,953.2 L1240.2,952.2 L1246.2,951.1 L1252.1,949.8 L1258.0,948.3 L1263.7,946.7 L1269.1,944.9 L1274.2,942.8 L1279.2,940.7 L1284.1,938.4 L1288.9,936.0 L1293.5,933.5 L1298.1,930.8 L1302.5,928.1 L1306.8,925.2 L1310.7,922.1 L1314.5,919.0 L1318.2,915.8 L1321.8,912.6 L1325.3,909.3 L1328.8,906.0 L1332.1,902.7 L1335.4,899.3 L1338.6,895.9 L1341.9,892.7 L1345.0,889.3 L1348.2,886.1 L1351.4,882.9 L1354.6,879.8 L1357.8,876.7 L1361.1,873.8 L1364.6,871.0 L1368.0,868.1 L1371.5,865.3 L1374.9,862.3 L1378.2,859.3 L1381.5,856.3 L1384.6,853.1 L1387.7,849.8 L1390.8,846.5 L1393.7,843.1 L1396.6,839.7 L1399.4,836.2 L1402.2,832.6 L1404.8,829.0 L1407.5,825.3 L1410.1,821.6 L1412.5,817.8 M894.7,705.1 L898.2,716.1 L901.9,726.8 L905.9,737.4 L910.2,747.7 L914.6,757.8 L919.3,767.6 L924.2,777.2 L929.3,786.5 L934.5,795.6 L939.7,804.4 L945.1,812.9 L950.7,821.3 L956.4,829.3 L962.1,837.2 L968.0,844.7 L973.9,852.1 L980.0,859.2 L986.1,866.1 L992.4,872.7 L998.6,879.2 L1004.9,885.4 L1011.2,891.5 L1017.7,897.3 L1024.2,902.8 L1030.8,908.2 L1037.4,913.3 L1044.0,918.3 L1050.9,923.0 L1057.9,927.5 L1065.0,931.9 L1072.0,936.0 L1079.1,940.0 L1086.2,943.7 L1093.3,947.2 L1100.4,950.5 L1107.5,953.6 L1114.7,956.5 L1121.8,959.2 L1129.0,961.7 L1136.1,963.9 L1143.2,966.0 L1150.4,967.9 L1157.5,969.5 L1164.6,970.9 L1171.7,972.1 L1178.7,973.1 L1185.8,973.9 L1192.8,974.4 L1199.8,974.7 L1206.7,974.8 L1213.6,974.7 L1220.4,974.3 L1227.1,973.8 L1233.8,973.1 L1240.4,972.1 L1247.0,970.9 L1253.4,969.5 L1259.8,968.0 L1265.7,966.2 L1271.3,964.1 L1276.8,961.9 L1282.2,959.5 L1287.4,957.0 L1292.6,954.4 L1297.6,951.6 L1302.5,948.7 L1307.2,945.6 L1311.5,942.3 L1315.6,939.0 L1319.7,935.6 L1323.7,932.1 L1327.5,928.6 L1331.3,925.0 L1335.0,921.4 L1338.7,917.8 L1342.2,914.2 L1345.8,910.7 L1349.4,907.1 L1353.0,903.8 L1356.6,900.4 L1360.2,897.1 L1364.0,893.9 L1367.8,890.8 L1371.9,888.0 L1375.9,885.1 L1380.0,882.1 L1384.0,879.1 L1387.9,876.0 L1391.8,872.7 L1395.6,869.4 L1399.3,865.9 L1402.9,862.4 L1406.4,858.8 L1409.8,855.0 L1413.2,851.2 L1416.4,847.3 L1419.6,843.3 L1422.6,839.2 L1425.6,835.0 L1428.4,830.8 M919.0,668.8 L923.5,680.7 L928.3,692.3 L933.4,703.7 L938.7,714.7 L944.4,725.3 L950.3,735.7 L956.5,745.7 L963.0,755.4 L969.7,764.8 L976.5,773.8 L983.5,782.5 L990.7,790.8 L998.1,798.7 L1005.7,806.3 L1013.4,813.5 L1021.3,820.3 L1029.4,826.8 L1037.5,832.8 L1045.6,838.6 L1053.8,843.9 L1062.1,848.9 L1070.4,853.5 L1078.7,857.8 L1087.0,861.8 L1095.2,865.3 L1103.5,868.6 L1111.6,871.6 L1119.8,874.2 L1127.8,876.5 L1135.8,878.6 L1143.2,880.3 L1150.2,881.8 L1157.0,882.9 L1163.6,883.9 L1170.0,884.6 L1176.3,885.0 L1182.3,885.4 L1188.3,885.5 L1194.1,885.5 L1199.8,885.2 L1205.3,884.7 L1210.7,884.1 L1215.9,883.3 L1221.0,882.4 L1225.9,881.5 L1230.7,880.3 L1235.4,879.1 L1239.9,877.8 L1244.3,876.4 L1248.5,875.0 L1252.6,873.4 L1256.6,871.9 L1260.5,870.2 L1264.3,868.5 L1267.9,866.8 L1271.4,865.0 L1274.9,863.2 L1278.2,861.4 L1281.4,859.5 L1284.6,857.6 L1287.6,855.6 L1290.6,853.7 L1293.5,851.8 L1296.3,849.8 L1299.0,847.8 L1301.6,845.7 L1304.1,843.6 L1306.6,841.5 L1308.9,839.3 L1311.2,837.1 L1313.5,834.9 L1315.6,832.6 L1317.6,830.3 L1319.6,828.0 L1321.5,825.6 L1323.3,823.3 L1325.0,820.9 L1326.7,818.5 L1328.2,816.0 L1329.7,813.5 L1331.1,811.0 L1332.3,808.5 L1333.6,806.0 L1334.7,803.4 L1335.8,800.9 L1336.8,798.4 L1337.7,795.8 L1338.6,793.4 L1339.4,790.9 L1340.2,788.4 L1340.9,786.0 L1341.6,783.6 L1342.4,781.3 L1343.1,779.0 L1343.8,776.7 L1344.6,774.6 L1345.4,772.4 L1346.4,770.4 L1347.5,768.5 L1348.6,766.5 M914.7,668.9 L918.8,680.6 L923.2,692.1 L927.9,703.2 L932.9,714.1 L938.1,724.7 L943.6,734.9 L949.4,745.0 L955.4,754.9 L961.7,764.5 L968.1,773.8 L974.7,782.8 L981.5,791.4 L988.4,799.7 L995.6,807.6 L1002.9,815.2 L1010.4,822.5 L1018.0,829.4 L1025.8,835.9 L1033.5,842.1 L1041.4,848.0 L1049.3,853.6 L1057.3,858.8 L1065.3,863.6 L1073.3,868.2 L1081.4,872.4 L1089.4,876.3 L1097.4,879.9 L1105.5,883.2 L1113.4,886.2 L1121.4,889.0 L1128.8,891.2 L1135.8,893.2 L1142.6,894.9 L1149.3,896.4 L1155.9,897.6 L1162.3,898.6 L1168.6,899.5 L1174.8,900.1 L1180.9,900.5 L1186.8,900.8 L1192.7,900.8 L1198.4,900.7 L1204.0,900.4 L1209.5,900.0 L1214.8,899.5 L1220.1,898.8 L1225.2,898.0 L1230.2,897.0 L1235.1,895.9 L1239.9,894.9 L1244.5,893.6 L1249.1,892.3 L1253.6,890.9 L1257.9,889.4 L1262.1,887.8 L1266.3,886.1 L1270.3,884.4 L1274.2,882.7 L1278.0,880.8 L1281.7,878.9 L1285.2,876.9 L1288.6,874.9 L1292.0,872.8 L1295.3,870.7 L1298.4,868.6 L1301.5,866.3 L1304.5,864.0 L1307.3,861.7 L1310.0,859.3 L1312.7,856.8 L1315.2,854.4 L1317.7,851.9 L1320.1,849.3 L1322.4,846.8 L1324.7,844.2 L1326.8,841.6 L1328.9,838.9 L1331.0,836.3 L1332.9,833.7 L1334.8,831.0 L1336.7,828.4 L1338.4,825.7 L1340.2,823.1 L1341.9,820.5 L1343.6,817.9 L1345.2,815.3 L1346.7,812.7 L1348.2,810.1 L1349.7,807.4 L1351.0,804.8 L1352.4,802.2 L1353.7,799.5 L1355.0,797.0 L1356.3,794.4 L1357.5,791.8 L1358.8,789.3 L1360.1,786.8 L1361.5,784.4 L1363.0,782.0 L1364.4,779.6 M910.4,669.0 L914.1,680.5 L918.1,691.8 L922.4,702.8 L927.0,713.5 L931.8,724.0 L936.9,734.2 L942.3,744.2 L947.9,754.3 L953.7,764.2 L959.7,773.8 L965.8,783.1 L972.2,792.0 L978.7,800.7 L985.5,809.0 L992.4,817.0 L999.5,824.6 L1006.7,832.0 L1014.1,839.0 L1021.5,845.7 L1029.0,852.1 L1036.5,858.2 L1044.2,864.0 L1052.0,869.5 L1059.7,874.6 L1067.5,879.5 L1075.4,884.0 L1083.2,888.3 L1091.1,892.2 L1099.1,896.0 L1107.0,899.4 L1114.4,902.2 L1121.4,904.6 L1128.3,906.8 L1135.0,908.8 L1141.8,910.6 L1148.4,912.1 L1154.8,913.5 L1161.3,914.7 L1167.6,915.6 L1173.8,916.4 L1180.0,916.9 L1186.1,917.3 L1192.1,917.5 L1198.0,917.5 L1203.7,917.5 L1209.4,917.2 L1215.0,916.8 L1220.5,916.2 L1225.9,915.5 L1231.3,914.7 L1236.5,913.7 L1241.6,912.7 L1246.6,911.5 L1251.5,910.2 L1256.4,908.8 L1261.1,907.3 L1265.7,905.6 L1270.3,903.9 L1274.6,902.1 L1278.7,900.2 L1282.8,898.1 L1286.7,896.0 L1290.5,893.9 L1294.2,891.6 L1297.9,889.4 L1301.4,886.9 L1304.8,884.4 L1308.0,881.9 L1311.1,879.2 L1314.1,876.6 L1317.0,873.9 L1319.8,871.1 L1322.6,868.4 L1325.2,865.5 L1327.8,862.7 L1330.3,859.8 L1332.8,857.0 L1335.2,854.2 L1337.6,851.3 L1339.9,848.5 L1342.3,845.7 L1344.5,842.9 L1346.8,840.2 L1349.1,837.6 L1351.4,834.9 L1353.6,832.2 L1355.8,829.5 L1357.9,826.8 L1359.9,824.0 L1361.9,821.2 L1363.9,818.4 L1365.7,815.5 L1367.6,812.7 L1369.4,809.8 L1371.2,806.9 L1373.0,804.1 L1374.7,801.2 L1376.6,798.4 L1378.4,795.6 L1380.2,792.7 M906.0,669.1 L909.4,680.5 L913.0,691.5 L916.9,702.4 L921.1,713.0 L925.5,723.3 L930.2,733.4 L935.1,743.4 L940.3,753.8 L945.7,763.9 L951.2,773.8 L957.0,783.3 L962.9,792.6 L969.1,801.6 L975.4,810.3 L981.9,818.7 L988.6,826.8 L995.4,834.6 L1002.4,842.1 L1009.4,849.3 L1016.6,856.2 L1023.8,862.9 L1031.1,869.2 L1038.6,875.3 L1046.1,881.1 L1053.7,886.5 L1061.3,891.7 L1068.9,896.6 L1076.8,901.3 L1084.7,905.7 L1092.6,909.8 L1099.9,913.1 L1106.9,916.1 L1113.9,918.8 L1120.8,921.3 L1127.6,923.6 L1134.4,925.6 L1141.1,927.5 L1147.7,929.2 L1154.3,930.7 L1160.9,932.0 L1167.4,933.0 L1173.8,933.9 L1180.1,934.6 L1186.4,935.1 L1192.6,935.5 L1198.8,935.6 L1204.9,935.6 L1210.9,935.5 L1216.8,935.1 L1222.6,934.6 L1228.4,933.9 L1234.1,933.1 L1239.7,932.2 L1245.2,931.1 L1250.6,929.8 L1255.9,928.4 L1261.2,926.9 L1266.3,925.2 L1271.2,923.4 L1275.8,921.5 L1280.3,919.4 L1284.7,917.2 L1289.0,914.9 L1293.2,912.6 L1297.3,910.1 L1301.3,907.6 L1305.2,904.9 L1308.7,902.1 L1312.2,899.2 L1315.5,896.3 L1318.8,893.4 L1322.0,890.4 L1325.0,887.4 L1328.0,884.3 L1331.0,881.2 L1333.9,878.1 L1336.7,875.1 L1339.5,872.0 L1342.3,869.0 L1345.1,866.0 L1347.8,863.1 L1350.6,860.2 L1353.4,857.3 L1356.3,854.6 L1359.2,851.9 L1362.0,849.1 L1364.8,846.3 L1367.5,843.5 L1370.2,840.5 L1372.8,837.6 L1375.3,834.5 L1377.8,831.5 L1380.2,828.4 L1382.6,825.2 L1384.9,822.0 L1387.2,818.8 L1389.4,815.6 L1391.6,812.4 L1393.9,809.1 L1396.0,805.8 M901.7,669.2 L904.7,680.4 L907.9,691.3 L911.4,702.0 L915.2,712.4 L919.2,722.6 L923.5,732.6 L928.0,742.6 L932.7,753.3 L937.7,763.6 L942.8,773.8 L948.1,783.6 L953.7,793.2 L959.4,802.6 L965.3,811.6 L971.4,820.4 L977.7,829.0 L984.1,837.2 L990.7,845.2 L997.4,852.9 L1004.1,860.3 L1011.0,867.5 L1018.1,874.5 L1025.2,881.1 L1032.5,887.5 L1039.8,893.6 L1047.2,899.4 L1054.7,905.0 L1062.5,910.3 L1070.3,915.4 L1078.3,920.2 L1085.5,924.0 L1092.5,927.5 L1099.5,930.7 L1106.5,933.8 L1113.5,936.5 L1120.4,939.2 L1127.3,941.6 L1134.2,943.8 L1141.1,945.8 L1147.9,947.6 L1154.7,949.1 L1161.5,950.5 L1168.2,951.7 L1174.9,952.7 L1181.5,953.5 L1188.1,954.1 L1194.7,954.5 L1201.2,954.7 L1207.6,954.6 L1214.0,954.5 L1220.3,954.1 L1226.6,953.5 L1232.7,952.8 L1238.8,951.9 L1244.8,950.8 L1250.8,949.5 L1256.6,948.1 L1262.4,946.5 L1267.8,944.7 L1272.9,942.7 L1277.9,940.6 L1282.8,938.4 L1287.5,936.0 L1292.2,933.5 L1296.8,930.9 L1301.2,928.2 L1305.5,925.3 L1309.4,922.3 L1313.2,919.2 L1316.9,916.1 L1320.6,912.9 L1324.1,909.7 L1327.5,906.4 L1330.9,903.1 L1334.2,899.8 L1337.4,896.4 L1340.7,893.2 L1343.8,889.9 L1347.0,886.7 L1350.2,883.5 L1353.4,880.4 L1356.7,877.4 L1360.0,874.4 L1363.5,871.7 L1367.0,868.8 L1370.5,866.0 L1373.9,863.1 L1377.2,860.2 L1380.5,857.1 L1383.7,853.9 L1386.8,850.7 L1389.8,847.4 L1392.8,844.1 L1395.7,840.6 L1398.6,837.1 L1401.4,833.6 L1404.1,830.0 L1406.7,826.3 L1409.3,822.6 L1411.8,818.9 M897.4,669.3 L900.0,680.3 L902.8,691.0 L906.0,701.5 L909.3,711.9 L912.9,722.0 L916.8,731.8 L920.8,741.8 L925.2,752.7 L929.7,763.4 L934.4,773.8 L939.3,783.9 L944.4,793.9 L949.8,803.5 L955.2,813.0 L960.9,822.2 L966.8,831.1 L972.8,839.8 L979.0,848.2 L985.3,856.4 L991.7,864.4 L998.3,872.2 L1005.0,879.7 L1011.8,886.9 L1018.8,893.9 L1025.9,900.7 L1033.2,907.1 L1040.5,913.4 L1048.2,919.3 L1056.0,925.1 L1063.9,930.6 L1071.1,935.0 L1078.1,939.0 L1085.2,942.7 L1092.3,946.2 L1099.4,949.5 L1106.5,952.7 L1113.6,955.6 L1120.7,958.4 L1127.8,960.9 L1135.0,963.2 L1142.1,965.2 L1149.2,967.1 L1156.3,968.8 L1163.4,970.3 L1170.5,971.5 L1177.5,972.5 L1184.5,973.3 L1191.5,973.9 L1198.5,974.2 L1205.4,974.3 L1212.3,974.3 L1219.1,974.0 L1225.8,973.5 L1232.5,972.8 L1239.1,971.8 L1245.6,970.7 L1252.1,969.3 L1258.4,967.8 L1264.4,966.0 L1270.0,964.0 L1275.4,961.9 L1280.8,959.5 L1286.1,957.0 L1291.2,954.4 L1296.2,951.7 L1301.1,948.8 L1305.8,945.7 L1310.1,942.5 L1314.3,939.2 L1318.4,935.9 L1322.3,932.4 L1326.2,928.9 L1330.0,925.4 L1333.7,921.8 L1337.4,918.3 L1340.9,914.7 L1344.6,911.2 L1348.1,907.7 L1351.7,904.4 L1355.3,901.0 L1359.0,897.8 L1362.8,894.6 L1366.6,891.6 L1370.7,888.7 L1374.8,885.8 L1378.9,883.0 L1382.9,880.0 L1386.9,876.8 L1390.7,873.6 L1394.5,870.3 L1398.3,866.9 L1401.9,863.4 L1405.4,859.8 L1408.9,856.1 L1412.3,852.3 L1415.5,848.4 L1418.7,844.4 L1421.8,840.3 L1424.8,836.2 L1427.6,832.0 M912.0,704.7 L914.7,668.9 M907.7,704.8 L910.4,669.0 M903.4,704.9 L906.0,669.1 M899.1,705.0 L901.7,669.2 M894.7,705.1 L897.4,669.3 L919.0,668.8" fill="none" stroke="#7cc0f4" stroke-width="1" stroke-linejoin="round"/>
<path d="M1104.5,1082.4 L1117.0,1083.5 L1129.4,1084.1 L1141.7,1084.3 L1153.9,1084.1 L1165.9,1083.5 L1177.8,1082.4 L1189.3,1080.8 L1199.5,1078.4 L1209.5,1075.7 L1219.3,1072.7 L1228.9,1069.5 L1238.2,1066.0 L1247.2,1062.2 L1256.1,1058.1 L1264.7,1053.7 L1273.0,1049.1 L1281.0,1044.2 L1288.8,1039.2 L1296.2,1034.0 L1303.4,1028.7 L1310.3,1023.2 L1316.9,1017.5 L1323.2,1011.7 L1329.2,1005.9 L1334.9,999.9 L1340.3,993.9 L1345.4,987.9 L1350.3,981.8 L1354.8,975.8 L1359.1,969.7 L1363.8,963.4 L1368.2,957.0 L1372.2,950.6 L1375.9,944.2 L1379.2,937.7 L1382.3,931.3 L1385.3,925.0 L1387.9,918.7 L1390.3,912.4 L1392.5,906.2 L1394.4,899.9 L1396.2,893.8 L1397.8,887.7 L1399.1,881.7 L1400.4,875.8 L1401.5,870.0 L1402.4,864.3 L1403.2,858.7 L1403.8,853.1 L1404.5,847.8 L1404.9,842.4 L1405.2,837.3 L1405.5,832.2 L1405.6,827.1 L1405.7,822.3 L1405.6,817.4 L1405.5,812.8 L1405.4,808.2 L1405.1,803.7 L1404.9,799.3 L1404.5,795.0 L1404.1,790.8 L1403.7,786.7 L1403.2,782.6 L1402.7,778.7 L1402.0,774.8 L1401.3,770.9 L1400.6,767.1 L1399.7,763.4 L1398.8,759.8 L1397.9,756.3 L1396.9,752.8 L1395.8,749.3 L1394.7,746.0 L1393.5,742.7 L1392.2,739.5 L1390.9,736.3 L1389.6,733.2 L1388.1,730.2 L1386.6,727.2 L1385.1,724.4 L1383.4,721.6 L1381.8,718.8 L1380.1,716.2 L1378.3,713.6 L1376.6,711.1 L1374.8,708.6 L1373.0,706.2 L1371.2,703.9 L1369.4,701.7 L1367.7,699.5 L1365.9,697.4 L1364.2,695.3 L1362.6,693.3 L1360.9,691.3 L1359.5,689.3 L1358.1,687.3 L1356.9,685.4 L1355.8,683.3 L1354.7,681.3 M1100.4,1082.3 L1112.5,1083.6 L1124.6,1084.4 L1136.5,1084.9 L1148.3,1084.9 L1160.0,1084.5 L1171.6,1083.6 L1182.8,1082.3 L1193.0,1080.4 L1203.0,1078.1 L1212.7,1075.5 L1222.3,1072.7 L1231.6,1069.6 L1240.7,1066.3 L1249.6,1062.6 L1258.3,1058.7 L1266.7,1054.6 L1274.8,1050.2 L1282.7,1045.6 L1290.4,1040.9 L1297.8,1036.1 L1304.9,1031.1 L1311.8,1025.9 L1318.4,1020.6 L1324.7,1015.2 L1330.8,1009.8 L1336.6,1004.2 L1342.2,998.6 L1347.5,992.9 L1352.6,987.2 L1357.5,981.5 L1362.6,975.6 L1367.4,969.6 L1371.9,963.5 L1376.2,957.4 L1380.1,951.3 L1383.8,945.2 L1387.4,939.1 L1390.6,933.0 L1393.7,927.0 L1396.5,920.9 L1399.1,914.8 L1401.6,908.8 L1403.8,902.7 L1405.8,896.8 L1407.8,890.9 L1409.5,885.0 L1411.1,879.3 L1412.5,873.6 L1413.7,867.9 L1414.9,862.3 L1415.9,856.8 L1416.8,851.3 L1417.6,846.0 L1418.3,840.6 L1418.9,835.4 L1419.3,830.3 L1419.6,825.2 L1419.9,820.2 L1419.9,815.3 L1419.9,810.4 L1419.8,805.6 L1419.6,800.9 L1419.3,796.3 L1418.9,791.8 L1418.5,787.3 L1418.0,782.8 L1417.3,778.5 L1416.5,774.2 L1415.6,769.9 L1414.7,765.8 L1413.7,761.7 L1412.6,757.7 L1411.5,753.7 L1410.3,749.8 L1409.1,746.0 L1407.8,742.3 L1406.5,738.6 L1405.1,735.0 L1403.7,731.5 L1402.3,728.1 L1400.9,724.7 L1399.4,721.4 L1397.9,718.2 L1396.5,715.0 L1395.0,711.9 L1393.6,708.8 L1392.0,705.9 L1390.5,702.9 L1388.9,700.0 L1387.3,697.2 L1385.7,694.5 L1384.1,691.7 L1382.5,689.1 L1380.9,686.4 L1379.3,683.9 L1377.9,681.3 L1376.4,678.7 L1375.0,676.2 L1373.8,673.6 L1372.5,671.1 M1096.3,1082.3 L1108.1,1083.7 L1119.7,1084.7 L1131.3,1085.4 L1142.8,1085.6 L1154.1,1085.4 L1165.4,1084.9 L1176.3,1083.9 L1186.4,1082.3 L1196.4,1080.4 L1206.1,1078.3 L1215.7,1075.9 L1225.0,1073.2 L1234.2,1070.3 L1243.1,1067.1 L1251.8,1063.7 L1260.4,1060.0 L1268.7,1056.1 L1276.7,1052.1 L1284.6,1047.9 L1292.2,1043.5 L1299.5,1039.0 L1306.7,1034.3 L1313.6,1029.5 L1320.3,1024.6 L1326.7,1019.6 L1332.9,1014.5 L1338.9,1009.3 L1344.7,1004.0 L1350.4,998.7 L1355.8,993.4 L1361.4,987.8 L1366.7,982.2 L1371.7,976.5 L1376.5,970.7 L1381.0,964.9 L1385.3,959.0 L1389.5,953.3 L1393.4,947.4 L1397.1,941.5 L1400.5,935.6 L1403.8,929.6 L1406.9,923.7 L1409.8,917.8 L1412.5,911.8 L1415.1,906.0 L1417.5,900.1 L1419.7,894.3 L1421.7,888.4 L1423.6,882.6 L1425.4,876.8 L1427.0,871.1 L1428.4,865.4 L1429.8,859.8 L1430.9,854.2 L1432.0,848.6 L1432.9,843.1 L1433.7,837.6 L1434.3,832.2 L1434.7,826.9 L1435.0,821.6 L1435.0,816.3 L1435.0,811.1 L1434.9,806.0 L1434.7,800.9 L1434.3,795.9 L1433.9,790.9 L1433.3,786.0 L1432.5,781.2 L1431.5,776.4 L1430.6,771.7 L1429.5,767.1 L1428.4,762.6 L1427.2,758.1 L1426.0,753.7 L1424.7,749.4 L1423.3,745.1 L1422.0,741.0 L1420.7,736.9 L1419.4,732.9 L1418.0,728.9 L1416.7,725.1 L1415.3,721.3 L1414.1,717.5 L1412.9,713.8 L1411.7,710.2 L1410.5,706.6 L1409.3,703.1 L1408.0,699.6 L1406.6,696.2 L1405.2,692.8 L1403.8,689.4 L1402.3,686.1 L1400.8,682.8 L1399.3,679.6 L1397.7,676.4 L1396.2,673.3 L1394.7,670.2 L1393.2,667.0 L1391.8,663.9 L1390.3,660.8 M1092.3,1082.3 L1103.6,1083.8 L1114.9,1085.1 L1126.1,1085.9 L1137.2,1086.3 L1148.2,1086.4 L1159.1,1086.1 L1169.8,1085.4 L1179.9,1084.2 L1189.8,1082.8 L1199.5,1081.0 L1209.1,1079.1 L1218.4,1076.8 L1227.6,1074.3 L1236.6,1071.6 L1245.4,1068.6 L1254.0,1065.5 L1262.5,1062.1 L1270.7,1058.5 L1278.7,1054.8 L1286.5,1050.9 L1294.2,1046.9 L1301.6,1042.7 L1308.8,1038.4 L1315.8,1034.0 L1322.6,1029.4 L1329.2,1024.7 L1335.6,1020.0 L1342.0,1015.1 L1348.1,1010.2 L1354.1,1005.2 L1360.1,1000.0 L1365.9,994.8 L1371.5,989.4 L1376.8,984.0 L1381.9,978.5 L1386.8,972.9 L1391.6,967.4 L1396.1,961.7 L1400.4,956.0 L1404.6,950.3 L1408.5,944.5 L1412.2,938.7 L1415.8,932.8 L1419.2,926.9 L1422.4,921.1 L1425.4,915.1 L1428.3,909.2 L1431.0,903.3 L1433.5,897.3 L1435.9,891.4 L1438.0,885.4 L1440.1,879.5 L1441.9,873.6 L1443.6,867.7 L1445.2,861.8 L1446.5,855.9 L1447.7,850.1 L1448.8,844.3 L1449.5,838.4 L1450.0,832.7 L1450.3,826.9 L1450.4,821.2 L1450.4,815.6 L1450.4,810.0 L1450.2,804.5 L1449.8,799.0 L1449.2,793.6 L1448.4,788.2 L1447.4,782.9 L1446.4,777.7 L1445.3,772.5 L1444.1,767.5 L1442.9,762.5 L1441.6,757.5 L1440.3,752.7 L1438.9,748.0 L1437.6,743.3 L1436.2,738.7 L1435.0,734.2 L1433.7,729.8 L1432.5,725.4 L1431.3,721.1 L1430.2,716.9 L1429.4,712.7 L1428.4,708.5 L1427.5,704.4 L1426.5,700.3 L1425.5,696.3 L1424.3,692.3 L1423.1,688.3 L1421.8,684.4 L1420.5,680.5 L1419.1,676.6 L1417.6,672.8 L1416.1,669.0 L1414.6,665.3 L1413.0,661.6 L1411.4,657.9 L1409.8,654.2 L1408.1,650.6 M1088.2,1082.2 L1099.2,1084.0 L1110.1,1085.4 L1120.9,1086.4 L1131.7,1087.0 L1142.3,1087.4 L1152.9,1087.3 L1163.3,1086.9 L1173.4,1086.2 L1183.3,1085.1 L1192.9,1083.8 L1202.5,1082.3 L1211.8,1080.5 L1221.1,1078.4 L1230.1,1076.1 L1239.0,1073.6 L1247.7,1070.9 L1256.3,1068.0 L1264.7,1064.9 L1272.9,1061.7 L1280.9,1058.3 L1288.8,1054.8 L1296.5,1051.2 L1304.0,1047.3 L1311.4,1043.3 L1318.5,1039.2 L1325.5,1035.0 L1332.4,1030.7 L1339.2,1026.2 L1345.9,1021.7 L1352.4,1017.0 L1358.9,1012.3 L1365.1,1007.4 L1371.2,1002.4 L1377.1,997.3 L1382.8,992.1 L1388.3,986.8 L1393.7,981.5 L1398.8,976.1 L1403.8,970.6 L1408.6,965.0 L1413.2,959.3 L1417.6,953.6 L1421.8,947.9 L1425.9,942.0 L1429.8,936.1 L1433.4,930.2 L1436.9,924.2 L1440.3,918.1 L1443.4,912.0 L1446.3,905.9 L1449.1,899.7 L1451.7,893.6 L1454.1,887.4 L1456.3,881.2 L1458.3,875.0 L1460.1,868.7 L1461.8,862.5 L1463.3,856.3 L1464.3,850.0 L1465.0,843.8 L1465.5,837.6 L1465.8,831.4 L1466.0,825.2 L1466.1,819.2 L1466.0,813.1 L1465.7,807.1 L1465.2,801.2 L1464.4,795.3 L1463.4,789.4 L1462.3,783.6 L1461.2,778.0 L1459.9,772.4 L1458.6,766.8 L1457.2,761.4 L1455.9,756.1 L1454.4,750.8 L1453.2,745.6 L1451.8,740.5 L1450.6,735.6 L1449.4,730.6 L1448.3,725.8 L1447.3,721.0 L1446.4,716.2 L1445.8,711.5 L1445.1,706.9 L1444.5,702.2 L1443.8,697.6 L1443.0,693.0 L1442.0,688.4 L1441.0,683.8 L1439.9,679.3 L1438.6,674.8 L1437.3,670.4 L1435.9,666.0 L1434.4,661.6 L1432.9,657.3 L1431.2,653.0 L1429.5,648.7 L1427.8,644.5 L1425.9,640.3 M1084.2,1082.2 L1094.7,1084.1 L1105.3,1085.7 L1115.7,1086.9 L1126.1,1087.8 L1136.4,1088.3 L1146.7,1088.6 L1156.8,1088.5 L1166.8,1088.1 L1176.7,1087.5 L1186.3,1086.6 L1195.9,1085.4 L1205.2,1084.1 L1214.5,1082.4 L1223.6,1080.6 L1232.6,1078.6 L1241.4,1076.4 L1250.1,1073.9 L1258.6,1071.4 L1267.0,1068.6 L1275.3,1065.7 L1283.4,1062.7 L1291.4,1059.6 L1299.2,1056.2 L1306.9,1052.7 L1314.5,1049.1 L1321.8,1045.3 L1329.1,1041.3 L1336.4,1037.3 L1343.6,1033.2 L1350.7,1028.9 L1357.6,1024.5 L1364.4,1020.0 L1371.0,1015.3 L1377.4,1010.6 L1383.7,1005.7 L1389.8,1000.7 L1395.7,995.6 L1401.5,990.4 L1407.1,985.1 L1412.6,979.7 L1417.8,974.2 L1422.9,968.6 L1427.8,962.9 L1432.5,957.1 L1437.1,951.2 L1441.4,945.2 L1445.6,939.1 L1449.5,933.0 L1453.3,926.7 L1456.8,920.4 L1460.1,914.1 L1463.3,907.6 L1466.2,901.2 L1469.0,894.7 L1471.5,888.1 L1473.8,881.5 L1475.8,874.9 L1477.7,868.3 L1479.1,861.6 L1480.0,854.9 L1480.7,848.2 L1481.3,841.5 L1481.6,834.9 L1481.8,828.3 L1481.8,821.7 L1481.6,815.2 L1481.2,808.7 L1480.3,802.3 L1479.3,795.9 L1478.2,789.6 L1477.0,783.4 L1475.7,777.2 L1474.3,771.2 L1472.9,765.2 L1471.5,759.4 L1470.0,753.6 L1468.7,748.0 L1467.4,742.4 L1466.2,736.9 L1465.0,731.5 L1464.1,726.1 L1463.2,720.8 L1462.5,715.6 L1462.2,710.4 L1461.8,705.2 L1461.5,700.0 L1461.0,694.8 L1460.4,689.6 L1459.7,684.5 L1458.9,679.4 L1457.9,674.3 L1456.8,669.2 L1455.6,664.2 L1454.3,659.2 L1452.8,654.2 L1451.2,649.3 L1449.5,644.4 L1447.7,639.6 L1445.8,634.8 L1443.7,630.0 M1076.5,1061.9 L1088.5,1063.8 L1100.5,1065.3 L1112.3,1066.4 L1124.0,1067.0 L1135.6,1067.2 L1147.1,1067.0 L1158.5,1066.4 L1169.6,1065.4 L1180.7,1064.0 L1191.5,1062.3 L1202.1,1060.3 L1212.6,1057.9 L1222.8,1055.2 L1232.8,1052.1 L1242.6,1048.7 L1252.2,1044.9 L1261.5,1040.8 L1270.6,1036.5 L1279.4,1032.0 L1287.9,1027.2 L1296.1,1022.2 L1304.1,1016.9 L1311.8,1011.5 L1319.2,1005.9 L1326.3,1000.2 L1333.1,994.3 L1339.6,988.4 L1345.9,982.3 L1351.8,976.2 L1357.5,969.9 L1362.5,963.6 L1366.9,957.3 L1370.8,950.9 L1374.5,944.5 L1377.9,938.1 L1381.0,931.7 L1384.0,925.5 L1386.6,919.2 L1389.1,913.0 L1391.3,906.8 L1393.2,900.5 L1395.0,894.5 L1396.6,888.4 L1398.0,882.4 L1399.3,876.6 L1400.3,870.8 L1401.3,865.1 L1402.1,859.5 L1402.8,854.0 L1403.4,848.7 L1403.8,843.4 L1404.2,838.2 L1404.5,833.2 L1404.6,828.1 L1404.8,823.3 L1404.7,818.5 L1404.7,813.8 L1404.6,809.3 L1404.4,804.8 L1404.2,800.4 L1403.8,796.1 L1403.5,791.9 L1403.1,787.8 L1402.7,783.7 L1402.1,779.8 L1401.5,775.8 L1400.8,772.0 L1400.1,768.2 L1399.3,764.5 L1398.5,760.9 L1397.5,757.3 L1396.5,753.8 L1395.5,750.4 L1394.4,747.0 L1393.3,743.7 L1392.1,740.5 L1390.8,737.3 L1389.4,734.2 L1388.0,731.2 L1386.5,728.2 L1385.0,725.4 L1383.4,722.5 L1381.8,719.8 L1380.1,717.1 L1378.4,714.5 L1376.6,712.0 L1374.9,709.5 L1373.1,707.1 L1371.4,704.8 L1369.6,702.5 L1367.9,700.3 L1366.1,698.2 L1364.4,696.1 L1362.8,694.1 L1361.2,692.1 L1359.8,690.1 L1358.3,688.1 L1357.2,686.1 L1356.1,684.1 L1355.1,682.1 M1072.5,1061.9 L1084.1,1064.0 L1095.6,1065.6 L1107.1,1066.8 L1118.5,1067.7 L1129.7,1068.1 L1140.9,1068.2 L1152.0,1067.9 L1163.1,1067.3 L1174.1,1066.4 L1184.9,1065.1 L1195.5,1063.5 L1206.0,1061.6 L1216.2,1059.3 L1226.3,1056.6 L1236.2,1053.7 L1245.9,1050.4 L1255.3,1046.8 L1264.5,1043.0 L1273.5,1038.9 L1282.3,1034.7 L1290.7,1030.2 L1299.0,1025.4 L1307.0,1020.5 L1314.7,1015.4 L1322.2,1010.1 L1329.4,1004.7 L1336.4,999.1 L1343.1,993.4 L1349.6,987.7 L1355.8,981.8 L1361.3,975.9 L1366.1,969.9 L1370.6,963.9 L1374.9,957.8 L1378.8,951.7 L1382.5,945.6 L1386.1,939.6 L1389.4,933.6 L1392.4,927.5 L1395.3,921.5 L1397.9,915.4 L1400.4,909.4 L1402.6,903.4 L1404.7,897.5 L1406.6,891.7 L1408.3,885.8 L1410.0,880.1 L1411.4,874.4 L1412.7,868.7 L1413.9,863.2 L1414.9,857.7 L1415.8,852.3 L1416.7,847.0 L1417.3,841.7 L1417.9,836.5 L1418.4,831.3 L1418.8,826.3 L1419.1,821.3 L1419.2,816.4 L1419.2,811.5 L1419.1,806.8 L1418.9,802.1 L1418.7,797.5 L1418.4,792.9 L1418.0,788.4 L1417.4,784.0 L1416.8,779.6 L1416.1,775.3 L1415.2,771.1 L1414.3,766.9 L1413.3,762.8 L1412.3,758.8 L1411.2,754.8 L1410.0,750.9 L1408.9,747.1 L1407.6,743.4 L1406.3,739.7 L1405.0,736.1 L1403.6,732.6 L1402.2,729.2 L1400.8,725.8 L1399.4,722.5 L1397.9,719.2 L1396.5,716.0 L1395.1,712.9 L1393.6,709.9 L1392.1,706.9 L1390.6,703.9 L1389.1,701.0 L1387.5,698.2 L1385.9,695.4 L1384.3,692.7 L1382.7,690.0 L1381.2,687.4 L1379.6,684.8 L1378.2,682.2 L1376.7,679.6 L1375.4,677.1 L1374.2,674.5 L1372.9,671.9 M1068.4,1061.9 L1079.6,1064.1 L1090.8,1065.9 L1101.9,1067.3 L1112.9,1068.4 L1123.9,1069.1 L1134.7,1069.4 L1145.5,1069.4 L1156.6,1069.2 L1167.6,1068.7 L1178.3,1067.8 L1188.9,1066.6 L1199.4,1065.2 L1209.7,1063.3 L1219.8,1061.2 L1229.8,1058.7 L1239.6,1055.9 L1249.1,1052.8 L1258.5,1049.5 L1267.7,1045.9 L1276.6,1042.1 L1285.4,1038.1 L1293.9,1033.9 L1302.2,1029.4 L1310.3,1024.8 L1318.1,1020.0 L1325.7,1015.0 L1333.1,1009.9 L1340.3,1004.6 L1347.3,999.2 L1354.1,993.7 L1360.0,988.1 L1365.3,982.5 L1370.4,976.8 L1375.2,971.1 L1379.7,965.3 L1384.0,959.5 L1388.2,953.8 L1392.1,947.9 L1395.8,942.1 L1399.3,936.2 L1402.6,930.3 L1405.7,924.4 L1408.6,918.5 L1411.3,912.6 L1413.9,906.8 L1416.3,900.9 L1418.6,895.1 L1420.7,889.3 L1422.5,883.5 L1424.3,877.8 L1425.9,872.0 L1427.5,866.4 L1428.8,860.8 L1430.0,855.2 L1431.1,849.7 L1432.0,844.2 L1432.8,838.7 L1433.5,833.3 L1434.0,828.0 L1434.2,822.7 L1434.3,817.4 L1434.3,812.2 L1434.2,807.1 L1434.0,802.1 L1433.8,797.1 L1433.3,792.1 L1432.8,787.2 L1432.0,782.4 L1431.1,777.6 L1430.2,772.9 L1429.1,768.3 L1428.0,763.7 L1426.9,759.3 L1425.7,754.9 L1424.5,750.6 L1423.1,746.3 L1421.9,742.2 L1420.5,738.1 L1419.2,734.0 L1417.9,730.1 L1416.6,726.2 L1415.3,722.4 L1414.1,718.7 L1413.0,715.0 L1411.8,711.3 L1410.6,707.8 L1409.4,704.2 L1408.1,700.7 L1406.8,697.2 L1405.4,693.8 L1404.0,690.5 L1402.5,687.2 L1401.0,683.9 L1399.5,680.7 L1398.0,677.5 L1396.5,674.3 L1395.0,671.2 L1393.6,668.0 L1392.2,664.9 L1390.8,661.8 M1064.3,1061.9 L1075.2,1064.2 L1086.0,1066.2 L1096.7,1067.8 L1107.4,1069.1 L1118.0,1070.0 L1128.5,1070.5 L1139.1,1070.8 L1150.1,1071.1 L1161.0,1071.0 L1171.7,1070.6 L1182.3,1069.8 L1192.8,1068.8 L1203.1,1067.4 L1213.3,1065.7 L1223.4,1063.7 L1233.2,1061.4 L1242.9,1058.8 L1252.5,1055.9 L1261.8,1052.9 L1271.0,1049.6 L1280.0,1046.1 L1288.8,1042.4 L1297.4,1038.4 L1305.8,1034.3 L1314.0,1029.9 L1322.0,1025.3 L1329.8,1020.6 L1337.6,1015.7 L1345.1,1010.7 L1352.5,1005.5 L1358.8,1000.3 L1364.6,995.1 L1370.1,989.8 L1375.5,984.4 L1380.6,978.9 L1385.5,973.4 L1390.3,967.9 L1394.8,962.3 L1399.2,956.6 L1403.3,950.9 L1407.3,945.1 L1411.0,939.4 L1414.6,933.5 L1418.0,927.7 L1421.3,921.8 L1424.3,915.9 L1427.2,910.1 L1429.9,904.1 L1432.4,898.2 L1434.8,892.3 L1437.0,886.4 L1439.1,880.5 L1441.0,874.6 L1442.7,868.7 L1444.3,862.8 L1445.6,857.0 L1446.9,851.2 L1448.0,845.4 L1448.8,839.6 L1449.2,833.8 L1449.5,828.1 L1449.7,822.4 L1449.8,816.8 L1449.7,811.2 L1449.6,805.7 L1449.2,800.3 L1448.7,794.8 L1447.9,789.5 L1447.0,784.2 L1446.0,778.9 L1445.0,773.8 L1443.8,768.7 L1442.6,763.7 L1441.3,758.8 L1440.0,754.0 L1438.7,749.2 L1437.4,744.6 L1436.1,740.0 L1434.8,735.5 L1433.6,731.0 L1432.4,726.7 L1431.3,722.4 L1430.2,718.1 L1429.4,713.9 L1428.5,709.8 L1427.6,705.6 L1426.6,701.5 L1425.6,697.5 L1424.5,693.5 L1423.3,689.5 L1422.1,685.5 L1420.7,681.6 L1419.3,677.8 L1417.9,674.0 L1416.4,670.2 L1414.9,666.4 L1413.4,662.7 L1411.8,659.0 L1410.3,655.3 L1408.6,651.6 M1060.2,1061.8 L1070.7,1064.4 L1081.2,1066.5 L1091.5,1068.3 L1101.9,1069.8 L1112.1,1070.9 L1122.3,1071.7 L1132.6,1072.3 L1143.6,1073.0 L1154.5,1073.3 L1165.1,1073.3 L1175.7,1073.0 L1186.2,1072.4 L1196.6,1071.4 L1206.8,1070.2 L1216.9,1068.7 L1226.9,1066.9 L1236.8,1064.8 L1246.4,1062.4 L1256.0,1059.9 L1265.4,1057.1 L1274.6,1054.1 L1283.7,1050.9 L1292.6,1047.4 L1301.4,1043.7 L1309.9,1039.8 L1318.3,1035.7 L1326.6,1031.4 L1334.8,1026.9 L1342.9,1022.2 L1350.8,1017.4 L1357.5,1012.6 L1363.8,1007.8 L1369.9,1002.8 L1375.8,997.7 L1381.5,992.5 L1387.0,987.3 L1392.4,982.0 L1397.6,976.7 L1402.5,971.2 L1407.3,965.7 L1411.9,960.0 L1416.4,954.3 L1420.6,948.6 L1424.7,942.8 L1428.6,936.9 L1432.3,931.0 L1435.9,925.0 L1439.2,919.0 L1442.3,912.9 L1445.3,906.8 L1448.1,900.7 L1450.7,894.6 L1453.1,888.4 L1455.4,882.2 L1457.4,876.0 L1459.3,869.8 L1460.9,863.6 L1462.5,857.4 L1463.6,851.2 L1464.3,845.0 L1464.8,838.7 L1465.1,832.6 L1465.4,826.5 L1465.4,820.4 L1465.4,814.4 L1465.1,808.4 L1464.7,802.4 L1463.9,796.5 L1462.9,790.7 L1461.9,784.9 L1460.8,779.3 L1459.5,773.7 L1458.3,768.2 L1456.9,762.7 L1455.6,757.4 L1454.2,752.1 L1453.0,747.0 L1451.6,741.9 L1450.5,736.9 L1449.3,732.0 L1448.2,727.1 L1447.2,722.3 L1446.4,717.6 L1445.8,712.9 L1445.2,708.2 L1444.6,703.5 L1443.9,698.9 L1443.1,694.3 L1442.2,689.7 L1441.2,685.1 L1440.1,680.6 L1438.9,676.1 L1437.7,671.7 L1436.3,667.2 L1434.8,662.9 L1433.3,658.5 L1431.7,654.2 L1430.0,649.9 L1428.3,645.7 L1426.5,641.5 M1056.2,1061.8 L1066.3,1064.5 L1076.3,1066.8 L1086.4,1068.8 L1096.3,1070.5 L1106.2,1071.9 L1116.1,1072.9 L1126.1,1073.8 L1137.1,1074.9 L1147.9,1075.6 L1158.6,1076.1 L1169.1,1076.2 L1179.6,1076.0 L1190.0,1075.5 L1200.3,1074.7 L1210.5,1073.7 L1220.6,1072.4 L1230.6,1070.8 L1240.4,1068.9 L1250.1,1066.8 L1259.7,1064.5 L1269.2,1062.1 L1278.6,1059.4 L1287.8,1056.4 L1296.9,1053.1 L1305.9,1049.7 L1314.7,1046.0 L1323.3,1042.1 L1332.0,1038.0 L1340.6,1033.7 L1349.1,1029.2 L1356.3,1024.8 L1363.1,1020.4 L1369.7,1015.8 L1376.1,1011.0 L1382.4,1006.1 L1388.5,1001.2 L1394.5,996.2 L1400.3,991.0 L1405.9,985.7 L1411.4,980.4 L1416.6,974.9 L1421.7,969.3 L1426.7,963.6 L1431.4,957.9 L1436.0,952.0 L1440.3,946.0 L1444.5,940.0 L1448.5,933.9 L1452.2,927.7 L1455.8,921.4 L1459.1,915.0 L1462.3,908.6 L1465.3,902.2 L1468.0,895.7 L1470.6,889.2 L1472.9,882.6 L1475.0,876.0 L1476.9,869.4 L1478.4,862.8 L1479.3,856.1 L1480.0,849.4 L1480.6,842.8 L1480.9,836.1 L1481.1,829.6 L1481.2,823.0 L1481.0,816.5 L1480.6,810.1 L1479.8,803.6 L1478.8,797.2 L1477.7,791.0 L1476.6,784.8 L1475.3,778.6 L1474.0,772.6 L1472.6,766.6 L1471.2,760.8 L1469.8,755.0 L1468.5,749.4 L1467.2,743.8 L1466.1,738.3 L1464.9,732.9 L1464.0,727.6 L1463.2,722.3 L1462.5,717.0 L1462.3,711.8 L1461.9,706.6 L1461.6,701.4 L1461.2,696.2 L1460.6,691.1 L1459.9,685.9 L1459.1,680.8 L1458.2,675.7 L1457.1,670.6 L1456.0,665.6 L1454.7,660.5 L1453.2,655.6 L1451.7,650.6 L1450.0,645.7 L1448.2,640.9 L1446.3,636.1 L1444.3,631.3 M1100.4,1082.3 L1072.5,1061.9 M1096.3,1082.3 L1068.4,1061.9 M1092.3,1082.3 L1064.3,1061.9 M1088.2,1082.2 L1060.2,1061.8 M1084.2,1082.2 L1056.2,1061.8 L1076.5,1061.9" fill="none" stroke="#7cc0f4" stroke-width="1" stroke-linejoin="round"/>
<path d="M1508.2,1101.3 L1515.4,1090.5 L1522.2,1079.5 L1528.6,1068.4 L1534.6,1057.2 L1540.1,1046.0 L1545.3,1034.6 L1549.7,1023.3 L1552.9,1012.8 L1555.8,1002.3 L1558.3,991.9 L1560.4,981.6 L1562.3,971.4 L1563.8,961.2 L1564.8,951.1 L1565.6,941.1 L1566.0,931.2 L1566.1,921.4 L1565.8,911.8 L1565.4,902.4 L1564.6,893.2 L1563.6,884.1 L1562.3,875.2 L1560.7,866.6 L1558.9,858.2 L1556.9,850.0 L1554.8,842.0 L1552.4,834.3 L1549.9,826.8 L1547.2,819.6 L1544.4,812.7 L1541.4,804.8 L1538.1,796.9 L1534.4,789.2 L1530.6,781.8 L1526.7,774.6 L1522.5,767.6 L1518.5,760.9 L1514.2,754.4 L1509.8,748.1 L1505.4,742.1 L1500.8,736.2 L1496.3,730.6 L1491.6,725.2 L1487.0,720.1 L1482.5,715.1 L1477.8,710.3 L1473.3,705.8 L1468.6,701.4 L1464.0,697.2 L1459.6,693.2 L1455.0,689.4 L1450.7,685.7 L1446.3,682.2 L1441.9,678.8 L1437.6,675.6 L1433.3,672.6 L1429.2,669.7 L1425.1,666.9 L1421.0,664.2 L1417.0,661.7 L1413.0,659.3 L1409.1,657.0 L1405.3,654.8 L1401.5,652.7 L1397.8,650.7 L1394.0,648.8 L1390.3,647.1 L1386.6,645.4 L1382.9,643.9 L1379.3,642.4 L1375.7,641.0 L1372.1,639.8 L1368.6,638.6 L1365.1,637.5 L1361.6,636.5 L1358.1,635.6 L1354.7,634.9 L1351.3,634.2 L1347.9,633.6 L1344.6,633.1 L1341.3,632.7 L1338.0,632.3 L1334.7,632.1 L1331.5,631.9 L1328.3,631.9 L1325.2,631.8 L1322.2,631.9 L1319.2,632.0 L1316.2,632.1 L1313.3,632.3 L1310.5,632.5 L1307.8,632.8 L1305.1,633.0 L1302.5,633.2 L1299.9,633.5 L1297.5,633.6 L1295.1,633.8 L1292.8,633.8 L1290.6,633.7 L1288.4,633.7 M1504.2,1101.0 L1511.3,1090.5 L1518.0,1079.9 L1524.3,1069.1 L1530.3,1058.3 L1535.8,1047.3 L1540.9,1036.3 L1545.5,1025.4 L1549.0,1015.0 L1552.1,1004.7 L1554.9,994.4 L1557.3,984.2 L1559.5,974.0 L1561.3,964.0 L1562.7,953.9 L1563.9,944.0 L1564.7,934.1 L1565.2,924.4 L1565.4,914.8 L1565.4,905.4 L1565.1,896.1 L1564.6,887.0 L1563.8,878.1 L1562.7,869.3 L1561.5,860.8 L1560.0,852.4 L1558.4,844.2 L1556.6,836.3 L1554.6,828.5 L1552.5,821.0 L1550.3,813.7 L1547.9,805.7 L1545.2,797.7 L1542.1,789.9 L1539.0,782.3 L1535.6,774.9 L1532.1,767.6 L1528.6,760.7 L1524.9,753.9 L1521.1,747.3 L1517.2,740.9 L1513.2,734.7 L1509.2,728.7 L1505.0,722.9 L1500.8,717.3 L1496.7,711.9 L1492.4,706.7 L1488.2,701.7 L1483.9,696.9 L1479.5,692.2 L1475.3,687.7 L1471.0,683.4 L1466.7,679.2 L1462.4,675.2 L1458.1,671.3 L1453.9,667.6 L1449.6,664.1 L1445.4,660.7 L1441.2,657.5 L1437.0,654.4 L1432.8,651.4 L1428.5,648.5 L1424.3,645.8 L1420.1,643.2 L1416.0,640.7 L1411.9,638.3 L1407.7,636.1 L1403.6,634.0 L1399.4,632.0 L1395.2,630.1 L1391.1,628.3 L1387.0,626.6 L1383.0,625.1 L1379.0,623.6 L1375.0,622.3 L1371.0,621.0 L1367.1,619.8 L1363.2,618.8 L1359.4,617.8 L1355.7,616.9 L1351.9,616.0 L1348.3,615.3 L1344.7,614.6 L1341.1,613.9 L1337.7,613.3 L1334.2,612.8 L1330.9,612.3 L1327.5,611.9 L1324.2,611.6 L1321.0,611.3 L1317.7,611.1 L1314.5,610.9 L1311.4,610.8 L1308.3,610.7 L1305.3,610.6 L1302.3,610.6 L1299.3,610.5 L1296.5,610.5 L1293.7,610.3 L1290.9,610.1 L1288.2,610.0 M1500.1,1100.7 L1507.1,1090.5 L1513.8,1080.2 L1520.1,1069.8 L1526.0,1059.3 L1531.5,1048.7 L1536.6,1038.1 L1541.2,1027.4 L1545.0,1017.2 L1548.4,1007.0 L1551.5,996.9 L1554.2,986.8 L1556.7,976.7 L1558.8,966.7 L1560.7,956.8 L1562.2,946.9 L1563.4,937.1 L1564.3,927.4 L1565.0,917.8 L1565.4,908.4 L1565.6,899.1 L1565.6,889.9 L1565.3,880.9 L1564.8,872.0 L1564.1,863.3 L1563.1,854.8 L1562.0,846.4 L1560.7,838.2 L1559.3,830.2 L1557.8,822.4 L1556.2,814.7 L1554.3,806.6 L1552.2,798.5 L1549.8,790.5 L1547.3,782.7 L1544.5,775.1 L1541.6,767.7 L1538.7,760.4 L1535.6,753.4 L1532.4,746.5 L1529.1,739.7 L1525.6,733.2 L1522.0,726.8 L1518.3,720.6 L1514.6,714.6 L1510.9,708.8 L1507.0,703.1 L1503.1,697.6 L1499.1,692.3 L1495.0,687.2 L1491.0,682.2 L1486.9,677.4 L1482.8,672.7 L1478.6,668.2 L1474.4,663.9 L1470.2,659.7 L1465.9,655.7 L1461.6,651.8 L1457.4,648.1 L1453.0,644.5 L1448.5,641.1 L1443.9,637.8 L1439.4,634.7 L1434.9,631.6 L1430.4,628.7 L1425.9,626.0 L1421.4,623.4 L1416.9,620.9 L1412.2,618.6 L1407.5,616.4 L1402.9,614.3 L1398.4,612.3 L1393.8,610.4 L1389.3,608.7 L1384.8,607.0 L1380.4,605.5 L1376.1,604.0 L1371.8,602.7 L1367.5,601.4 L1363.4,600.1 L1359.3,599.0 L1355.3,597.9 L1351.4,596.8 L1347.6,595.8 L1343.8,594.7 L1340.1,593.8 L1336.5,592.8 L1332.9,592.0 L1329.3,591.2 L1325.7,590.5 L1322.1,589.9 L1318.6,589.3 L1315.0,588.9 L1311.5,588.4 L1308.0,588.0 L1304.6,587.7 L1301.2,587.4 L1297.8,587.1 L1294.5,586.8 L1291.2,586.5 L1287.9,586.2 M1496.1,1100.3 L1503.0,1090.5 L1509.6,1080.6 L1515.8,1070.5 L1521.6,1060.4 L1527.1,1050.1 L1532.3,1039.8 L1537.0,1029.5 L1541.0,1019.4 L1544.7,1009.4 L1548.1,999.3 L1551.1,989.4 L1553.9,979.4 L1556.4,969.5 L1558.6,959.6 L1560.5,949.8 L1562.1,940.1 L1563.4,930.4 L1564.5,920.8 L1565.4,911.4 L1566.1,902.0 L1566.6,892.8 L1566.8,883.7 L1566.8,874.8 L1566.6,865.9 L1566.2,857.2 L1565.6,848.6 L1564.9,840.2 L1564.1,831.9 L1563.1,823.8 L1562.0,815.8 L1560.8,807.5 L1559.3,799.3 L1557.5,791.2 L1555.6,783.2 L1553.5,775.4 L1551.2,767.7 L1548.9,760.2 L1546.4,752.9 L1543.7,745.6 L1540.9,738.6 L1537.9,731.7 L1534.9,724.9 L1531.7,718.4 L1528.4,711.9 L1525.1,705.7 L1521.6,699.5 L1518.0,693.6 L1514.3,687.8 L1510.5,682.2 L1506.7,676.7 L1502.8,671.4 L1498.8,666.2 L1494.8,661.2 L1490.6,656.4 L1486.4,651.7 L1482.2,647.2 L1477.9,642.9 L1473.5,638.7 L1469.0,634.7 L1464.2,630.8 L1459.4,627.1 L1454.6,623.5 L1449.7,620.1 L1444.9,616.8 L1440.0,613.6 L1435.1,610.7 L1430.1,607.9 L1425.0,605.2 L1419.9,602.6 L1414.8,600.2 L1409.7,597.9 L1404.7,595.8 L1399.7,593.7 L1394.7,591.8 L1389.9,590.0 L1385.0,588.2 L1380.3,586.6 L1375.7,585.0 L1371.1,583.4 L1366.7,582.0 L1362.3,580.5 L1358.1,579.1 L1354.0,577.6 L1350.0,576.1 L1346.1,574.7 L1342.2,573.3 L1338.2,572.0 L1334.3,570.8 L1330.4,569.7 L1326.5,568.7 L1322.6,567.7 L1318.6,566.9 L1314.7,566.1 L1310.8,565.4 L1306.9,564.8 L1303.0,564.3 L1299.2,563.8 L1295.3,563.3 L1291.5,562.9 L1287.7,562.5 M1492.0,1100.0 L1498.8,1090.5 L1505.3,1080.9 L1511.5,1071.2 L1517.3,1061.4 L1522.8,1051.5 L1528.0,1041.5 L1532.8,1031.5 L1537.1,1021.6 L1541.0,1011.7 L1544.7,1001.8 L1548.0,992.0 L1551.1,982.1 L1553.9,972.2 L1556.5,962.5 L1558.7,952.7 L1560.8,943.0 L1562.6,933.4 L1564.1,923.8 L1565.4,914.4 L1566.6,905.0 L1567.6,895.8 L1568.3,886.6 L1568.9,877.5 L1569.2,868.5 L1569.3,859.6 L1569.3,850.8 L1569.0,842.1 L1568.8,833.6 L1568.4,825.1 L1567.9,816.8 L1567.2,808.4 L1566.3,800.0 L1565.2,791.8 L1563.9,783.7 L1562.4,775.6 L1560.8,767.7 L1559.0,760.0 L1557.1,752.3 L1555.0,744.8 L1552.7,737.4 L1550.3,730.2 L1547.8,723.1 L1545.1,716.1 L1542.2,709.2 L1539.3,702.5 L1536.2,695.9 L1532.9,689.5 L1529.6,683.3 L1526.0,677.1 L1522.4,671.2 L1518.7,665.4 L1514.8,659.7 L1510.9,654.2 L1506.9,648.9 L1502.7,643.8 L1498.4,638.8 L1494.1,634.0 L1489.7,629.3 L1485.0,624.8 L1479.9,620.5 L1474.8,616.3 L1469.7,612.3 L1464.5,608.5 L1459.3,604.8 L1454.1,601.3 L1448.8,597.9 L1443.4,594.8 L1437.8,591.7 L1432.2,588.9 L1426.6,586.1 L1421.0,583.5 L1415.5,581.1 L1410.0,578.7 L1404.6,576.5 L1399.3,574.4 L1394.0,572.4 L1388.9,570.5 L1383.8,568.6 L1378.9,566.7 L1374.1,564.9 L1369.4,563.1 L1364.8,561.3 L1360.4,559.5 L1356.2,557.5 L1352.0,555.6 L1347.8,553.8 L1343.6,552.0 L1339.4,550.4 L1335.1,548.9 L1330.9,547.5 L1326.6,546.1 L1322.3,544.9 L1317.9,543.8 L1313.6,542.8 L1309.2,542.0 L1304.9,541.1 L1300.5,540.4 L1296.2,539.8 L1291.8,539.3 L1287.4,538.8 M1488.0,1099.6 L1494.7,1090.5 L1501.1,1081.3 L1507.2,1071.9 L1513.0,1062.5 L1518.5,1052.9 L1523.7,1043.3 L1528.5,1033.6 L1533.1,1023.8 L1537.3,1014.1 L1541.3,1004.3 L1544.9,994.5 L1548.3,984.8 L1551.4,975.0 L1554.4,965.3 L1557.0,955.6 L1559.5,946.0 L1561.7,936.4 L1563.7,926.8 L1565.5,917.4 L1567.1,908.0 L1568.6,898.7 L1569.9,889.4 L1570.9,880.2 L1571.8,871.1 L1572.4,862.0 L1572.9,853.0 L1573.2,844.1 L1573.5,835.2 L1573.7,826.5 L1573.8,817.9 L1573.7,809.3 L1573.4,800.8 L1572.9,792.4 L1572.2,784.1 L1571.3,775.9 L1570.3,767.8 L1569.2,759.8 L1567.8,751.8 L1566.3,744.0 L1564.6,736.3 L1562.7,728.7 L1560.6,721.2 L1558.4,713.8 L1556.0,706.5 L1553.5,699.4 L1550.7,692.3 L1547.8,685.5 L1544.8,678.7 L1541.5,672.1 L1538.1,665.7 L1534.6,659.4 L1530.9,653.2 L1527.1,647.2 L1523.1,641.4 L1519.0,635.8 L1514.7,630.3 L1510.3,625.0 L1505.8,619.9 L1501.0,615.0 L1495.7,610.2 L1490.3,605.6 L1484.8,601.1 L1479.3,596.9 L1473.8,592.8 L1468.2,588.9 L1462.5,585.2 L1456.7,581.7 L1450.6,578.3 L1444.5,575.1 L1438.4,572.1 L1432.4,569.2 L1426.4,566.4 L1420.4,563.8 L1414.5,561.3 L1408.7,558.9 L1402.9,556.7 L1397.4,554.4 L1391.9,552.2 L1386.6,550.0 L1381.4,547.9 L1376.4,545.7 L1371.5,543.5 L1366.8,541.3 L1362.3,538.9 L1357.9,536.6 L1353.4,534.3 L1349.0,532.1 L1344.4,530.0 L1339.9,528.1 L1335.3,526.2 L1330.6,524.6 L1325.9,523.0 L1321.1,521.5 L1316.4,520.2 L1311.6,519.1 L1306.7,518.0 L1301.9,517.1 L1297.0,516.3 L1292.1,515.7 L1287.2,515.1 M1477.4,1116.4 L1485.0,1106.5 L1492.2,1096.4 L1499.0,1086.1 L1505.5,1075.8 L1511.5,1065.3 L1517.2,1054.8 L1522.4,1044.1 L1527.2,1033.4 L1531.7,1022.7 L1535.7,1012.0 L1539.4,1001.3 L1542.7,990.6 L1545.7,979.9 L1548.2,969.2 L1550.3,958.6 L1552.1,947.9 L1553.4,937.4 L1554.4,927.0 L1555.2,916.7 L1555.6,906.5 L1555.6,896.5 L1555.3,886.6 L1554.8,876.9 L1553.9,867.3 L1552.8,858.0 L1551.5,848.8 L1549.9,839.9 L1548.0,831.1 L1546.0,822.6 L1543.8,814.3 L1541.0,806.2 L1537.7,798.3 L1534.0,790.6 L1530.3,783.2 L1526.3,776.0 L1522.2,769.0 L1518.2,762.3 L1514.0,755.8 L1509.7,749.5 L1505.3,743.5 L1500.7,737.7 L1496.2,732.1 L1491.6,726.7 L1487.0,721.5 L1482.5,716.5 L1477.9,711.8 L1473.4,707.2 L1468.8,702.8 L1464.2,698.6 L1459.8,694.6 L1455.3,690.8 L1450.9,687.1 L1446.6,683.6 L1442.2,680.2 L1438.0,677.0 L1433.8,673.9 L1429.6,671.0 L1425.6,668.2 L1421.5,665.5 L1417.5,662.9 L1413.6,660.5 L1409.7,658.1 L1405.9,655.9 L1402.1,653.8 L1398.4,651.7 L1394.6,649.8 L1390.9,648.0 L1387.3,646.3 L1383.6,644.8 L1380.0,643.3 L1376.4,641.9 L1372.8,640.6 L1369.3,639.4 L1365.8,638.3 L1362.3,637.3 L1358.9,636.3 L1355.5,635.5 L1352.1,634.8 L1348.7,634.2 L1345.4,633.6 L1342.0,633.2 L1338.7,632.9 L1335.5,632.6 L1332.3,632.4 L1329.1,632.3 L1326.0,632.2 L1322.9,632.3 L1320.0,632.3 L1317.0,632.5 L1314.1,632.6 L1311.3,632.8 L1308.5,633.0 L1305.9,633.2 L1303.3,633.5 L1300.7,633.7 L1298.3,633.8 L1295.9,633.9 L1293.6,633.9 L1291.4,633.8 L1289.2,633.7 M1473.3,1116.1 L1480.8,1106.5 L1488.0,1096.7 L1494.8,1086.8 L1501.2,1076.8 L1507.2,1066.7 L1512.8,1056.4 L1518.1,1046.1 L1523.2,1035.6 L1528.0,1025.0 L1532.3,1014.4 L1536.3,1003.9 L1540.0,993.3 L1543.2,982.7 L1546.1,972.1 L1548.6,961.5 L1550.8,950.9 L1552.6,940.4 L1554.0,930.0 L1555.2,919.7 L1556.1,909.5 L1556.7,899.5 L1556.9,889.5 L1556.9,879.6 L1556.6,869.9 L1556.0,860.4 L1555.1,851.0 L1554.1,841.8 L1552.8,832.8 L1551.4,824.0 L1549.7,815.3 L1547.4,807.1 L1544.7,799.1 L1541.7,791.3 L1538.6,783.7 L1535.3,776.2 L1531.8,769.0 L1528.4,762.1 L1524.7,755.3 L1521.0,748.7 L1517.1,742.3 L1513.1,736.1 L1509.1,730.2 L1505.0,724.4 L1500.8,718.8 L1496.7,713.4 L1492.5,708.2 L1488.3,703.1 L1484.0,698.3 L1479.7,693.6 L1475.5,689.1 L1471.2,684.8 L1467.0,680.6 L1462.8,676.6 L1458.5,672.7 L1454.3,669.0 L1450.0,665.5 L1445.9,662.1 L1441.7,658.8 L1437.5,655.6 L1433.3,652.6 L1429.0,649.7 L1424.9,647.0 L1420.7,644.3 L1416.6,641.8 L1412.5,639.4 L1408.4,637.1 L1404.2,635.0 L1400.1,633.0 L1395.9,631.1 L1391.8,629.2 L1387.8,627.5 L1383.7,626.0 L1379.7,624.5 L1375.7,623.1 L1371.8,621.8 L1367.9,620.6 L1364.1,619.5 L1360.3,618.5 L1356.5,617.5 L1352.8,616.7 L1349.1,615.9 L1345.5,615.1 L1342.0,614.5 L1338.5,613.8 L1335.1,613.3 L1331.7,612.8 L1328.4,612.4 L1325.1,612.0 L1321.8,611.7 L1318.6,611.4 L1315.4,611.2 L1312.3,611.1 L1309.2,611.0 L1306.1,610.9 L1303.1,610.8 L1300.2,610.7 L1297.3,610.6 L1294.5,610.5 L1291.8,610.2 L1289.1,610.0 M1469.3,1115.8 L1476.7,1106.5 L1483.8,1097.1 L1490.5,1087.5 L1496.8,1077.8 L1502.8,1068.0 L1508.5,1058.1 L1513.8,1048.1 L1519.2,1037.8 L1524.2,1027.3 L1528.9,1016.9 L1533.2,1006.4 L1537.2,996.0 L1540.8,985.5 L1544.0,974.9 L1546.9,964.4 L1549.5,953.9 L1551.7,943.5 L1553.7,933.1 L1555.3,922.8 L1556.7,912.5 L1557.7,902.4 L1558.5,892.3 L1559.0,882.4 L1559.2,872.6 L1559.1,862.8 L1558.8,853.2 L1558.3,843.8 L1557.6,834.5 L1556.7,825.4 L1555.6,816.4 L1553.9,808.0 L1551.8,799.9 L1549.4,791.9 L1546.9,784.1 L1544.2,776.5 L1541.4,769.1 L1538.5,761.9 L1535.4,754.8 L1532.2,747.9 L1528.9,741.2 L1525.5,734.6 L1522.0,728.3 L1518.3,722.1 L1514.6,716.1 L1510.9,710.2 L1507.1,704.6 L1503.2,699.1 L1499.3,693.7 L1495.2,688.6 L1491.2,683.6 L1487.1,678.8 L1483.1,674.1 L1478.9,669.6 L1474.7,665.2 L1470.6,661.0 L1466.3,657.0 L1462.1,653.1 L1457.9,649.4 L1453.5,645.8 L1449.0,642.3 L1444.5,639.0 L1440.0,635.8 L1435.5,632.8 L1431.1,629.9 L1426.6,627.1 L1422.1,624.5 L1417.6,622.0 L1412.9,619.6 L1408.3,617.4 L1403.7,615.2 L1399.2,613.2 L1394.6,611.3 L1390.1,609.5 L1385.7,607.9 L1381.3,606.3 L1376.9,604.8 L1372.7,603.4 L1368.4,602.1 L1364.3,600.8 L1360.2,599.7 L1356.2,598.5 L1352.3,597.4 L1348.5,596.4 L1344.8,595.3 L1341.1,594.3 L1337.5,593.3 L1333.8,592.4 L1330.3,591.6 L1326.7,590.9 L1323.1,590.3 L1319.5,589.7 L1316.0,589.2 L1312.5,588.7 L1309.0,588.3 L1305.6,588.0 L1302.2,587.6 L1298.8,587.3 L1295.5,587.0 L1292.2,586.6 L1288.9,586.3 M1465.3,1115.5 L1472.6,1106.5 L1479.5,1097.4 L1486.2,1088.2 L1492.5,1078.8 L1498.5,1069.4 L1504.1,1059.8 L1509.6,1050.1 L1515.2,1039.9 L1520.5,1029.7 L1525.5,1019.4 L1530.1,1009.0 L1534.4,998.7 L1538.3,988.2 L1542.0,977.8 L1545.2,967.4 L1548.2,956.9 L1550.9,946.5 L1553.3,936.1 L1555.4,925.8 L1557.2,915.5 L1558.8,905.4 L1560.1,895.2 L1561.1,885.1 L1561.8,875.2 L1562.3,865.3 L1562.5,855.5 L1562.5,845.8 L1562.3,836.2 L1562.0,826.8 L1561.5,817.4 L1560.3,808.9 L1558.9,800.6 L1557.1,792.5 L1555.3,784.6 L1553.2,776.8 L1551.0,769.1 L1548.7,761.6 L1546.2,754.3 L1543.5,747.1 L1540.8,740.0 L1537.8,733.1 L1534.9,726.4 L1531.7,719.8 L1528.4,713.4 L1525.1,707.1 L1521.7,701.0 L1518.1,695.0 L1514.5,689.2 L1510.7,683.6 L1506.9,678.1 L1503.0,672.8 L1499.1,667.6 L1495.1,662.6 L1491.0,657.8 L1486.9,653.1 L1482.6,648.6 L1478.3,644.2 L1474.0,640.0 L1469.5,636.0 L1464.8,632.0 L1460.0,628.3 L1455.2,624.7 L1450.4,621.2 L1445.5,617.9 L1440.7,614.8 L1435.8,611.8 L1430.9,608.9 L1425.8,606.2 L1420.7,603.7 L1415.6,601.2 L1410.5,598.9 L1405.5,596.7 L1400.6,594.6 L1395.6,592.7 L1390.8,590.8 L1385.9,589.1 L1381.3,587.4 L1376.6,585.8 L1372.1,584.2 L1367.7,582.7 L1363.3,581.2 L1359.1,579.7 L1355.0,578.2 L1351.0,576.7 L1347.1,575.3 L1343.2,573.8 L1339.3,572.5 L1335.4,571.3 L1331.5,570.1 L1327.6,569.1 L1323.6,568.1 L1319.7,567.3 L1315.8,566.5 L1311.9,565.7 L1308.0,565.1 L1304.1,564.5 L1300.3,564.0 L1296.4,563.5 L1292.6,563.0 L1288.8,562.6 M1461.2,1115.2 L1468.4,1106.5 L1475.3,1097.8 L1481.9,1088.9 L1488.2,1079.9 L1494.1,1070.7 L1499.8,1061.5 L1505.3,1052.1 L1511.2,1042.1 L1516.8,1032.0 L1522.1,1021.8 L1527.0,1011.6 L1531.6,1001.3 L1535.9,991.0 L1539.9,980.7 L1543.6,970.3 L1547.0,959.9 L1550.1,949.5 L1552.9,939.2 L1555.4,928.8 L1557.7,918.5 L1559.8,908.3 L1561.7,898.1 L1563.2,887.9 L1564.4,877.8 L1565.5,867.7 L1566.2,857.7 L1566.7,847.7 L1567.1,837.9 L1567.4,828.1 L1567.4,818.5 L1566.8,809.8 L1565.9,801.4 L1564.8,793.2 L1563.6,785.1 L1562.1,777.0 L1560.5,769.2 L1558.8,761.4 L1556.9,753.8 L1554.8,746.3 L1552.6,738.9 L1550.2,731.6 L1547.7,724.5 L1545.1,717.5 L1542.3,710.6 L1539.3,703.9 L1536.3,697.4 L1533.1,690.9 L1529.7,684.7 L1526.2,678.6 L1522.7,672.6 L1519.0,666.8 L1515.2,661.1 L1511.3,655.6 L1507.3,650.3 L1503.1,645.1 L1498.9,640.1 L1494.6,635.3 L1490.2,630.6 L1485.5,626.1 L1480.5,621.8 L1475.4,617.6 L1470.3,613.5 L1465.2,609.7 L1460.0,606.0 L1454.8,602.4 L1449.6,599.1 L1444.2,595.9 L1438.6,592.8 L1433.0,589.9 L1427.4,587.2 L1421.9,584.6 L1416.4,582.1 L1411.0,579.7 L1405.5,577.5 L1400.2,575.3 L1394.9,573.3 L1389.9,571.3 L1384.8,569.4 L1379.9,567.5 L1375.1,565.7 L1370.4,563.8 L1365.9,562.0 L1361.5,560.1 L1357.3,558.2 L1353.1,556.3 L1348.9,554.4 L1344.8,552.6 L1340.5,550.9 L1336.3,549.4 L1332.0,547.9 L1327.8,546.6 L1323.5,545.3 L1319.1,544.2 L1314.8,543.2 L1310.5,542.2 L1306.1,541.4 L1301.7,540.7 L1297.4,540.0 L1293.0,539.4 L1288.7,539.0 M1457.2,1114.8 L1464.3,1106.6 L1471.1,1098.1 L1477.6,1089.6 L1483.8,1080.9 L1489.8,1072.1 L1495.4,1063.2 L1501.0,1054.1 L1507.2,1044.2 L1513.1,1034.3 L1518.7,1024.3 L1523.9,1014.2 L1528.8,1004.0 L1533.4,993.8 L1537.8,983.5 L1541.9,973.2 L1545.7,962.9 L1549.2,952.6 L1552.5,942.2 L1555.5,931.9 L1558.3,921.5 L1560.9,911.3 L1563.2,901.0 L1565.3,890.7 L1567.0,880.4 L1568.6,870.1 L1569.8,859.9 L1570.9,849.7 L1571.9,839.6 L1572.7,829.5 L1573.3,819.5 L1573.3,810.7 L1573.0,802.2 L1572.6,793.8 L1571.9,785.5 L1571.1,777.3 L1570.1,769.2 L1569.0,761.2 L1567.6,753.3 L1566.1,745.4 L1564.5,737.7 L1562.6,730.1 L1560.6,722.6 L1558.4,715.2 L1556.1,707.9 L1553.6,700.8 L1550.9,693.8 L1548.0,686.9 L1545.0,680.1 L1541.8,673.5 L1538.4,667.1 L1534.9,660.8 L1531.2,654.6 L1527.4,648.6 L1523.5,642.8 L1519.4,637.1 L1515.2,631.7 L1510.8,626.4 L1506.4,621.3 L1501.5,616.3 L1496.3,611.5 L1490.9,606.8 L1485.5,602.4 L1480.0,598.1 L1474.5,594.0 L1468.9,590.1 L1463.3,586.4 L1457.5,582.9 L1451.5,579.5 L1445.4,576.2 L1439.3,573.2 L1433.3,570.2 L1427.3,567.5 L1421.4,564.8 L1415.5,562.3 L1409.7,559.9 L1403.9,557.6 L1398.5,555.3 L1393.0,553.1 L1387.7,550.8 L1382.5,548.7 L1377.5,546.5 L1372.7,544.3 L1368.0,542.0 L1363.5,539.6 L1359.1,537.2 L1354.7,534.9 L1350.2,532.7 L1345.7,530.6 L1341.1,528.6 L1336.5,526.7 L1331.9,525.0 L1327.2,523.4 L1322.5,521.9 L1317.7,520.6 L1312.9,519.4 L1308.1,518.3 L1303.2,517.3 L1298.3,516.5 L1293.5,515.8 L1288.6,515.3 M1504.2,1101.0 L1473.3,1116.1 M1500.1,1100.7 L1469.3,1115.8 M1496.1,1100.3 L1465.3,1115.5 M1492.0,1100.0 L1461.2,1115.2 M1508.2,1101.3 L1488.0,1099.6 L1457.2,1114.8 L1477.4,1116.4Z" fill="none" stroke="#7cc0f4" stroke-width="1" stroke-linejoin="round"/>
<defs>
<radialGradient id="gHub" gradientUnits="userSpaceOnUse" cx="1262" cy="722" r="210"><stop offset="0" stop-color="#363636"/><stop offset="0.27" stop-color="#3b3b3b"/><stop offset="0.37" stop-color="#525252"/><stop offset="0.5" stop-color="#6b6b6b"/><stop offset="1" stop-color="#777"/></radialGradient>
<linearGradient id="gS0" gradientUnits="userSpaceOnUse" x1="1125" y1="560" x2="1290" y2="640"><stop offset="0" stop-color="#b6d3ea"/><stop offset="0.43" stop-color="#86a8c6"/><stop offset="1" stop-color="#3a556e"/></linearGradient>
<linearGradient id="gS5" gradientUnits="userSpaceOnUse" x1="1288" y1="520" x2="1425" y2="665"><stop offset="0" stop-color="#a3c3dd"/><stop offset="0.43" stop-color="#5a7c9b"/><stop offset="1" stop-color="#324d66"/></linearGradient>
<linearGradient id="gS1" gradientUnits="userSpaceOnUse" x1="1090" y1="650" x2="1205" y2="745"><stop offset="0" stop-color="#7d9dba"/><stop offset="0.47" stop-color="#4d6c89"/><stop offset="1" stop-color="#2a4258"/></linearGradient>
<linearGradient id="gS2" gradientUnits="userSpaceOnUse" x1="1095" y1="835" x2="1275" y2="800"><stop offset="0" stop-color="#5c7a95"/><stop offset="0.44" stop-color="#334e65"/><stop offset="1" stop-color="#1f3345"/></linearGradient>
<linearGradient id="gS3" gradientUnits="userSpaceOnUse" x1="1290" y1="790" x2="1410" y2="885"><stop offset="0" stop-color="#15232e"/><stop offset="0.46" stop-color="#22384b"/><stop offset="1" stop-color="#3a546c"/></linearGradient>
<linearGradient id="gS4" gradientUnits="userSpaceOnUse" x1="1350" y1="700" x2="1450" y2="725"><stop offset="0" stop-color="#1b2d3d"/><stop offset="0.51" stop-color="#2b4358"/><stop offset="1" stop-color="#46627c"/></linearGradient>
<linearGradient id="gBore" gradientUnits="userSpaceOnUse" x1="1195" y1="680" x2="1290" y2="770"><stop offset="0" stop-color="#3b3b3b"/><stop offset="0.6" stop-color="#404040"/><stop offset="1" stop-color="#5a5a5a"/></linearGradient>
<clipPath id="cBoreF"><ellipse cx="1243" cy="716" rx="54" ry="57"/></clipPath>
<clipPath id="cS0"><path d="M1103.0,603.0 L1206.0,665.0 L1216.0,685.0 L1245.0,672.0 L1262.0,656.5 L1292.0,656.0 L1276.0,511.0 L1267.7,510.1 L1259.4,510.5 L1251.1,511.3 L1242.9,512.5 L1234.7,514.0 L1226.6,515.9 L1218.5,518.2 L1210.6,520.9 L1202.8,523.9 L1195.1,527.2 L1187.5,530.9 L1180.1,534.9 L1172.9,539.3 L1165.9,544.0 L1159.0,549.0 L1152.4,554.3 L1145.9,559.9 L1139.7,565.7 L1133.8,571.9 L1128.1,578.3 L1122.7,585.0 L1117.5,591.9 L1112.6,599.0 L1108.0,606.4Z"/></clipPath>
<clipPath id="cS1"><path d="M1089.0,811.5 L1204.0,759.0 L1216.0,745.0 L1206.0,716.0 L1216.0,688.0 L1206.0,665.0 L1103.0,603.0 L1103.8,613.9 L1099.8,621.5 L1096.2,629.4 L1092.9,637.4 L1089.9,645.5 L1087.2,653.8 L1084.9,662.2 L1082.9,670.7 L1081.2,679.2 L1079.9,687.9 L1078.9,696.5 L1078.3,705.3 L1078.0,714.0 L1078.1,722.7 L1078.5,731.5 L1079.3,740.2 L1080.4,748.8 L1081.9,757.4 L1083.7,766.0 L1085.8,774.4 L1088.3,782.8 L1091.1,791.0 L1094.3,799.1 L1097.7,807.0Z"/></clipPath>
<clipPath id="cS2"><path d="M1259.0,922.6 L1276.0,782.0 L1255.0,783.5 L1227.8,777.6 L1210.0,768.0 L1212.0,752.0 L1204.0,759.0 L1089.0,811.5 L1101.6,815.0 L1105.8,822.8 L1110.4,830.4 L1115.2,837.8 L1120.3,845.0 L1125.8,851.9 L1131.5,858.5 L1137.4,864.9 L1143.7,871.0 L1150.1,876.9 L1156.9,882.4 L1163.8,887.6 L1170.9,892.4 L1178.3,897.0 L1185.8,901.2 L1193.4,905.0 L1201.3,908.5 L1209.2,911.6 L1217.3,914.4 L1225.5,916.8 L1233.8,918.8 L1242.1,920.4 L1250.6,921.6 L1259.0,922.5Z"/></clipPath>
<clipPath id="cS3"><path d="M1434.0,827.0 L1333.0,757.0 L1333.0,760.7 L1331.0,772.5 L1322.7,789.5 L1312.5,806.4 L1303.0,818.0 L1290.0,832.0 L1278.0,848.0 L1268.5,860.0 L1266.0,868.0 L1259.0,922.6 L1267.7,922.9 L1276.3,923.0 L1285.0,922.6 L1293.7,921.8 L1302.3,920.7 L1310.8,919.1 L1319.3,917.1 L1327.6,914.7 L1335.9,912.0 L1344.1,908.8 L1352.1,905.3 L1359.9,901.4 L1367.6,897.1 L1375.1,892.4 L1382.4,887.5 L1389.4,882.1 L1396.3,876.5 L1402.9,870.5 L1409.2,864.3 L1415.3,857.7 L1421.1,850.9 L1426.6,843.8 L1431.8,836.4 L1436.6,828.8Z"/></clipPath>
<clipPath id="cS4"><path d="M1444.0,622.5 L1342.5,690.7 L1343.0,696.0 L1348.0,701.0 L1355.0,704.7 L1362.0,712.0 L1368.5,721.7 L1380.0,738.6 L1394.0,764.0 L1404.0,789.5 L1409.0,806.4 L1415.0,815.0 L1434.0,827.0 L1441.1,821.1 L1445.3,813.2 L1449.2,805.1 L1452.7,796.8 L1455.8,788.4 L1458.6,779.8 L1461.1,771.1 L1463.1,762.3 L1464.9,753.4 L1466.2,744.5 L1467.2,735.5 L1467.8,726.4 L1468.0,717.4 L1467.8,708.3 L1467.3,699.3 L1466.4,690.2 L1465.1,681.3 L1463.5,672.4 L1461.5,663.6 L1459.1,654.9 L1456.4,646.3 L1453.3,637.8 L1449.8,629.5 L1446.1,621.4Z"/></clipPath>
<clipPath id="cS5"><path d="M1276.0,511.0 L1292.0,656.0 L1310.0,655.5 L1329.5,656.4 L1350.0,658.0 L1363.4,659.8 L1378.6,661.5 L1444.0,622.5 L1452.0,606.0 L1439.5,588.0 L1415.0,566.0 L1388.6,547.5 L1362.0,533.0 L1337.8,522.0 L1305.0,514.0Z"/></clipPath>
</defs>
<ellipse cx="1270.0" cy="714.5" rx="204.0" ry="215.5" fill="#2c4664" fill-opacity="0.22"/>
<ellipse cx="1273.0" cy="716.5" rx="195.0" ry="206.5" fill="url(#gHub)"/>
<path d="M1103.0,603.0 L1206.0,665.0 L1216.0,685.0 L1245.0,672.0 L1262.0,656.5 L1292.0,656.0 L1276.0,511.0 L1267.7,510.1 L1259.4,510.5 L1251.1,511.3 L1242.9,512.5 L1234.7,514.0 L1226.6,515.9 L1218.5,518.2 L1210.6,520.9 L1202.8,523.9 L1195.1,527.2 L1187.5,530.9 L1180.1,534.9 L1172.9,539.3 L1165.9,544.0 L1159.0,549.0 L1152.4,554.3 L1145.9,559.9 L1139.7,565.7 L1133.8,571.9 L1128.1,578.3 L1122.7,585.0 L1117.5,591.9 L1112.6,599.0 L1108.0,606.4Z" fill="url(#gS0)"/>
<path d="M1203.9,663.8 L1205.6,659.1 L1207.5,654.5 L1209.7,649.9 L1212.2,645.4 L1214.9,641.0 L1217.9,636.7 L1221.3,632.5 L1224.8,628.5 L1228.7,624.6 L1232.8,620.9 L1237.1,617.5 L1241.7,614.2 L1246.5,611.2 L1251.6,608.4 L1256.8,605.9 L1262.2,603.7 L1267.8,601.8 L1273.6,600.2 L1279.5,598.9 L1285.6,598.0 M1171.0,643.9 L1173.8,637.8 L1177.0,631.8 L1180.5,625.9 L1184.3,620.2 L1188.5,614.6 L1193.0,609.3 L1197.7,604.1 L1202.8,599.2 L1208.2,594.5 L1213.8,590.2 L1219.7,586.1 L1225.8,582.3 L1232.2,578.8 L1238.8,575.7 L1245.5,572.9 L1252.5,570.5 L1259.7,568.4 L1267.0,566.8 L1274.4,565.5 L1281.9,564.6 M1137.0,623.5 L1141.1,615.8 L1145.5,608.4 L1150.3,601.1 L1155.6,594.1 L1161.1,587.4 L1167.1,580.9 L1173.3,574.8 L1179.9,568.9 L1186.8,563.4 L1194.0,558.3 L1201.5,553.5 L1209.2,549.1 L1217.2,545.2 L1225.4,541.6 L1233.8,538.5 L1242.4,535.8 L1251.1,533.6 L1260.0,531.9 L1269.0,530.6 L1278.1,529.9 M1231.8,680.5 L1232.5,677.1 L1233.4,673.7 L1234.6,670.3 L1236.0,666.9 L1237.6,663.6 L1239.5,660.3 L1241.7,657.0 L1244.0,653.8 L1246.6,650.8 L1249.5,647.8 L1252.5,645.0 L1255.8,642.4 L1259.3,639.9 L1263.0,637.6 L1266.9,635.4 L1271.0,633.6 L1275.2,631.9 L1279.7,630.5 L1284.2,629.3 L1289.0,628.5" fill="none" stroke="#86c6f5" stroke-width="1.1" clip-path="url(#cS0)"/>
<path d="M1089.0,811.5 L1204.0,759.0 L1216.0,745.0 L1206.0,716.0 L1216.0,688.0 L1206.0,665.0 L1103.0,603.0 L1103.8,613.9 L1099.8,621.5 L1096.2,629.4 L1092.9,637.4 L1089.9,645.5 L1087.2,653.8 L1084.9,662.2 L1082.9,670.7 L1081.2,679.2 L1079.9,687.9 L1078.9,696.5 L1078.3,705.3 L1078.0,714.0 L1078.1,722.7 L1078.5,731.5 L1079.3,740.2 L1080.4,748.8 L1081.9,757.4 L1083.7,766.0 L1085.8,774.4 L1088.3,782.8 L1091.1,791.0 L1094.3,799.1 L1097.7,807.0Z" fill="url(#gS1)"/>
<path d="M1201.7,760.0 L1197.4,757.0 L1193.1,753.5 L1189.0,749.7 L1185.1,745.5 L1181.4,740.9 L1177.9,736.0 L1174.6,730.7 L1171.6,725.2 L1168.9,719.3 L1166.6,713.1 L1164.5,706.6 L1162.9,699.9 L1161.6,693.0 L1160.7,685.8 L1160.3,678.5 L1160.2,671.0 L1160.7,663.4 L1161.6,655.7 L1162.9,648.0 L1164.8,640.2 M1164.9,776.9 L1160.4,771.5 L1156.1,765.8 L1152.1,759.8 L1148.4,753.5 L1145.0,746.9 L1141.9,740.0 L1139.1,732.8 L1136.7,725.4 L1134.7,717.8 L1133.1,710.0 L1131.9,702.0 L1131.1,693.8 L1130.7,685.5 L1130.8,677.1 L1131.3,668.6 L1132.3,660.1 L1133.8,651.5 L1135.8,642.9 L1138.2,634.4 L1141.1,625.9 M1127.0,794.2 L1122.3,786.6 L1118.0,778.7 L1114.1,770.6 L1110.5,762.1 L1107.4,753.5 L1104.7,744.6 L1102.4,735.5 L1100.6,726.2 L1099.2,716.8 L1098.3,707.3 L1097.9,697.7 L1098.0,688.0 L1098.5,678.2 L1099.6,668.4 L1101.1,658.7 L1103.2,649.0 L1105.7,639.3 L1108.8,629.8 L1112.3,620.3 L1116.4,611.1 M1232.8,745.9 L1228.7,744.9 L1224.7,743.4 L1220.6,741.5 L1216.6,739.3 L1212.7,736.5 L1208.9,733.4 L1205.3,729.8 L1201.8,725.9 L1198.6,721.5 L1195.6,716.8 L1192.9,711.6 L1190.6,706.2 L1188.6,700.4 L1186.9,694.3 L1185.7,687.9 L1184.9,681.3 L1184.6,674.5 L1184.7,667.6 L1185.3,660.4 L1186.4,653.2" fill="none" stroke="#86c6f5" stroke-width="1.1" clip-path="url(#cS1)"/>
<path d="M1259.0,922.6 L1276.0,782.0 L1255.0,783.5 L1227.8,777.6 L1210.0,768.0 L1212.0,752.0 L1204.0,759.0 L1089.0,811.5 L1101.6,815.0 L1105.8,822.8 L1110.4,830.4 L1115.2,837.8 L1120.3,845.0 L1125.8,851.9 L1131.5,858.5 L1137.4,864.9 L1143.7,871.0 L1150.1,876.9 L1156.9,882.4 L1163.8,887.6 L1170.9,892.4 L1178.3,897.0 L1185.8,901.2 L1193.4,905.0 L1201.3,908.5 L1209.2,911.6 L1217.3,914.4 L1225.5,916.8 L1233.8,918.8 L1242.1,920.4 L1250.6,921.6 L1259.0,922.5Z" fill="url(#gS2)"/>
<path d="M1275.7,784.8 L1272.0,788.3 L1267.9,791.6 L1263.5,794.5 L1258.8,797.2 L1253.7,799.6 L1248.3,801.6 L1242.7,803.2 L1236.8,804.4 L1230.7,805.2 L1224.4,805.5 L1217.9,805.3 L1211.3,804.7 L1204.6,803.5 L1197.8,801.8 L1191.1,799.5 L1184.3,796.7 L1177.5,793.4 L1170.9,789.5 L1164.4,785.0 L1158.0,780.0 M1270.2,829.8 L1264.2,832.2 L1258.0,834.2 L1251.5,835.8 L1244.9,837.1 L1238.0,837.9 L1231.0,838.3 L1223.8,838.2 L1216.6,837.7 L1209.2,836.6 L1201.8,835.1 L1194.4,833.1 L1187.0,830.6 L1179.6,827.6 L1172.3,824.0 L1165.1,820.0 L1158.0,815.4 L1151.0,810.3 L1144.3,804.7 L1137.8,798.7 L1131.5,792.1 M1264.6,876.2 L1256.4,877.5 L1248.1,878.2 L1239.6,878.5 L1231.0,878.3 L1222.4,877.6 L1213.7,876.4 L1205.0,874.7 L1196.4,872.4 L1187.7,869.6 L1179.2,866.3 L1170.7,862.4 L1162.4,858.0 L1154.2,853.1 L1146.2,847.7 L1138.4,841.7 L1130.9,835.3 L1123.7,828.3 L1116.8,820.9 L1110.2,813.0 L1104.0,804.7 M1280.2,746.9 L1279.1,751.1 L1277.4,755.3 L1275.3,759.5 L1272.6,763.5 L1269.4,767.2 L1265.7,770.7 L1261.6,773.9 L1257.0,776.8 L1252.1,779.2 L1246.7,781.2 L1241.1,782.7 L1235.1,783.7 L1228.8,784.1 L1222.4,783.9 L1215.8,783.1 L1209.0,781.6 L1202.3,779.5 L1195.5,776.7 L1188.8,773.2 L1182.2,769.0" fill="none" stroke="#86c6f5" stroke-width="1.1" clip-path="url(#cS2)"/>
<path d="M1434.0,827.0 L1333.0,757.0 L1333.0,760.7 L1331.0,772.5 L1322.7,789.5 L1312.5,806.4 L1303.0,818.0 L1290.0,832.0 L1278.0,848.0 L1268.5,860.0 L1266.0,868.0 L1259.0,922.6 L1267.7,922.9 L1276.3,923.0 L1285.0,922.6 L1293.7,921.8 L1302.3,920.7 L1310.8,919.1 L1319.3,917.1 L1327.6,914.7 L1335.9,912.0 L1344.1,908.8 L1352.1,905.3 L1359.9,901.4 L1367.6,897.1 L1375.1,892.4 L1382.4,887.5 L1389.4,882.1 L1396.3,876.5 L1402.9,870.5 L1409.2,864.3 L1415.3,857.7 L1421.1,850.9 L1426.6,843.8 L1431.8,836.4 L1436.6,828.8Z" fill="url(#gS3)"/>
<path d="M1335.0,758.4 L1334.6,763.0 L1333.8,767.7 L1332.8,772.4 L1331.5,777.1 L1329.8,781.9 L1327.9,786.6 L1325.6,791.3 L1323.0,795.9 L1320.1,800.4 L1316.9,804.8 L1313.4,809.1 L1309.6,813.2 L1305.5,817.2 L1301.1,820.9 L1296.4,824.5 L1291.5,827.8 L1286.3,830.8 L1280.8,833.6 L1275.1,836.1 L1269.2,838.2 M1367.3,780.8 L1365.4,787.0 L1363.0,793.1 L1360.4,799.2 L1357.3,805.2 L1353.9,811.1 L1350.2,816.8 L1346.1,822.4 L1341.6,827.8 L1336.8,833.0 L1331.7,838.0 L1326.3,842.7 L1320.6,847.1 L1314.5,851.3 L1308.2,855.1 L1301.6,858.6 L1294.8,861.8 L1287.7,864.6 L1280.4,867.0 L1272.9,869.0 L1265.3,870.6 M1400.7,803.9 L1397.1,811.7 L1393.2,819.4 L1388.8,826.9 L1384.0,834.2 L1378.8,841.3 L1373.2,848.1 L1367.2,854.7 L1360.8,860.9 L1354.1,866.8 L1347.0,872.4 L1339.6,877.6 L1331.8,882.4 L1323.8,886.8 L1315.5,890.7 L1306.9,894.2 L1298.2,897.2 L1289.2,899.8 L1280.0,901.8 L1270.7,903.3 L1261.2,904.3 M1307.8,739.5 L1308.5,742.7 L1309.0,746.1 L1309.3,749.6 L1309.4,753.2 L1309.1,756.8 L1308.7,760.6 L1307.9,764.4 L1306.9,768.2 L1305.6,772.0 L1304.0,775.8 L1302.1,779.6 L1300.0,783.3 L1297.5,787.0 L1294.8,790.5 L1291.8,794.0 L1288.5,797.3 L1285.0,800.4 L1281.2,803.4 L1277.1,806.2 L1272.8,808.7" fill="none" stroke="#86c6f5" stroke-width="1.1" clip-path="url(#cS3)"/>
<path d="M1444.0,622.5 L1342.5,690.7 L1343.0,696.0 L1348.0,701.0 L1355.0,704.7 L1362.0,712.0 L1368.5,721.7 L1380.0,738.6 L1394.0,764.0 L1404.0,789.5 L1409.0,806.4 L1415.0,815.0 L1434.0,827.0 L1441.1,821.1 L1445.3,813.2 L1449.2,805.1 L1452.7,796.8 L1455.8,788.4 L1458.6,779.8 L1461.1,771.1 L1463.1,762.3 L1464.9,753.4 L1466.2,744.5 L1467.2,735.5 L1467.8,726.4 L1468.0,717.4 L1467.8,708.3 L1467.3,699.3 L1466.4,690.2 L1465.1,681.3 L1463.5,672.4 L1461.5,663.6 L1459.1,654.9 L1456.4,646.3 L1453.3,637.8 L1449.8,629.5 L1446.1,621.4Z" fill="url(#gS4)"/>
<path d="M1344.5,689.3 L1347.7,692.2 L1350.8,695.3 L1353.8,698.6 L1356.6,702.2 L1359.3,706.0 L1361.8,710.1 L1364.2,714.3 L1366.4,718.8 L1368.3,723.5 L1370.1,728.4 L1371.6,733.4 L1372.9,738.7 L1374.0,744.1 L1374.7,749.6 L1375.2,755.3 L1375.5,761.0 L1375.4,766.9 L1375.0,772.9 L1374.4,778.9 L1373.4,785.0 M1377.0,667.5 L1380.7,672.4 L1384.3,677.6 L1387.6,683.0 L1390.6,688.7 L1393.5,694.6 L1396.0,700.8 L1398.3,707.1 L1400.2,713.7 L1401.9,720.4 L1403.2,727.3 L1404.2,734.4 L1404.8,741.5 L1405.1,748.8 L1405.0,756.2 L1404.6,763.6 L1403.8,771.1 L1402.6,778.6 L1401.0,786.1 L1399.0,793.6 L1396.6,801.1 M1410.5,645.0 L1414.9,652.1 L1418.9,659.6 L1422.6,667.2 L1425.9,675.2 L1428.9,683.4 L1431.5,691.7 L1433.6,700.3 L1435.3,709.0 L1436.6,717.9 L1437.5,726.9 L1437.9,736.0 L1437.9,745.1 L1437.4,754.3 L1436.4,763.6 L1435.0,772.8 L1433.1,782.0 L1430.8,791.1 L1427.9,800.2 L1424.6,809.1 L1420.9,817.9 M1317.1,707.8 L1319.8,709.2 L1322.5,710.8 L1325.1,712.6 L1327.7,714.6 L1330.2,716.8 L1332.6,719.2 L1334.9,721.8 L1337.1,724.6 L1339.2,727.5 L1341.2,730.7 L1343.0,734.0 L1344.7,737.5 L1346.3,741.1 L1347.7,744.9 L1348.9,748.8 L1349.9,752.9 L1350.8,757.1 L1351.5,761.4 L1351.9,765.8 L1352.2,770.3" fill="none" stroke="#86c6f5" stroke-width="1.1" clip-path="url(#cS4)"/>
<path d="M1276.0,511.0 L1292.0,656.0 L1310.0,655.5 L1329.5,656.4 L1350.0,658.0 L1363.4,659.8 L1378.6,661.5 L1444.0,622.5 L1452.0,606.0 L1439.5,588.0 L1415.0,566.0 L1388.6,547.5 L1362.0,533.0 L1337.8,522.0 L1305.0,514.0Z" fill="url(#gS5)"/>
<path d="M1291.7,653.1 L1295.2,651.1 L1298.9,649.4 L1302.8,647.8 L1306.8,646.5 L1311.0,645.4 L1315.3,644.5 L1319.8,644.0 L1324.4,643.7 L1329.1,643.6 L1333.8,643.9 L1338.7,644.4 L1343.6,645.3 L1348.6,646.4 L1353.5,647.9 L1358.5,649.7 L1363.5,651.8 L1368.5,654.2 L1373.4,656.9 L1378.3,660.0 L1383.1,663.4 M1286.6,606.7 L1292.1,605.3 L1297.7,604.2 L1303.6,603.5 L1309.5,603.0 L1315.6,603.0 L1321.7,603.2 L1328.0,603.9 L1334.3,604.9 L1340.6,606.3 L1346.9,608.1 L1353.3,610.3 L1359.6,612.9 L1365.8,615.8 L1372.0,619.2 L1378.1,623.0 L1384.1,627.2 L1390.0,631.7 L1395.6,636.7 L1401.1,642.0 L1406.4,647.7 M1281.3,558.9 L1289.2,558.1 L1297.2,557.8 L1305.3,558.0 L1313.5,558.6 L1321.6,559.7 L1329.8,561.2 L1338.0,563.2 L1346.1,565.7 L1354.1,568.7 L1362.1,572.1 L1369.9,576.1 L1377.6,580.4 L1385.1,585.3 L1392.4,590.6 L1399.5,596.3 L1406.3,602.5 L1412.9,609.1 L1419.2,616.1 L1425.2,623.6 L1430.8,631.4 M1296.0,692.2 L1298.8,690.4 L1301.6,688.7 L1304.5,687.1 L1307.5,685.6 L1310.5,684.2 L1313.6,683.0 L1316.8,681.8 L1320.0,680.8 L1323.2,679.8 L1326.6,679.0 L1329.9,678.3 L1333.3,677.8 L1336.8,677.3 L1340.3,677.0 L1343.8,676.8 L1347.3,676.7 L1350.9,676.8 L1354.5,677.0 L1358.1,677.3 L1361.8,677.7" fill="none" stroke="#86c6f5" stroke-width="1.1" clip-path="url(#cS5)"/>
<ellipse cx="1273.0" cy="716.5" rx="195.0" ry="206.5" fill="none" stroke="#86c6f5" stroke-width="1" opacity="0.8"/>
<path d="M1292.0,656.0 L1310.0,655.5 L1329.5,656.4 L1350.0,658.0 L1363.4,659.8 L1378.6,661.5" fill="none" stroke="#86c6f5" stroke-width="1.1"/>
<path d="M1342.5,690.7 L1343.0,696.0 L1348.0,701.0 L1355.0,704.7 L1362.0,712.0 L1368.5,721.7 L1380.0,738.6 L1394.0,764.0 L1404.0,789.5 L1409.0,806.4 L1415.0,815.0" fill="none" stroke="#86c6f5" stroke-width="1.1"/>
<path d="M1333.0,757.0 L1333.0,760.7 L1331.0,772.5 L1322.7,789.5 L1312.5,806.4 L1303.0,818.0 L1290.0,832.0 L1278.0,848.0 L1268.5,860.0 L1266.0,868.0" fill="none" stroke="#86c6f5" stroke-width="1.1"/>
<path d="M1276.0,511.0 L1305.0,514.0 L1337.8,522.0 L1362.0,533.0 L1388.6,547.5 L1415.0,566.0 L1439.5,588.0 L1452.0,606.0 L1444.0,622.5 L1422.5,618.6 L1414.0,601.7 L1402.0,584.0 L1388.6,567.8 L1372.0,552.0 L1354.7,539.0 L1338.0,528.0 L1320.8,518.6 L1298.0,513.0Z" fill="#475d74" fill-opacity="0.9"/>
<path d="M1276.0,511.0 L1305.0,514.0 L1337.8,522.0 L1362.0,533.0 L1388.6,547.5 L1415.0,566.0 L1439.5,588.0 L1452.0,606.0" fill="none" stroke="#86c6f5" stroke-width="1"/>
<linearGradient id="gLE0" gradientUnits="userSpaceOnUse" x1="1284.0" y1="583.5" x2="1292.0" y2="582.6"><stop offset="0" stop-color="#16242f"/><stop offset="0.2" stop-color="#1d3041"/><stop offset="0.3" stop-color="#8fb1cd"/><stop offset="1" stop-color="#6f93b3"/></linearGradient>
<path d="M1276.0,511.0 L1292.0,656.0 L1298.4,655.3 L1284.0,510.1Z" fill="url(#gLE0)"/>
<linearGradient id="gLE1f" gradientUnits="userSpaceOnUse" x1="1280" y1="560" x2="1292" y2="656"><stop offset="0" stop-color="#2f4a62" stop-opacity="0"/><stop offset="1" stop-color="#2f4a62" stop-opacity="0.9"/></linearGradient>
<path d="M1279,540 L1292,656 L1298.5,655 L1286.5,540Z" fill="url(#gLE1f)"/>
<linearGradient id="gLE1" gradientUnits="userSpaceOnUse" x1="1154.5" y1="634.0" x2="1150.1" y2="641.3"><stop offset="0" stop-color="#a9c7df"/><stop offset="0.45" stop-color="#8eaecb"/><stop offset="0.8" stop-color="#4a6782"/><stop offset="1" stop-color="#22374a"/></linearGradient>
<path d="M1103.0,603.0 L1206.0,665.0 L1202.5,670.8 L1098.6,610.3Z" fill="url(#gLE1)"/>
<linearGradient id="gLE2" gradientUnits="userSpaceOnUse" x1="1146.5" y1="785.2" x2="1150.0" y2="793.0"><stop offset="0" stop-color="#27405a"/><stop offset="0.25" stop-color="#6d8eab"/><stop offset="0.5" stop-color="#a3c0d8"/><stop offset="0.75" stop-color="#6d8eab"/><stop offset="1" stop-color="#2b455c"/></linearGradient>
<path d="M1089.0,811.5 L1204.0,759.0 L1206.8,765.2 L1092.5,819.2Z" fill="url(#gLE2)"/>
<linearGradient id="gLE3" gradientUnits="userSpaceOnUse" x1="1267.5" y1="852.3" x2="1274.9" y2="853.2"><stop offset="0" stop-color="#233a4e"/><stop offset="0.3" stop-color="#5c7c99"/><stop offset="0.5" stop-color="#9dbbd3"/><stop offset="0.7" stop-color="#5c7c99"/><stop offset="1" stop-color="#1c2f40"/></linearGradient>
<path d="M1259.0,922.6 L1276.0,782.0 L1282.0,782.7 L1266.4,923.5Z" fill="url(#gLE3)"/>
<linearGradient id="gLE4" gradientUnits="userSpaceOnUse" x1="1383.5" y1="792.0" x2="1385.5" y2="789.1"><stop offset="0" stop-color="#5b7993"/><stop offset="1" stop-color="#2a4156"/></linearGradient>
<path d="M1434.0,827.0 L1333.0,757.0 L1334.6,754.7 L1436.0,824.1Z" fill="url(#gLE4)"/>
<linearGradient id="gLE5" gradientUnits="userSpaceOnUse" x1="1393.2" y1="656.6" x2="1391.3" y2="653.7"><stop offset="0" stop-color="#5f7e9a"/><stop offset="1" stop-color="#34506a"/></linearGradient>
<path d="M1444.0,622.5 L1342.5,690.7 L1340.9,688.4 L1442.0,619.6Z" fill="url(#gLE5)"/>
<path d="M1434.0,827.0 L1333.0,757.0" fill="none" stroke="#86c6f5" stroke-width="0.9" opacity="0.9"/>
<path d="M1444.0,622.5 L1342.5,690.7" fill="none" stroke="#86c6f5" stroke-width="0.9" opacity="0.9"/>
<ellipse cx="1243" cy="716" rx="54" ry="57" fill="url(#gBore)"/>
<g clip-path="url(#cBoreF)"><ellipse cx="1279.5" cy="717" rx="52.5" ry="55.5" fill="#f0f0f0"/></g>
<path d="M1297,719.5 L1726,737" stroke="#7cc0f4" stroke-width="1.2" fill="none"/>
<path d="M1283,718.8 L1297,719.4" stroke="#e0208a" stroke-width="1.2" fill="none"/>
<path d="M1340,721.2 L1361,722" stroke="#f02020" stroke-width="1.6" fill="none"/>
<path d="M1283,718.8 L1281.2,756" stroke="#70f070" stroke-width="1.1" fill="none"/>
<path d="M1280.6,778 L1279.5,808" stroke="#00dd00" stroke-width="1.6" fill="none"/>
<text x="1379" y="722" font-family="Liberation Serif,serif" font-size="12" font-weight="bold" fill="#111">X</text>
<text x="1279" y="819" font-family="Liberation Serif,serif" font-size="12" font-weight="bold" fill="#111">Y</text>
</svg>
<div class="a" style="left:0px;top:0px;width:1997px;height:23px;background:#6c69d6;border-bottom:1px solid #605dcb"></div>
<div class="a" style="left:0px;top:3px;width:16px;height:17px;background:#f7b500"></div>
<div class="a" style="left:285px;top:0px;width:85px;height:23px;background:#ee9ac3"></div>
<div class="a" style="left:371px;top:0px;width:94px;height:24px;background:#c5dcfa"></div>
<div class="a" style="left:466px;top:0px;width:76px;height:23px;background:#ee9ac3"></div>
<div class="a" style="left:0px;top:23px;width:1997px;height:27px;background:#fff"></div>
<div class="a" style="left:0px;top:23px;width:56px;height:23px;background:#74c415"></div>
<div class="a" style="left:0px;top:49px;width:1997px;height:1px;background:#9bc3ef"></div>
<div class="a" style="left:371px;top:24px;width:93px;height:26px;background:#fdfdfd;border-left:1px solid #a9ccf2;border-right:1px solid #a9ccf2"></div>
<div class="a" style="left:284px;top:27px;width:1px;height:17px;background:#d8d8d8"></div>
<div class="a" style="left:541px;top:27px;width:1px;height:17px;background:#d8d8d8"></div>
<div class="a" style="left:0px;top:50px;width:1997px;height:107px;background:#f5f5f3"></div>
<div class="a" style="left:0px;top:157px;width:1997px;height:1px;background:#d8d8d8"></div>
<div class="a" style="left:0px;top:158px;width:1997px;height:2px;background:#f2f2f2"></div>
<div class="vs" style="left:314px;top:52px;width:1px;height:101px;"></div>
<div class="vs" style="left:496px;top:52px;width:1px;height:101px;"></div>
<div class="vs" style="left:944px;top:52px;width:1px;height:101px;"></div>
<div class="vs" style="left:1207px;top:52px;width:1px;height:101px;"></div>
<div class="vs" style="left:393.5px;top:65px;width:1px;height:55px;"></div>
<div class="vs" style="left:653px;top:65px;width:1px;height:55px;"></div>
<div class="vs" style="left:785px;top:65px;width:1px;height:55px;"></div>
<div class="vs" style="left:1105px;top:65px;width:1px;height:55px;"></div>
<div class="vs" style="left:1135px;top:65px;width:1px;height:55px;"></div>
<div class="a" style="left:72px;top:160px;width:1px;height:1020px;background:#ababab"></div>
<div class="a" style="left:73px;top:160px;width:280px;height:1020px;background:#fff"></div>
<div class="a" style="left:353px;top:160px;width:3px;height:1020px;background:#b9b9b9"></div>
<div class="a" style="left:2px;top:160px;width:50px;height:65px;border:3px solid #0000ff;border-right:none"></div>
<div class="a" style="left:67px;top:178px;width:3px;height:40px;background:#0000ff"></div>
<div class="a" style="left:52px;top:161px;width:17px;height:17px;background:#e1e1e1;border:1px solid #c8c8c8"></div>
<div class="a" style="left:52px;top:218px;width:17px;height:17px;background:#e1e1e1;border:1px solid #c8c8c8"></div>
<div class="a" style="left:76px;top:187px;width:274px;height:23px;background:#e1e1e1;border:1px solid #adadad"></div>
<div class="a" style="left:1231px;top:160px;width:97px;height:30px;background:#fdecbc;border:1px solid #f6d063"></div>
<div class="sp" style="left:884px;top:55px;width:48px;height:26px;"></div>
<div class="sp" style="left:884px;top:81px;width:48px;height:26px;"></div>
<div class="sp" style="left:884px;top:107px;width:48px;height:26px;"></div>
<div class="sp spd" style="left:721px;top:81px;width:60px;height:25px;"></div>
<div class="sp spd" style="left:1037px;top:81px;width:64px;height:25px;"></div>
<div class="cb " style="left:510px;top:60.5px;"></div>
<div class="cb " style="left:510px;top:85.5px;"></div>
<div class="cb " style="left:660px;top:60px;"></div>
<div class="cb " style="left:958px;top:60px;"></div>
<div class="cb " style="left:958px;top:112px;background:#d4d4d4;border-color:#bcbcbc;"></div>
<div class="cb cbm" style="left:97px;top:223.5px"></div>
<div class="cb cbm" style="left:115px;top:255.0px"></div>
<div class="cb cbm" style="left:133px;top:282.5px"></div>
<div class="cb " style="left:151px;top:303.5px"></div>
<div class="cb " style="left:151px;top:321.5px"></div>
<div class="cb cbm" style="left:151px;top:339.5px"></div>
<div class="cb cbm" style="left:133px;top:360.5px"></div>
<div class="cb cbm" style="left:151px;top:381.5px"></div>
<div class="cb cbm" style="left:133px;top:402.5px"></div>
<div class="cb cbm" style="left:151px;top:423.5px"></div>
<div class="cb cbm" style="left:97px;top:449.5px"></div>
<div class="cb " style="left:115px;top:473.5px"></div>
<div class="cb cbm" style="left:115px;top:491.5px"></div>
<div class="cb cbm" style="left:115px;top:509.5px"></div>
<div class="cb " style="left:115px;top:527.5px"></div>
<div class="cb " style="left:115px;top:545.5px"></div>
<div class="cb cbm" style="left:97px;top:571.5px"></div>
<div class="cb cbm" style="left:115px;top:603.0px"></div>
<div class="cb " style="left:133px;top:627.5px"></div>
<div class="cb " style="left:133px;top:645.5px"></div>
<div class="cb " style="left:97px;top:671.5px"></div>
<span class="t" style="left:293px;top:0.5px;font-size:13.5px;color:#333;transform:scaleX(0.9743)">Component</span>
<span class="t" style="left:395px;top:0.5px;font-size:13.5px;color:#333;transform:scaleX(0.9194)">3D View</span>
<span class="t" style="left:480px;top:0.5px;font-size:13.5px;color:#333;transform:scaleX(0.9394)">3D View</span>
<span class="t" style="left:554px;top:1.5px;font-size:13.5px;color:#ffffff;transform:scaleX(0.9486)">New project (PUMP) - CFturbo 2022 R1.1</span>
<span class="t" style="left:70px;top:25.5px;font-size:13.5px;color:#262626;transform:scaleX(0.8252)">PROJECT</span>
<span class="t" style="left:151px;top:25.5px;font-size:13.5px;color:#262626;transform:scaleX(0.8591)">SETTINGS</span>
<span class="t" style="left:238px;top:25.5px;font-size:13.5px;color:#262626;transform:scaleX(0.8220)">HELP</span>
<span class="t" style="left:298px;top:25.5px;font-size:13.5px;color:#262626;transform:scaleX(0.8535)">IMPELLER</span>
<span class="t" style="left:386px;top:25.5px;font-size:13.5px;color:#262626;transform:scaleX(0.9271)">3D MODEL</span>
<span class="t" style="left:481px;top:25.5px;font-size:13.5px;color:#262626;transform:scaleX(0.8446)">BLADES</span>
<span class="t" style="left:19px;top:91px;font-size:13.5px;color:#1e1e1e;transform:scaleX(0.9886)">Copy to</span>
<span class="t" style="left:14px;top:108px;font-size:13.5px;color:#1e1e1e;transform:scaleX(1.0220)">clipboard</span>
<span class="t" style="left:80px;top:91px;font-size:13.5px;color:#1e1e1e;transform:scaleX(0.9364)">Print</span>
<span class="t" style="left:81px;top:108px;font-size:13.5px;color:#1e1e1e;transform:scaleX(0.9254)">view</span>
<span class="t" style="left:123px;top:91px;font-size:13.5px;color:#1e1e1e;transform:scaleX(0.8772)">Save</span>
<span class="t" style="left:117px;top:108px;font-size:13.5px;color:#1e1e1e;transform:scaleX(0.9869)">picture</span>
<span class="t" style="left:162px;top:91px;font-size:13.5px;color:#1e1e1e;transform:scaleX(0.8886)">Save 3D-PDF</span>
<span class="t" style="left:170px;top:108px;font-size:13.5px;color:#1e1e1e;transform:scaleX(0.9781)">document</span>
<span class="t" style="left:241px;top:91px;font-size:13.5px;color:#1e1e1e;transform:scaleX(0.9310)">Load CAD</span>
<span class="t" style="left:257px;top:108px;font-size:13.5px;color:#1e1e1e;transform:scaleX(0.9512)">data</span>
<span class="t" style="left:134px;top:136px;font-size:13.5px;color:#444;transform:scaleX(0.9369)">General</span>
<span class="t" style="left:339px;top:91px;font-size:13.5px;color:#1e1e1e;transform:scaleX(0.8667)">Fit</span>
<span class="t" style="left:332px;top:108px;font-size:13.5px;color:#1e1e1e;transform:scaleX(0.9624)">view</span>
<span class="t" style="left:419px;top:58px;font-size:13.5px;color:#1e1e1e;transform:scaleX(0.9238)">Reset view</span>
<span class="t" style="left:419px;top:83px;font-size:13.5px;color:#1e1e1e;transform:scaleX(0.9540)">Load view</span>
<span class="t" style="left:419px;top:108px;font-size:13.5px;color:#1e1e1e;transform:scaleX(0.9101)">Save view</span>
<span class="t" style="left:391px;top:136px;font-size:13.5px;color:#444;transform:scaleX(0.9300)">View</span>
<span class="t" style="left:530px;top:58px;font-size:13.5px;color:#1e1e1e;transform:scaleX(0.9684)">Coordinate system</span>
<span class="t" style="left:530px;top:83px;font-size:13.5px;color:#1e1e1e;transform:scaleX(0.9269)">Show scale</span>
<span class="t" style="left:529px;top:108px;font-size:13.5px;color:#1e1e1e;transform:scaleX(0.9994)">Background color</span>
<span class="t" style="left:680px;top:57px;font-size:13.5px;color:#1e1e1e;transform:scaleX(0.9802)">Rotate impeller</span>
<span class="t" style="left:680px;top:83px;font-size:13.5px;color:#8a8a8a;transform:scaleX(0.9220)">Speed</span>
<span class="t" style="left:724px;top:82px;font-size:13.5px;color:#8a8a8a;transform:scaleX(0.9990)">5 /10</span>
<span class="t" style="left:679px;top:108.5px;font-size:13.5px;color:#1e1e1e;transform:scaleX(0.9650)">Display quality</span>
<span class="t" style="left:696px;top:136px;font-size:13.5px;color:#444;transform:scaleX(0.9430)">Settings</span>
<span class="t" style="left:812px;top:57px;font-size:13.5px;color:#1e1e1e;transform:scaleX(0.9690)">Point width</span>
<span class="t" style="left:812px;top:83px;font-size:13.5px;color:#1e1e1e;transform:scaleX(0.9540)">Curve width</span>
<span class="t" style="left:812px;top:108.5px;font-size:13.5px;color:#1e1e1e;transform:scaleX(0.9519)">Isocurves</span>
<span class="t" style="left:887px;top:56px;font-size:13.5px;color:#1e1e1e;transform:scaleX(0.9792)">2 px</span>
<span class="t" style="left:887px;top:82px;font-size:13.5px;color:#1e1e1e;transform:scaleX(0.9792)">1 px</span>
<span class="t" style="left:887px;top:108px;font-size:13.5px;color:#1e1e1e;transform:scaleX(0.7983)">1</span>
<span class="t" style="left:978px;top:57px;font-size:13.5px;color:#1e1e1e;transform:scaleX(0.9737)">Activate clipping</span>
<span class="t" style="left:978px;top:83px;font-size:13.5px;color:#8a8a8a;transform:scaleX(0.9577)">Position</span>
<span class="t" style="left:1040px;top:82px;font-size:13.5px;color:#8a8a8a;transform:scaleX(0.9456)">0 %</span>
<span class="t" style="left:978px;top:108.5px;font-size:13.5px;color:#8a8a8a;transform:scaleX(0.9742)">Show clipping plane</span>
<span class="t" style="left:1156px;top:91px;font-size:13.5px;color:#777;transform:scaleX(0.9189)">Flip</span>
<span class="t" style="left:1141px;top:108px;font-size:13.5px;color:#777;transform:scaleX(0.9994)">direction</span>
<span class="t" style="left:1051px;top:136px;font-size:13.5px;color:#444;transform:scaleX(0.9840)">Clipping</span>
<span class="t" style="left:1170px;top:166.6px;font-size:13.5px;color:#111;transform:scaleX(1.0042)">Meridian</span>
<span class="t" style="left:1264px;top:166.6px;font-size:13.5px;color:#111;transform:scaleX(1.0038)">3D Model</span>
<span class="t" style="left:1370px;top:166.6px;font-size:13.5px;color:#111;transform:scaleX(0.9869)">Report</span>
<span class="t" style="left:76px;top:164px;font-size:13px;color:#111;transform:scaleX(0.8061)">MODEL STATES</span>
<span class="t" style="left:80px;top:189px;font-size:13px;color:#111;transform:scaleX(0.9023)">&lt;recent state&gt;</span>
<span class="t" style="left:116px;top:220px;font-size:13.5px;color:#111;transform:scaleX(0.9094)">COMPONENTS</span>
<span class="t" style="left:165px;top:251.5px;font-size:14px;color:#0000e0;font-weight:bold;transform:scaleX(0.8936)">1: RE-model</span>
<span class="t" style="left:178px;top:279px;font-size:13px;color:#1010e8;transform:scaleX(0.9427)">Meridian</span>
<span class="t" style="left:170px;top:300px;font-size:13px;color:#1010e8;transform:scaleX(0.9640)">Hub</span>
<span class="t" style="left:170px;top:318px;font-size:13px;color:#1010e8;transform:scaleX(0.9064)">Shroud</span>
<span class="t" style="left:170px;top:336px;font-size:13px;color:#1010e8;transform:scaleX(0.8407)">Edges</span>
<span class="t" style="left:178px;top:357px;font-size:13px;color:#1010e8;transform:scaleX(0.9141)">Mean surface</span>
<span class="t" style="left:170px;top:378px;font-size:13px;color:#1010e8;transform:scaleX(0.9579)">Main</span>
<span class="t" style="left:178px;top:399px;font-size:13px;color:#1010e8;transform:scaleX(0.8722)">Blade</span>
<span class="t" style="left:170px;top:420px;font-size:13px;color:#1010e8;transform:scaleX(0.9579)">Main</span>
<span class="t" style="left:116px;top:446px;font-size:13.5px;color:#111;transform:scaleX(0.8829)">GEOMETRY</span>
<span class="t" style="left:134px;top:470px;font-size:13px;color:#a0a0a0;transform:scaleX(0.9131)">Points</span>
<span class="t" style="left:134px;top:488px;font-size:13px;color:#a0a0a0;transform:scaleX(0.8741)">Curves</span>
<span class="t" style="left:134px;top:506px;font-size:13px;color:#a0a0a0;transform:scaleX(0.8575)">Surfaces</span>
<span class="t" style="left:134px;top:524px;font-size:13px;color:#a0a0a0;transform:scaleX(0.8806)">Solid faces</span>
<span class="t" style="left:134px;top:542px;font-size:13px;color:#a0a0a0;transform:scaleX(0.8752)">Solids</span>
<span class="t" style="left:116px;top:568px;font-size:13.5px;color:#111;transform:scaleX(0.8651)">IMPORTS</span>
<span class="t" style="left:134px;top:599.5px;font-size:14px;color:#000;font-weight:bold;transform:scaleX(0.9206)">yl00.stp</span>
<span class="t" style="left:152px;top:624px;font-size:13px;color:#111;transform:scaleX(0.8806)">Solid faces</span>
<span class="t" style="left:152px;top:642px;font-size:13px;color:#111;transform:scaleX(0.8990)">Solid</span>
<span class="t" style="left:116px;top:668px;font-size:13.5px;color:#111;transform:scaleX(0.8391)">REFERENCE DESIGNS</span>
<svg width="1997" height="1180" viewBox="0 0 1997 1180" style="left:0;top:0;pointer-events:none">
<path d="M13.6,7 C8.5,4.2 2.2,6.6 2.2,11.6 C2.2,16 7.2,17.8 11.6,15.6 C8.6,15.8 5.6,14.4 5.6,11.6 C5.6,8.6 9.6,7.2 14.2,8.6 Z" fill="#1a2a6c"/>
<path d="M7.6,11.2 L13.6,10.6 L13.2,12.2 L8,12.6Z" fill="#1a2a6c"/>
<path d="M23.5,5 V18 M93.5,5 V18" stroke="#aeade8" stroke-width="1"/>
<path d="M34.5,5.5 H45.5 L47,7 V18 H34.5Z" fill="#fff" stroke="#555" stroke-width="0.8"/><rect x="36.5" y="5.5" width="8" height="4.5" fill="#666"/><rect x="41" y="6" width="2" height="3.5" fill="#fff"/>
<path d="M58.5,7.5 L67.5,16.5 M67.5,7.5 L58.5,16.5" stroke="#444" stroke-width="1.3"/>
<path d="M78.5,10.5 H85" stroke="#111" stroke-width="1.3"/><path d="M78.3,12.8 H85.2 L81.75,16.2Z" fill="#111"/>
<g stroke="#111" stroke-width="1.25" fill="none" stroke-linecap="round"><path d="M21.8,29.2 L22.6,30.8 M16.6,31.6 H27.6 M19,32.4 C20.4,35.6 23.6,38.6 27.8,40.2 M25.2,32.2 C23.8,36.2 20.6,39 16.4,40.4"/><path d="M31.8,29.4 C31.2,31.6 30,33.6 28.8,34.8 M30.8,32.6 V40.6 M34.6,29.8 C34.4,31.2 33.8,32.4 33.2,33.2 M33.8,32 H39.4 M32.6,35.6 H40 M36.6,29.4 V40.6"/></g>
<rect x="32" y="63" width="14.5" height="16.5" fill="#fff" stroke="#808080" stroke-width="1.1"/><rect x="37.5" y="67.3" width="14.5" height="17" fill="#fff" stroke="#808080" stroke-width="1.1"/>
<rect x="88" y="62.8" width="12" height="3.2" fill="#666"/><path d="M82,68.5 a1.5,1.5 0 0 1 1.5,-1.5 H104.3 a1.5,1.5 0 0 1 1.5,1.5 V77.5 H82Z" fill="#666"/><rect x="88" y="74.3" width="12" height="9.2" fill="#fff" stroke="#666" stroke-width="1.2"/>
<rect x="126.3" y="62.2" width="21.4" height="21.4" fill="#fff" stroke="#666" stroke-width="1.8"/>
<rect x="130.6" y="63.1" width="11.8" height="7.3" fill="#666"/>
<rect x="137.0" y="63.7" width="3.2" height="5.6" fill="#fff"/>
<path d="M188,60.5 H204.5 L210,66 V85.5 a1,1 0 0 1 -1,1 H189 a1,1 0 0 1 -1,-1Z" fill="#fdfdfd" stroke="#808080" stroke-width="1.3"/><path d="M204.5,60.5 V66 H210" fill="none" stroke="#808080" stroke-width="1"/>
<text x="199.2" y="75.2" text-anchor="middle" font-family="Liberation Sans,sans-serif" font-weight="bold" font-size="10.5" fill="#7a7a7a" textLength="14" lengthAdjust="spacingAndGlyphs">3D</text>
<text x="199.4" y="84.6" text-anchor="middle" font-family="Liberation Sans,sans-serif" font-weight="bold" font-size="10.5" fill="#7a7a7a" textLength="20" lengthAdjust="spacingAndGlyphs">PDF</text>
<path d="M278,66.5 V62.3 H262 V83.3 H278 V79.5" fill="none" stroke="#666" stroke-width="2"/>
<path d="M284.5,72.2 H274 V69 L267.5,73.5 L274,78 V74.8 H284.5Z" fill="#b36a00"/>
<rect x="334" y="63.2" width="22.6" height="18.2" rx="1.5" fill="#fff" stroke="#555" stroke-width="1.4"/>
<path d="M345.3,64.8 l3.3,3.6 h-2.2 v3 h3.6 v-2.2 l3.9,3.3 l-3.9,3.3 v-2.2 h-3.6 v3 h2.2 l-3.3,3.6 l-3.3,-3.6 h2.2 v-3 h-3.6 v2.2 l-3.9,-3.3 l3.9,-3.3 v2.2 h3.6 v-3 h-2.2Z" fill="#555"/>
<text x="370.3" y="69.2" font-family="Liberation Sans,sans-serif" font-size="13" fill="#7b78e0" stroke="#7b78e0" stroke-width="0.5" textLength="7.8" lengthAdjust="spacingAndGlyphs">X</text>
<path d="M373,72.10000000000001 C376,67.9 382.5,67.9 385.5,72.10000000000001 C382.5,76.3 376,76.3 373,72.10000000000001Z" fill="#fff" stroke="#111" stroke-width="1"/><circle cx="379.3" cy="72.2" r="2.3" fill="#111"/>
<text x="370.3" y="94.5" font-family="Liberation Sans,sans-serif" font-size="13" fill="#7b78e0" stroke="#7b78e0" stroke-width="0.5" textLength="7.8" lengthAdjust="spacingAndGlyphs">Y</text>
<path d="M373,97.4 C376,93.2 382.5,93.2 385.5,97.4 C382.5,101.6 376,101.6 373,97.4Z" fill="#fff" stroke="#111" stroke-width="1"/><circle cx="379.3" cy="97.5" r="2.3" fill="#111"/>
<text x="370.3" y="119.5" font-family="Liberation Sans,sans-serif" font-size="13" fill="#7b78e0" stroke="#7b78e0" stroke-width="0.5" textLength="7.8" lengthAdjust="spacingAndGlyphs">Z</text>
<path d="M373,122.4 C376,118.2 382.5,118.2 385.5,122.4 C382.5,126.6 376,126.6 373,122.4Z" fill="#fff" stroke="#111" stroke-width="1"/><circle cx="379.3" cy="122.5" r="2.3" fill="#111"/>
<path d="M414,69.5 C413.5,62.5 405,62 404.3,68.5" fill="none" stroke="#858585" stroke-width="3"/><path d="M400.2,67.2 H408.6 L404.4,73.8Z" fill="#858585"/>
<path d="M400.6,99 V87.8 H405.2 L406.5,89.3 H411.8 V91.2" fill="#666" stroke="#666" stroke-width="1"/><path d="M400.8,99.2 L403.4,91.8 H415.4 L412.6,99.2Z" fill="#fff" stroke="#666" stroke-width="1.1"/>
<rect x="401.6" y="111.6" width="12.8" height="12.6" fill="#fff" stroke="#666" stroke-width="1.2"/>
<rect x="404.2" y="112.2" width="7.0" height="4.3" fill="#666"/>
<rect x="408.0" y="112.8" width="1.9" height="3.3" fill="#fff"/>
<path d="M512.7,67.3 L515.3,70.1 L520.4,63.5" fill="none" stroke="#111" stroke-width="2"/>
<path d="M512.7,92.3 L515.3,95.1 L520.4,88.5" fill="none" stroke="#111" stroke-width="2"/>
<path d="M153.5,310 L156.2,312.8 L161.5,306.8" fill="none" stroke="#222" stroke-width="1.2"/>
<path d="M153.5,328 L156.2,330.8 L161.5,324.8" fill="none" stroke="#222" stroke-width="1.2"/>
<path d="M99.5,678 L102.2,680.8 L107.5,674.8" fill="none" stroke="#222" stroke-width="1.2"/>
<rect x="510.6" y="111.3" width="14.6" height="10.6" fill="#fff" stroke="#222" stroke-width="1.4"/><path d="M510,124.3 H526" stroke="#e2e2e2" stroke-width="1.5"/>
<path d="M638.6,116.19999999999999 H643.8000000000001 L641.2,119.19999999999999Z" fill="#222"/>
<path d="M767.8,116.89999999999999 H773.0 L770.4,119.89999999999999Z" fill="#222"/>
<path d="M663.5,113.5 L673.8,112.2 L675,120.5 L668,125.8 L661.2,120.2Z M663.5,113.5 L675,120.5 M673.8,112.2 L661.2,120.2 M663.5,113.5 L668,125.8 M673.8,112.2 L668,125.8" fill="none" stroke="#8a8a8a" stroke-width="0.8"/>
<path d="M920.0,63.3 L922.6,60.199999999999996 L925.2,63.3Z M920.0,71.3 L922.6,74.39999999999999 L925.2,71.3Z" fill="#222"/>
<path d="M920.0,89.3 L922.6,86.2 L925.2,89.3Z M920.0,97.3 L922.6,100.39999999999999 L925.2,97.3Z" fill="#222"/>
<path d="M920.0,115.3 L922.6,112.2 L925.2,115.3Z M920.0,123.3 L922.6,126.39999999999999 L925.2,123.3Z" fill="#222"/>
<path d="M769.0,89.3 L771.6,86.2 L774.2,89.3Z M769.0,96.9 L771.6,100.0 L774.2,96.9Z" fill="#5d80ad"/>
<path d="M1088.4,89.1 L1091,86.0 L1093.6,89.1Z M1088.4,96.7 L1091,99.8 L1093.6,96.7Z" fill="#5d80ad"/>
<rect x="1109.5" y="57.5" width="21.5" height="21.5" fill="#d2d2d2" stroke="#9a9a9a" stroke-width="1"/>
<text x="1112.5" y="68.0" font-family="Liberation Sans,sans-serif" font-size="12.5" fill="#8f9fcb" textLength="6.8" lengthAdjust="spacingAndGlyphs">X</text>
<path d="M1118.0,67.7 l5.6,-1.6 l2,5.6 l-5.6,1.8Z" fill="#a9b7dc" stroke="#8f9fcb" stroke-width="0.6"/>
<text x="1113" y="92.0" font-family="Liberation Sans,sans-serif" font-size="12.5" fill="#8f9fcb" textLength="6.8" lengthAdjust="spacingAndGlyphs">y</text>
<path d="M1118.5,91.7 l5.6,-1.6 l2,5.6 l-5.6,1.8Z" fill="#a9b7dc" stroke="#8f9fcb" stroke-width="0.6"/>
<text x="1113" y="117.1" font-family="Liberation Sans,sans-serif" font-size="12.5" fill="#8f9fcb" textLength="6.8" lengthAdjust="spacingAndGlyphs">z</text>
<path d="M1118.5,116.8 l5.6,-1.6 l2,5.6 l-5.6,1.8Z" fill="#a9b7dc" stroke="#8f9fcb" stroke-width="0.6"/>
<path d="M1158,64.5 L1176.5,82.5" stroke="#4a5a8c" stroke-width="1.6"/>
<path d="M1176,65 L1170.6,70.4 M1170.3,67.4 V70.7 H1173.6 M1158.5,83 L1163.9,77.6 M1164.2,80.6 V77.3 H1160.9" stroke="#6b7fb0" stroke-width="0.9" fill="none"/>
<rect x="1139.5" y="167.5" width="20.5" height="15.5" fill="#fff" stroke="#666" stroke-width="1"/><rect x="1140.2" y="168.2" width="6.2" height="14.1" fill="#c5c1f0"/><rect x="1146.9" y="168.2" width="6.2" height="14.1" fill="#bfdcc0"/><rect x="1153.6" y="168.2" width="5.8" height="14.1" fill="#e6bcc0"/><path d="M1146.6,168 V183 M1153.3,168 V183" stroke="#888" stroke-width="0.7"/>
<path d="M1246,164 L1256,168.8 V180.5 L1246,186 L1236.2,180.5 V168.8Z" fill="#5a5a5a"/><path d="M1236.2,168.8 L1246,173.8 L1256,168.8 M1246,173.8 V186" stroke="#fbe6a8" stroke-width="1.2" fill="none"/>
<rect x="1333.5" y="166.5" width="21.5" height="16.5" fill="#fff" stroke="#666" stroke-width="1"/><rect x="1334" y="167" width="20.5" height="3.8" fill="#cfcfcf"/><path d="M1333.5,170.8 H1355 M1333.5,174.8 H1355 M1333.5,178.8 H1355 M1340.6,170.8 V183 M1347.8,170.8 V183" stroke="#707070" stroke-width="1.1"/>
<path d="M371,167 V178 L362,172.5Z" fill="#666"/>
<rect x="230.6" y="167.6" width="12.8" height="12.6" fill="#fff" stroke="#555" stroke-width="1.1"/>
<rect x="233.2" y="168.2" width="7.0" height="4.3" fill="#555"/>
<rect x="237.0" y="168.8" width="1.9" height="3.3" fill="#fff"/>
<path d="M255.2,168.5 H259.8 M257.5,168.5 V179.5 M255.2,179.5 H259.8" stroke="#444" stroke-width="1"/><text x="259.8" y="178.2" font-family="Liberation Sans,sans-serif" font-size="10.5" fill="#555" textLength="9.5" lengthAdjust="spacingAndGlyphs">ab</text>
<path d="M286.5,169.2 V180 M281.1,174.6 H291.9" stroke="#4c9a4c" stroke-width="2.6"/>
<path d="M306,174.6 H317" stroke="#707070" stroke-width="2.4"/>
<text x="333" y="180" font-family="Liberation Sans,sans-serif" font-size="14" font-weight="bold" fill="#111">?</text>
<path d="M337,196.5 L340.8,200.3 L344.6,196.5" fill="none" stroke="#444" stroke-width="1.1"/>
<path d="M60.2,165.3 V173.3 M56.2,169.3 H64.2" stroke="#222" stroke-width="1.5"/>
<path d="M60.2,222.3 V230.3 M56.2,226.3 H64.2" stroke="#222" stroke-width="1.5"/>
<path d="M21,189 L27.5,188.5 C32,186 35.5,179.5 38,172.5 L49.5,175.5 C49,187 46.5,198 41,205 C36,210.5 29,213.5 21,214.5Z" fill="#c0c0f8" stroke="#555" stroke-width="0.8"/><path d="M24.5,188.8 C27,196.5 33,201.5 41,203.5" fill="none" stroke="#444" stroke-width="0.9"/>
<path d="M82.3,227.5 L86.5,231.7 L90.7,227.5" fill="none" stroke="#333" stroke-width="1.3"/>
<path d="M100.3,259.5 L104.5,263.7 L108.7,259.5" fill="none" stroke="#333" stroke-width="1.3"/>
<path d="M118.3,287 L122.5,291.2 L126.7,287" fill="none" stroke="#333" stroke-width="1.3"/>
<path d="M118.3,365 L122.5,369.2 L126.7,365" fill="none" stroke="#333" stroke-width="1.3"/>
<path d="M118.3,407 L122.5,411.2 L126.7,407" fill="none" stroke="#333" stroke-width="1.3"/>
<path d="M82.3,453.5 L86.5,457.7 L90.7,453.5" fill="none" stroke="#333" stroke-width="1.3"/>
<path d="M82.3,575.5 L86.5,579.7 L90.7,575.5" fill="none" stroke="#333" stroke-width="1.3"/>
<path d="M100.3,607 L104.5,611.2 L108.7,607" fill="none" stroke="#333" stroke-width="1.3"/>
<path d="M138.5,305.8 L142.7,310 L138.5,314.2" fill="none" stroke="#999" stroke-width="1.2"/>
<path d="M138.5,323.8 L142.7,328 L138.5,332.2" fill="none" stroke="#999" stroke-width="1.2"/>
<path d="M138.5,341.8 L142.7,346 L138.5,350.2" fill="none" stroke="#999" stroke-width="1.2"/>
<path d="M138.5,383.8 L142.7,388 L138.5,392.2" fill="none" stroke="#999" stroke-width="1.2"/>
<path d="M138.5,425.8 L142.7,430 L138.5,434.2" fill="none" stroke="#999" stroke-width="1.2"/>
<path d="M120.5,629.8 L124.7,634 L120.5,638.2" fill="none" stroke="#999" stroke-width="1.2"/>
<path d="M86.5,245 V438 M122.5,301 V354 M122.5,379 V396 M86.5,471 V560 M104.5,471 V552.5 M104.5,480.5 H115 M104.5,498.5 H115 M104.5,516.5 H115 M104.5,534.5 H115 M104.5,552.5 H115 M86.5,593 V678.5 H97 M122.5,643 V652.5 H133" fill="none" stroke="#a8a8a8" stroke-width="1"/>
<path d="M134.5,264 H141.5 C144.5,262 146.5,258.5 147,253 L149.5,253.3 C149.8,259 148.8,265 144.5,269.3 H134.5Z" fill="#fff" stroke="#444" stroke-width="0.9"/><path d="M141.5,264 C144.5,262 146.5,258.5 147,253 L149.5,253.3 C149.8,259 148.8,264 145,267.8Z" fill="#b5b5b5" stroke="#444" stroke-width="0.8"/>
<path d="M149.5,284 C155,283.5 162,282 166,280.5 L170.5,291.5 C165,294.5 157,297.5 150.5,298.5Z" fill="#fff" stroke="#333" stroke-width="1"/><path d="M150,291.5 C157,291 164,289 168.5,286.5" fill="none" stroke="#d04040" stroke-width="0.8"/>
<path d="M151.5,368.5 L165,357" stroke="#3a3a7a" stroke-width="1"/><path d="M151.5,374 C157,370 162,366.5 167.5,364" stroke="#8a2a2a" stroke-width="1" fill="none"/><path d="M151.5,378.5 C157,375.5 162,373 168,371" stroke="#2a7a2a" stroke-width="1" fill="none"/>
<path d="M150,419.5 L163.5,400.5 H170 L156.5,419.5Z" fill="#fff" stroke="#3030c0" stroke-width="1"/>
</svg>
</body></html>
